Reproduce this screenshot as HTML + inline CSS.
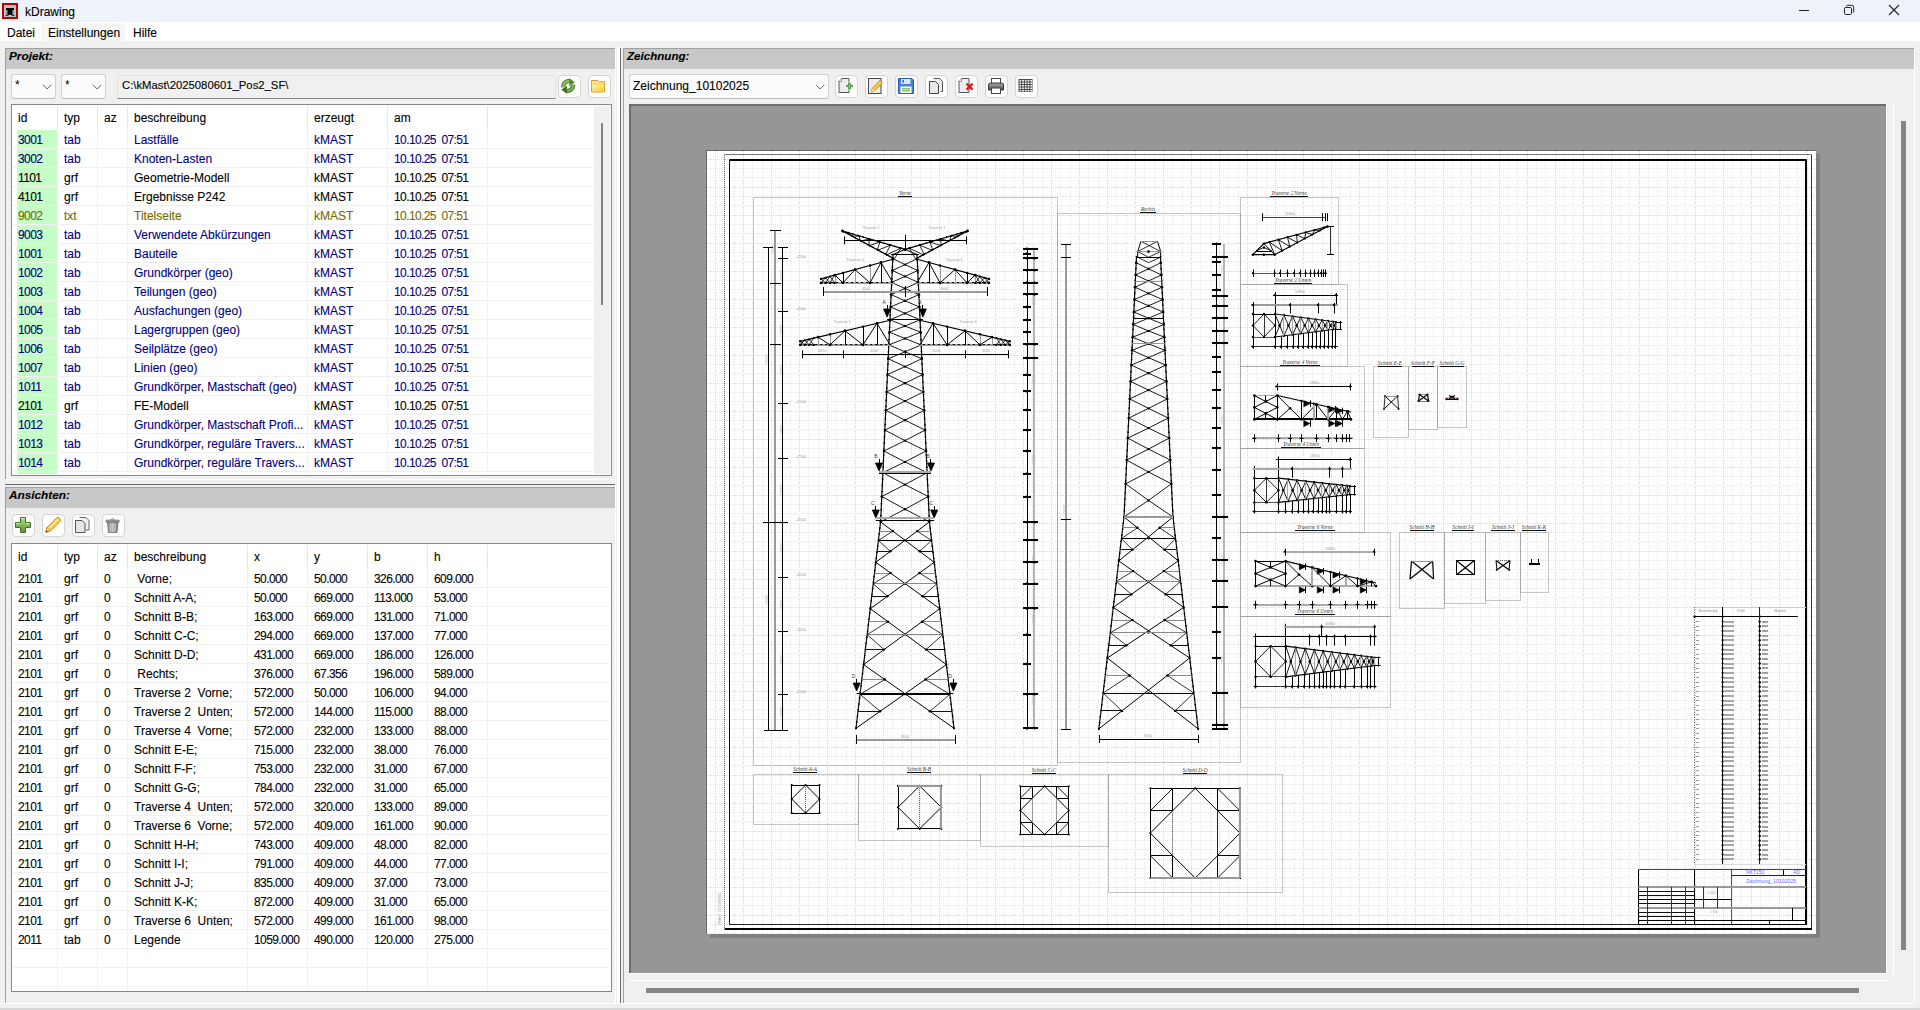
<!DOCTYPE html>
<html><head><meta charset="utf-8"><style>
html,body{margin:0;padding:0;width:1920px;height:1010px;overflow:hidden;background:#f0f0f0}
body{position:relative;font-family:"Liberation Sans", sans-serif;font-size:12px;color:#000}
.t{position:absolute;white-space:pre;font-size:12px;-webkit-text-stroke:0.1px currentColor}
.btn{position:absolute;width:21px;height:21px;border:1px solid #d5d5d5;border-radius:4px;background:#fdfdfd}
.combo{position:absolute;border:1px solid #cfd3d6;border-bottom-color:#b8bcbf;border-radius:3px;background:#fbfbfb}
</style></head><body>
<div style="position:absolute;left:0px;top:0px;width:1920px;height:22px;background:#eef3f9"></div><div style="position:absolute;left:2px;top:3px;width:12px;height:12px;border:2px solid #c00000;background:#b9c3c3"></div><svg style="position:absolute;left:4px;top:5px" width="12" height="12"><path d="M2 3h8v2l-1 0v5h1.5v0.8h-2.5l-1-1H5l-1 1H1.5V10H3V5H2z" fill="#000"/><path d="M3.2 5v5M8.8 5v5" stroke="#5a6a78" stroke-width="1.2"/></svg><div class="t" style="left:25px;top:3px;height:19px;line-height:19px;font-size:12px;color:#000">kDrawing</div><div style="position:absolute;left:1799px;top:10px;width:10px;height:1px;background:#222"></div><svg style="position:absolute;left:1843px;top:4px" width="12" height="12"><rect x="1.5" y="3.5" width="7" height="7" rx="1.2" fill="none" stroke="#222" stroke-width="1"/><path d="M3.5 2.5v-0.2q0-1 1-1h4.2q2 0 2 2v4.2q0 1-1 1" fill="none" stroke="#222" stroke-width="1"/></svg><svg style="position:absolute;left:1888px;top:4px" width="13" height="13"><path d="M1 1l10 10M11 1L1 11" stroke="#222" stroke-width="1.1"/></svg><div style="position:absolute;left:0px;top:22px;width:1920px;height:19px;background:#fff"></div><div style="position:absolute;left:41px;top:23px;width:84px;height:18px;background:#f5f5f5;border-radius:2px"></div><div class="t" style="left:7px;top:24px;height:19px;line-height:19px;font-size:12px">Datei</div><div class="t" style="left:48px;top:24px;height:19px;line-height:19px;font-size:12px">Einstellungen</div><div class="t" style="left:133px;top:24px;height:19px;line-height:19px;font-size:12px">Hilfe</div><div style="position:absolute;left:0px;top:41px;width:1920px;height:969px;background:#f0f0f0"></div><div style="position:absolute;left:0px;top:1003px;width:1915px;height:1px;background:#fff"></div><div style="position:absolute;left:0px;top:1008px;width:1920px;height:2px;background:#d8d8d8"></div><div style="position:absolute;left:5px;top:48px;width:610px;height:1px;background:#a0a0a0"></div><div style="position:absolute;left:5px;top:48px;width:1px;height:431px;background:#a0a0a0"></div><div style="position:absolute;left:6px;top:49px;width:609px;height:20px;background:#c8c8c8"></div><div class="t" style="left:9px;top:46px;height:20px;line-height:20px;font-size:11.8px;font-weight:bold;font-style:italic">Projekt:</div><div class="combo" style="left:11px;top:74px;width:43px;height:23px"></div><div class="t" style="left:15px;top:79px;font-size:12px;line-height:12px;-webkit-text-stroke:0">*</div><svg style="position:absolute;left:42px;top:84px" width="10" height="6"><path d="M1 0.8l4.2 4.2 4.2-4.2" fill="none" stroke="#606060" stroke-width="1"/></svg><div class="combo" style="left:61px;top:74px;width:43px;height:23px"></div><div class="t" style="left:65px;top:79px;font-size:12px;line-height:12px;-webkit-text-stroke:0">*</div><svg style="position:absolute;left:92px;top:84px" width="10" height="6"><path d="M1 0.8l4.2 4.2 4.2-4.2" fill="none" stroke="#606060" stroke-width="1"/></svg><div style="position:absolute;left:117px;top:75px;width:437px;height:22px;background:#f0f0f0;border:1px solid #e2e2e2;border-bottom:1px solid #868686;border-radius:3px 3px 0 0"></div><div class="t" style="left:122px;top:74px;height:22px;line-height:22px;font-size:11.3px">C:\kMast\2025080601_Pos2_SF\</div><svg width="0" height="0" style="position:absolute"><defs><linearGradient id="gG" x1="0" y1="0" x2="0" y2="1"><stop offset="0" stop-color="#b8d890"/><stop offset="1" stop-color="#5a9030"/></linearGradient><linearGradient id="gY" x1="0" y1="0" x2="1" y2="1"><stop offset="0" stop-color="#fff4b0"/><stop offset="1" stop-color="#f0c820"/></linearGradient><linearGradient id="gT" x1="0" y1="0" x2="1" y2="0"><stop offset="0" stop-color="#8a8a8a"/><stop offset="0.5" stop-color="#c0c0c0"/><stop offset="1" stop-color="#7a7a7a"/></linearGradient><linearGradient id="gP" x1="0" y1="0" x2="0" y2="1"><stop offset="0" stop-color="#a8a8a8"/><stop offset="1" stop-color="#505050"/></linearGradient></defs></svg><div class="btn" style="left:558px;top:75px;"></div><svg style="position:absolute;left:561px;top:78px" width="16" height="16" viewBox="0 0 16 16"><path d="M2.3 9.2A5.2 5.2 0 0 1 9.3 3.6" stroke="#3f7a22" stroke-width="4.2" fill="none"/><path d="M2.3 9.2A5.2 5.2 0 0 1 9.3 3.6" stroke="#8cbc64" stroke-width="2.4" fill="none"/><path d="M8.2 0.3L13.8 4.3L8.4 8.2Z" fill="#4a8a2a"/><path d="M11.9 6.8A5.2 5.2 0 0 1 4.9 12.4" stroke="#3f7a22" stroke-width="4.2" fill="none"/><path d="M11.9 6.8A5.2 5.2 0 0 1 4.9 12.4" stroke="#7aae50" stroke-width="2.4" fill="none"/><path d="M6 15.7L0.4 11.8L5.8 7.8Z" fill="#3a6e1c"/></svg><div class="btn" style="left:588px;top:75px;"></div><svg style="position:absolute;left:591px;top:78px" width="16" height="16" viewBox="0 0 16 16"><path d="M0.5 2.5h6.5l1 1.2h5.5v10.3h-13z" fill="#fbe890" stroke="#e29a30" stroke-width="1"/><rect x="1.8" y="5.3" width="10.4" height="1.5" fill="#f5d860"/><rect x="1.5" y="7.5" width="11" height="6" fill="url(#gY)"/></svg><div style="position:absolute;left:11px;top:104px;width:599px;height:370px;border:1px solid #828790;background:#fff"></div><div style="position:absolute;left:57px;top:106px;width:1px;height:24px;background:#e8e8e8"></div><div style="position:absolute;left:97px;top:106px;width:1px;height:24px;background:#e8e8e8"></div><div style="position:absolute;left:127px;top:106px;width:1px;height:24px;background:#e8e8e8"></div><div style="position:absolute;left:307px;top:106px;width:1px;height:24px;background:#e8e8e8"></div><div style="position:absolute;left:387px;top:106px;width:1px;height:24px;background:#e8e8e8"></div><div style="position:absolute;left:487px;top:106px;width:1px;height:24px;background:#e8e8e8"></div><div class="t" style="left:18px;top:109px;height:19px;line-height:19px;color:#000">id</div><div class="t" style="left:64px;top:109px;height:19px;line-height:19px;color:#000">typ</div><div class="t" style="left:104px;top:109px;height:19px;line-height:19px;color:#000">az</div><div class="t" style="left:134px;top:109px;height:19px;line-height:19px;color:#000">beschreibung</div><div class="t" style="left:314px;top:109px;height:19px;line-height:19px;color:#000">erzeugt</div><div class="t" style="left:394px;top:109px;height:19px;line-height:19px;color:#000">am</div><div style="position:absolute;left:17px;top:130px;width:40px;height:18px;background:#c6fcc6"></div><div class="t" style="left:18px;top:131px;height:19px;line-height:19px;color:#000080;letter-spacing:-0.6px">3001</div><div class="t" style="left:64px;top:131px;height:19px;line-height:19px;color:#000080">tab</div><div class="t" style="left:134px;top:131px;height:19px;line-height:19px;color:#000080">Lastfälle</div><div class="t" style="left:314px;top:131px;height:19px;line-height:19px;color:#000080">kMAST</div><div class="t" style="left:394px;top:131px;height:19px;line-height:19px;color:#000080;letter-spacing:-0.6px">10.10.25  07:51</div><div style="position:absolute;left:13px;top:148px;width:580px;height:1px;background:#f0f0f0"></div><div style="position:absolute;left:57px;top:130px;width:1px;height:19px;background:#f0f0f0"></div><div style="position:absolute;left:97px;top:130px;width:1px;height:19px;background:#f0f0f0"></div><div style="position:absolute;left:127px;top:130px;width:1px;height:19px;background:#f0f0f0"></div><div style="position:absolute;left:307px;top:130px;width:1px;height:19px;background:#f0f0f0"></div><div style="position:absolute;left:387px;top:130px;width:1px;height:19px;background:#f0f0f0"></div><div style="position:absolute;left:487px;top:130px;width:1px;height:19px;background:#f0f0f0"></div><div style="position:absolute;left:17px;top:149px;width:40px;height:18px;background:#c6fcc6"></div><div class="t" style="left:18px;top:150px;height:19px;line-height:19px;color:#000080;letter-spacing:-0.6px">3002</div><div class="t" style="left:64px;top:150px;height:19px;line-height:19px;color:#000080">tab</div><div class="t" style="left:134px;top:150px;height:19px;line-height:19px;color:#000080">Knoten-Lasten</div><div class="t" style="left:314px;top:150px;height:19px;line-height:19px;color:#000080">kMAST</div><div class="t" style="left:394px;top:150px;height:19px;line-height:19px;color:#000080;letter-spacing:-0.6px">10.10.25  07:51</div><div style="position:absolute;left:13px;top:167px;width:580px;height:1px;background:#f0f0f0"></div><div style="position:absolute;left:57px;top:149px;width:1px;height:19px;background:#f0f0f0"></div><div style="position:absolute;left:97px;top:149px;width:1px;height:19px;background:#f0f0f0"></div><div style="position:absolute;left:127px;top:149px;width:1px;height:19px;background:#f0f0f0"></div><div style="position:absolute;left:307px;top:149px;width:1px;height:19px;background:#f0f0f0"></div><div style="position:absolute;left:387px;top:149px;width:1px;height:19px;background:#f0f0f0"></div><div style="position:absolute;left:487px;top:149px;width:1px;height:19px;background:#f0f0f0"></div><div style="position:absolute;left:17px;top:168px;width:40px;height:18px;background:#c6fcc6"></div><div class="t" style="left:18px;top:169px;height:19px;line-height:19px;color:#000000;letter-spacing:-0.6px">1101</div><div class="t" style="left:64px;top:169px;height:19px;line-height:19px;color:#000000">grf</div><div class="t" style="left:134px;top:169px;height:19px;line-height:19px;color:#000000">Geometrie-Modell</div><div class="t" style="left:314px;top:169px;height:19px;line-height:19px;color:#000000">kMAST</div><div class="t" style="left:394px;top:169px;height:19px;line-height:19px;color:#000000;letter-spacing:-0.6px">10.10.25  07:51</div><div style="position:absolute;left:13px;top:186px;width:580px;height:1px;background:#f0f0f0"></div><div style="position:absolute;left:57px;top:168px;width:1px;height:19px;background:#f0f0f0"></div><div style="position:absolute;left:97px;top:168px;width:1px;height:19px;background:#f0f0f0"></div><div style="position:absolute;left:127px;top:168px;width:1px;height:19px;background:#f0f0f0"></div><div style="position:absolute;left:307px;top:168px;width:1px;height:19px;background:#f0f0f0"></div><div style="position:absolute;left:387px;top:168px;width:1px;height:19px;background:#f0f0f0"></div><div style="position:absolute;left:487px;top:168px;width:1px;height:19px;background:#f0f0f0"></div><div style="position:absolute;left:17px;top:187px;width:40px;height:18px;background:#c6fcc6"></div><div class="t" style="left:18px;top:188px;height:19px;line-height:19px;color:#000000;letter-spacing:-0.6px">4101</div><div class="t" style="left:64px;top:188px;height:19px;line-height:19px;color:#000000">grf</div><div class="t" style="left:134px;top:188px;height:19px;line-height:19px;color:#000000">Ergebnisse P242</div><div class="t" style="left:314px;top:188px;height:19px;line-height:19px;color:#000000">kMAST</div><div class="t" style="left:394px;top:188px;height:19px;line-height:19px;color:#000000;letter-spacing:-0.6px">10.10.25  07:51</div><div style="position:absolute;left:13px;top:205px;width:580px;height:1px;background:#f0f0f0"></div><div style="position:absolute;left:57px;top:187px;width:1px;height:19px;background:#f0f0f0"></div><div style="position:absolute;left:97px;top:187px;width:1px;height:19px;background:#f0f0f0"></div><div style="position:absolute;left:127px;top:187px;width:1px;height:19px;background:#f0f0f0"></div><div style="position:absolute;left:307px;top:187px;width:1px;height:19px;background:#f0f0f0"></div><div style="position:absolute;left:387px;top:187px;width:1px;height:19px;background:#f0f0f0"></div><div style="position:absolute;left:487px;top:187px;width:1px;height:19px;background:#f0f0f0"></div><div style="position:absolute;left:17px;top:206px;width:40px;height:18px;background:#c6fcc6"></div><div class="t" style="left:18px;top:207px;height:19px;line-height:19px;color:#766a00;letter-spacing:-0.6px">9002</div><div class="t" style="left:64px;top:207px;height:19px;line-height:19px;color:#766a00">txt</div><div class="t" style="left:134px;top:207px;height:19px;line-height:19px;color:#766a00">Titelseite</div><div class="t" style="left:314px;top:207px;height:19px;line-height:19px;color:#766a00">kMAST</div><div class="t" style="left:394px;top:207px;height:19px;line-height:19px;color:#766a00;letter-spacing:-0.6px">10.10.25  07:51</div><div style="position:absolute;left:13px;top:224px;width:580px;height:1px;background:#f0f0f0"></div><div style="position:absolute;left:57px;top:206px;width:1px;height:19px;background:#f0f0f0"></div><div style="position:absolute;left:97px;top:206px;width:1px;height:19px;background:#f0f0f0"></div><div style="position:absolute;left:127px;top:206px;width:1px;height:19px;background:#f0f0f0"></div><div style="position:absolute;left:307px;top:206px;width:1px;height:19px;background:#f0f0f0"></div><div style="position:absolute;left:387px;top:206px;width:1px;height:19px;background:#f0f0f0"></div><div style="position:absolute;left:487px;top:206px;width:1px;height:19px;background:#f0f0f0"></div><div style="position:absolute;left:17px;top:225px;width:40px;height:18px;background:#c6fcc6"></div><div class="t" style="left:18px;top:226px;height:19px;line-height:19px;color:#000080;letter-spacing:-0.6px">9003</div><div class="t" style="left:64px;top:226px;height:19px;line-height:19px;color:#000080">tab</div><div class="t" style="left:134px;top:226px;height:19px;line-height:19px;color:#000080">Verwendete Abkürzungen</div><div class="t" style="left:314px;top:226px;height:19px;line-height:19px;color:#000080">kMAST</div><div class="t" style="left:394px;top:226px;height:19px;line-height:19px;color:#000080;letter-spacing:-0.6px">10.10.25  07:51</div><div style="position:absolute;left:13px;top:243px;width:580px;height:1px;background:#f0f0f0"></div><div style="position:absolute;left:57px;top:225px;width:1px;height:19px;background:#f0f0f0"></div><div style="position:absolute;left:97px;top:225px;width:1px;height:19px;background:#f0f0f0"></div><div style="position:absolute;left:127px;top:225px;width:1px;height:19px;background:#f0f0f0"></div><div style="position:absolute;left:307px;top:225px;width:1px;height:19px;background:#f0f0f0"></div><div style="position:absolute;left:387px;top:225px;width:1px;height:19px;background:#f0f0f0"></div><div style="position:absolute;left:487px;top:225px;width:1px;height:19px;background:#f0f0f0"></div><div style="position:absolute;left:17px;top:244px;width:40px;height:18px;background:#c6fcc6"></div><div class="t" style="left:18px;top:245px;height:19px;line-height:19px;color:#000080;letter-spacing:-0.6px">1001</div><div class="t" style="left:64px;top:245px;height:19px;line-height:19px;color:#000080">tab</div><div class="t" style="left:134px;top:245px;height:19px;line-height:19px;color:#000080">Bauteile</div><div class="t" style="left:314px;top:245px;height:19px;line-height:19px;color:#000080">kMAST</div><div class="t" style="left:394px;top:245px;height:19px;line-height:19px;color:#000080;letter-spacing:-0.6px">10.10.25  07:51</div><div style="position:absolute;left:13px;top:262px;width:580px;height:1px;background:#f0f0f0"></div><div style="position:absolute;left:57px;top:244px;width:1px;height:19px;background:#f0f0f0"></div><div style="position:absolute;left:97px;top:244px;width:1px;height:19px;background:#f0f0f0"></div><div style="position:absolute;left:127px;top:244px;width:1px;height:19px;background:#f0f0f0"></div><div style="position:absolute;left:307px;top:244px;width:1px;height:19px;background:#f0f0f0"></div><div style="position:absolute;left:387px;top:244px;width:1px;height:19px;background:#f0f0f0"></div><div style="position:absolute;left:487px;top:244px;width:1px;height:19px;background:#f0f0f0"></div><div style="position:absolute;left:17px;top:263px;width:40px;height:18px;background:#c6fcc6"></div><div class="t" style="left:18px;top:264px;height:19px;line-height:19px;color:#000080;letter-spacing:-0.6px">1002</div><div class="t" style="left:64px;top:264px;height:19px;line-height:19px;color:#000080">tab</div><div class="t" style="left:134px;top:264px;height:19px;line-height:19px;color:#000080">Grundkörper (geo)</div><div class="t" style="left:314px;top:264px;height:19px;line-height:19px;color:#000080">kMAST</div><div class="t" style="left:394px;top:264px;height:19px;line-height:19px;color:#000080;letter-spacing:-0.6px">10.10.25  07:51</div><div style="position:absolute;left:13px;top:281px;width:580px;height:1px;background:#f0f0f0"></div><div style="position:absolute;left:57px;top:263px;width:1px;height:19px;background:#f0f0f0"></div><div style="position:absolute;left:97px;top:263px;width:1px;height:19px;background:#f0f0f0"></div><div style="position:absolute;left:127px;top:263px;width:1px;height:19px;background:#f0f0f0"></div><div style="position:absolute;left:307px;top:263px;width:1px;height:19px;background:#f0f0f0"></div><div style="position:absolute;left:387px;top:263px;width:1px;height:19px;background:#f0f0f0"></div><div style="position:absolute;left:487px;top:263px;width:1px;height:19px;background:#f0f0f0"></div><div style="position:absolute;left:17px;top:282px;width:40px;height:18px;background:#c6fcc6"></div><div class="t" style="left:18px;top:283px;height:19px;line-height:19px;color:#000080;letter-spacing:-0.6px">1003</div><div class="t" style="left:64px;top:283px;height:19px;line-height:19px;color:#000080">tab</div><div class="t" style="left:134px;top:283px;height:19px;line-height:19px;color:#000080">Teilungen (geo)</div><div class="t" style="left:314px;top:283px;height:19px;line-height:19px;color:#000080">kMAST</div><div class="t" style="left:394px;top:283px;height:19px;line-height:19px;color:#000080;letter-spacing:-0.6px">10.10.25  07:51</div><div style="position:absolute;left:13px;top:300px;width:580px;height:1px;background:#f0f0f0"></div><div style="position:absolute;left:57px;top:282px;width:1px;height:19px;background:#f0f0f0"></div><div style="position:absolute;left:97px;top:282px;width:1px;height:19px;background:#f0f0f0"></div><div style="position:absolute;left:127px;top:282px;width:1px;height:19px;background:#f0f0f0"></div><div style="position:absolute;left:307px;top:282px;width:1px;height:19px;background:#f0f0f0"></div><div style="position:absolute;left:387px;top:282px;width:1px;height:19px;background:#f0f0f0"></div><div style="position:absolute;left:487px;top:282px;width:1px;height:19px;background:#f0f0f0"></div><div style="position:absolute;left:17px;top:301px;width:40px;height:18px;background:#c6fcc6"></div><div class="t" style="left:18px;top:302px;height:19px;line-height:19px;color:#000080;letter-spacing:-0.6px">1004</div><div class="t" style="left:64px;top:302px;height:19px;line-height:19px;color:#000080">tab</div><div class="t" style="left:134px;top:302px;height:19px;line-height:19px;color:#000080">Ausfachungen (geo)</div><div class="t" style="left:314px;top:302px;height:19px;line-height:19px;color:#000080">kMAST</div><div class="t" style="left:394px;top:302px;height:19px;line-height:19px;color:#000080;letter-spacing:-0.6px">10.10.25  07:51</div><div style="position:absolute;left:13px;top:319px;width:580px;height:1px;background:#f0f0f0"></div><div style="position:absolute;left:57px;top:301px;width:1px;height:19px;background:#f0f0f0"></div><div style="position:absolute;left:97px;top:301px;width:1px;height:19px;background:#f0f0f0"></div><div style="position:absolute;left:127px;top:301px;width:1px;height:19px;background:#f0f0f0"></div><div style="position:absolute;left:307px;top:301px;width:1px;height:19px;background:#f0f0f0"></div><div style="position:absolute;left:387px;top:301px;width:1px;height:19px;background:#f0f0f0"></div><div style="position:absolute;left:487px;top:301px;width:1px;height:19px;background:#f0f0f0"></div><div style="position:absolute;left:17px;top:320px;width:40px;height:18px;background:#c6fcc6"></div><div class="t" style="left:18px;top:321px;height:19px;line-height:19px;color:#000080;letter-spacing:-0.6px">1005</div><div class="t" style="left:64px;top:321px;height:19px;line-height:19px;color:#000080">tab</div><div class="t" style="left:134px;top:321px;height:19px;line-height:19px;color:#000080">Lagergruppen (geo)</div><div class="t" style="left:314px;top:321px;height:19px;line-height:19px;color:#000080">kMAST</div><div class="t" style="left:394px;top:321px;height:19px;line-height:19px;color:#000080;letter-spacing:-0.6px">10.10.25  07:51</div><div style="position:absolute;left:13px;top:338px;width:580px;height:1px;background:#f0f0f0"></div><div style="position:absolute;left:57px;top:320px;width:1px;height:19px;background:#f0f0f0"></div><div style="position:absolute;left:97px;top:320px;width:1px;height:19px;background:#f0f0f0"></div><div style="position:absolute;left:127px;top:320px;width:1px;height:19px;background:#f0f0f0"></div><div style="position:absolute;left:307px;top:320px;width:1px;height:19px;background:#f0f0f0"></div><div style="position:absolute;left:387px;top:320px;width:1px;height:19px;background:#f0f0f0"></div><div style="position:absolute;left:487px;top:320px;width:1px;height:19px;background:#f0f0f0"></div><div style="position:absolute;left:17px;top:339px;width:40px;height:18px;background:#c6fcc6"></div><div class="t" style="left:18px;top:340px;height:19px;line-height:19px;color:#000080;letter-spacing:-0.6px">1006</div><div class="t" style="left:64px;top:340px;height:19px;line-height:19px;color:#000080">tab</div><div class="t" style="left:134px;top:340px;height:19px;line-height:19px;color:#000080">Seilplätze (geo)</div><div class="t" style="left:314px;top:340px;height:19px;line-height:19px;color:#000080">kMAST</div><div class="t" style="left:394px;top:340px;height:19px;line-height:19px;color:#000080;letter-spacing:-0.6px">10.10.25  07:51</div><div style="position:absolute;left:13px;top:357px;width:580px;height:1px;background:#f0f0f0"></div><div style="position:absolute;left:57px;top:339px;width:1px;height:19px;background:#f0f0f0"></div><div style="position:absolute;left:97px;top:339px;width:1px;height:19px;background:#f0f0f0"></div><div style="position:absolute;left:127px;top:339px;width:1px;height:19px;background:#f0f0f0"></div><div style="position:absolute;left:307px;top:339px;width:1px;height:19px;background:#f0f0f0"></div><div style="position:absolute;left:387px;top:339px;width:1px;height:19px;background:#f0f0f0"></div><div style="position:absolute;left:487px;top:339px;width:1px;height:19px;background:#f0f0f0"></div><div style="position:absolute;left:17px;top:358px;width:40px;height:18px;background:#c6fcc6"></div><div class="t" style="left:18px;top:359px;height:19px;line-height:19px;color:#000080;letter-spacing:-0.6px">1007</div><div class="t" style="left:64px;top:359px;height:19px;line-height:19px;color:#000080">tab</div><div class="t" style="left:134px;top:359px;height:19px;line-height:19px;color:#000080">Linien (geo)</div><div class="t" style="left:314px;top:359px;height:19px;line-height:19px;color:#000080">kMAST</div><div class="t" style="left:394px;top:359px;height:19px;line-height:19px;color:#000080;letter-spacing:-0.6px">10.10.25  07:51</div><div style="position:absolute;left:13px;top:376px;width:580px;height:1px;background:#f0f0f0"></div><div style="position:absolute;left:57px;top:358px;width:1px;height:19px;background:#f0f0f0"></div><div style="position:absolute;left:97px;top:358px;width:1px;height:19px;background:#f0f0f0"></div><div style="position:absolute;left:127px;top:358px;width:1px;height:19px;background:#f0f0f0"></div><div style="position:absolute;left:307px;top:358px;width:1px;height:19px;background:#f0f0f0"></div><div style="position:absolute;left:387px;top:358px;width:1px;height:19px;background:#f0f0f0"></div><div style="position:absolute;left:487px;top:358px;width:1px;height:19px;background:#f0f0f0"></div><div style="position:absolute;left:17px;top:377px;width:40px;height:18px;background:#c6fcc6"></div><div class="t" style="left:18px;top:378px;height:19px;line-height:19px;color:#000080;letter-spacing:-0.6px">1011</div><div class="t" style="left:64px;top:378px;height:19px;line-height:19px;color:#000080">tab</div><div class="t" style="left:134px;top:378px;height:19px;line-height:19px;color:#000080">Grundkörper, Mastschaft (geo)</div><div class="t" style="left:314px;top:378px;height:19px;line-height:19px;color:#000080">kMAST</div><div class="t" style="left:394px;top:378px;height:19px;line-height:19px;color:#000080;letter-spacing:-0.6px">10.10.25  07:51</div><div style="position:absolute;left:13px;top:395px;width:580px;height:1px;background:#f0f0f0"></div><div style="position:absolute;left:57px;top:377px;width:1px;height:19px;background:#f0f0f0"></div><div style="position:absolute;left:97px;top:377px;width:1px;height:19px;background:#f0f0f0"></div><div style="position:absolute;left:127px;top:377px;width:1px;height:19px;background:#f0f0f0"></div><div style="position:absolute;left:307px;top:377px;width:1px;height:19px;background:#f0f0f0"></div><div style="position:absolute;left:387px;top:377px;width:1px;height:19px;background:#f0f0f0"></div><div style="position:absolute;left:487px;top:377px;width:1px;height:19px;background:#f0f0f0"></div><div style="position:absolute;left:17px;top:396px;width:40px;height:18px;background:#c6fcc6"></div><div class="t" style="left:18px;top:397px;height:19px;line-height:19px;color:#000000;letter-spacing:-0.6px">2101</div><div class="t" style="left:64px;top:397px;height:19px;line-height:19px;color:#000000">grf</div><div class="t" style="left:134px;top:397px;height:19px;line-height:19px;color:#000000">FE-Modell</div><div class="t" style="left:314px;top:397px;height:19px;line-height:19px;color:#000000">kMAST</div><div class="t" style="left:394px;top:397px;height:19px;line-height:19px;color:#000000;letter-spacing:-0.6px">10.10.25  07:51</div><div style="position:absolute;left:13px;top:414px;width:580px;height:1px;background:#f0f0f0"></div><div style="position:absolute;left:57px;top:396px;width:1px;height:19px;background:#f0f0f0"></div><div style="position:absolute;left:97px;top:396px;width:1px;height:19px;background:#f0f0f0"></div><div style="position:absolute;left:127px;top:396px;width:1px;height:19px;background:#f0f0f0"></div><div style="position:absolute;left:307px;top:396px;width:1px;height:19px;background:#f0f0f0"></div><div style="position:absolute;left:387px;top:396px;width:1px;height:19px;background:#f0f0f0"></div><div style="position:absolute;left:487px;top:396px;width:1px;height:19px;background:#f0f0f0"></div><div style="position:absolute;left:17px;top:415px;width:40px;height:18px;background:#c6fcc6"></div><div class="t" style="left:18px;top:416px;height:19px;line-height:19px;color:#000080;letter-spacing:-0.6px">1012</div><div class="t" style="left:64px;top:416px;height:19px;line-height:19px;color:#000080">tab</div><div class="t" style="left:134px;top:416px;height:19px;line-height:19px;color:#000080">Grundkörper, Mastschaft Profi...</div><div class="t" style="left:314px;top:416px;height:19px;line-height:19px;color:#000080">kMAST</div><div class="t" style="left:394px;top:416px;height:19px;line-height:19px;color:#000080;letter-spacing:-0.6px">10.10.25  07:51</div><div style="position:absolute;left:13px;top:433px;width:580px;height:1px;background:#f0f0f0"></div><div style="position:absolute;left:57px;top:415px;width:1px;height:19px;background:#f0f0f0"></div><div style="position:absolute;left:97px;top:415px;width:1px;height:19px;background:#f0f0f0"></div><div style="position:absolute;left:127px;top:415px;width:1px;height:19px;background:#f0f0f0"></div><div style="position:absolute;left:307px;top:415px;width:1px;height:19px;background:#f0f0f0"></div><div style="position:absolute;left:387px;top:415px;width:1px;height:19px;background:#f0f0f0"></div><div style="position:absolute;left:487px;top:415px;width:1px;height:19px;background:#f0f0f0"></div><div style="position:absolute;left:17px;top:434px;width:40px;height:18px;background:#c6fcc6"></div><div class="t" style="left:18px;top:435px;height:19px;line-height:19px;color:#000080;letter-spacing:-0.6px">1013</div><div class="t" style="left:64px;top:435px;height:19px;line-height:19px;color:#000080">tab</div><div class="t" style="left:134px;top:435px;height:19px;line-height:19px;color:#000080">Grundkörper, reguläre Travers...</div><div class="t" style="left:314px;top:435px;height:19px;line-height:19px;color:#000080">kMAST</div><div class="t" style="left:394px;top:435px;height:19px;line-height:19px;color:#000080;letter-spacing:-0.6px">10.10.25  07:51</div><div style="position:absolute;left:13px;top:452px;width:580px;height:1px;background:#f0f0f0"></div><div style="position:absolute;left:57px;top:434px;width:1px;height:19px;background:#f0f0f0"></div><div style="position:absolute;left:97px;top:434px;width:1px;height:19px;background:#f0f0f0"></div><div style="position:absolute;left:127px;top:434px;width:1px;height:19px;background:#f0f0f0"></div><div style="position:absolute;left:307px;top:434px;width:1px;height:19px;background:#f0f0f0"></div><div style="position:absolute;left:387px;top:434px;width:1px;height:19px;background:#f0f0f0"></div><div style="position:absolute;left:487px;top:434px;width:1px;height:19px;background:#f0f0f0"></div><div style="position:absolute;left:17px;top:453px;width:40px;height:18px;background:#c6fcc6"></div><div class="t" style="left:18px;top:454px;height:19px;line-height:19px;color:#000080;letter-spacing:-0.6px">1014</div><div class="t" style="left:64px;top:454px;height:19px;line-height:19px;color:#000080">tab</div><div class="t" style="left:134px;top:454px;height:19px;line-height:19px;color:#000080">Grundkörper, reguläre Travers...</div><div class="t" style="left:314px;top:454px;height:19px;line-height:19px;color:#000080">kMAST</div><div class="t" style="left:394px;top:454px;height:19px;line-height:19px;color:#000080;letter-spacing:-0.6px">10.10.25  07:51</div><div style="position:absolute;left:13px;top:471px;width:580px;height:1px;background:#f0f0f0"></div><div style="position:absolute;left:57px;top:453px;width:1px;height:19px;background:#f0f0f0"></div><div style="position:absolute;left:97px;top:453px;width:1px;height:19px;background:#f0f0f0"></div><div style="position:absolute;left:127px;top:453px;width:1px;height:19px;background:#f0f0f0"></div><div style="position:absolute;left:307px;top:453px;width:1px;height:19px;background:#f0f0f0"></div><div style="position:absolute;left:387px;top:453px;width:1px;height:19px;background:#f0f0f0"></div><div style="position:absolute;left:487px;top:453px;width:1px;height:19px;background:#f0f0f0"></div><div style="position:absolute;left:17px;top:472px;width:40px;height:2px;background:#c6fcc6"></div><div style="position:absolute;left:57px;top:472px;width:1px;height:2px;background:#f0f0f0"></div><div style="position:absolute;left:97px;top:472px;width:1px;height:2px;background:#f0f0f0"></div><div style="position:absolute;left:127px;top:472px;width:1px;height:2px;background:#f0f0f0"></div><div style="position:absolute;left:307px;top:472px;width:1px;height:2px;background:#f0f0f0"></div><div style="position:absolute;left:387px;top:472px;width:1px;height:2px;background:#f0f0f0"></div><div style="position:absolute;left:487px;top:472px;width:1px;height:2px;background:#f0f0f0"></div><div style="position:absolute;left:594px;top:106px;width:16px;height:368px;background:#f0f0f0"></div><div style="position:absolute;left:601px;top:123px;width:2px;height:182px;background:#858585"></div><div style="position:absolute;left:5px;top:479px;width:611px;height:1px;background:#fff"></div><div style="position:absolute;left:5px;top:484px;width:611px;height:1px;background:#696969"></div><div style="position:absolute;left:5px;top:487px;width:610px;height:1px;background:#a0a0a0"></div><div style="position:absolute;left:5px;top:487px;width:1px;height:516px;background:#a0a0a0"></div><div style="position:absolute;left:6px;top:488px;width:609px;height:20px;background:#c8c8c8"></div><div class="t" style="left:9px;top:485px;height:20px;line-height:20px;font-size:11.8px;font-weight:bold;font-style:italic">Ansichten:</div><div class="btn" style="left:12px;top:514px;"></div><svg style="position:absolute;left:15px;top:517px" width="16" height="16" viewBox="0 0 16 16"><path d="M5.5 0.5h5v5h5v5h-5v5h-5v-5h-5v-5h5z" fill="url(#gG)" stroke="#3e7420" stroke-width="1"/><path d="M6.5 1.6h3M1.6 6.6h3.4M11 6.6h3.4" stroke="#e8f4d8" stroke-width="0.9"/></svg><div class="btn" style="left:42px;top:514px;"></div><svg style="position:absolute;left:45px;top:517px" width="16" height="16" viewBox="0 0 16 16"><path d="M0.8 15.2l1.4-4.8L11.6 1a1.6 1.6 0 0 1 2.3 0l1.1 1.1a1.6 1.6 0 0 1 0 2.3L5.6 13.8z" fill="#f6d84a" stroke="#c87a18" stroke-width="1"/><path d="M0.8 15.2l1.4-4.8l3.4 3.4z" fill="#f8d8b0" stroke="#c87a18" stroke-width="0.8"/><path d="M0.8 15.2l0.6-2l1.4 1.4z" fill="#333"/><path d="M3.5 11.5L12.5 2.5" stroke="#fff6b0" stroke-width="1"/></svg><div class="btn" style="left:72px;top:514px;"></div><svg style="position:absolute;left:75px;top:517px" width="16" height="16" viewBox="0 0 16 16"><path d="M4.5 0.5h6.5l3 3v9.5h-3" fill="#f0f0f0" stroke="#666" stroke-width="1"/><path d="M0.5 3.5h6.5l3 3v9h-9.5z" fill="#e6e6e6" stroke="#555" stroke-width="1"/></svg><div class="btn" style="left:102px;top:514px;"></div><svg style="position:absolute;left:105px;top:517px" width="16" height="16" viewBox="0 0 16 16"><path d="M2.5 5h10.5l-1 10.5H3.5z" fill="url(#gT)" stroke="#6a6a6a" stroke-width="0.8"/><rect x="0.8" y="3" width="13.6" height="2.3" rx="1" fill="#9a9a9a" stroke="#6a6a6a" stroke-width="0.6"/><path d="M6 2.8a1.8 1.6 0 0 1 3.4 0" fill="none" stroke="#777" stroke-width="1"/><path d="M5.3 6.5v8M7.7 6.5v8M10.1 6.5v8" stroke="#d8d8d8" stroke-width="0.7"/></svg><div style="position:absolute;left:11px;top:543px;width:599px;height:447px;border:1px solid #828790;background:#fff"></div><div style="position:absolute;left:57px;top:545px;width:1px;height:24px;background:#e8e8e8"></div><div style="position:absolute;left:97px;top:545px;width:1px;height:24px;background:#e8e8e8"></div><div style="position:absolute;left:127px;top:545px;width:1px;height:24px;background:#e8e8e8"></div><div style="position:absolute;left:247px;top:545px;width:1px;height:24px;background:#e8e8e8"></div><div style="position:absolute;left:307px;top:545px;width:1px;height:24px;background:#e8e8e8"></div><div style="position:absolute;left:367px;top:545px;width:1px;height:24px;background:#e8e8e8"></div><div style="position:absolute;left:427px;top:545px;width:1px;height:24px;background:#e8e8e8"></div><div style="position:absolute;left:487px;top:545px;width:1px;height:24px;background:#e8e8e8"></div><div class="t" style="left:18px;top:548px;height:19px;line-height:19px;color:#000">id</div><div class="t" style="left:64px;top:548px;height:19px;line-height:19px;color:#000">typ</div><div class="t" style="left:104px;top:548px;height:19px;line-height:19px;color:#000">az</div><div class="t" style="left:134px;top:548px;height:19px;line-height:19px;color:#000">beschreibung</div><div class="t" style="left:254px;top:548px;height:19px;line-height:19px;color:#000">x</div><div class="t" style="left:314px;top:548px;height:19px;line-height:19px;color:#000">y</div><div class="t" style="left:374px;top:548px;height:19px;line-height:19px;color:#000">b</div><div class="t" style="left:434px;top:548px;height:19px;line-height:19px;color:#000">h</div><div class="t" style="left:18px;top:570px;height:19px;line-height:19px;color:#000;letter-spacing:-0.6px">2101</div><div class="t" style="left:64px;top:570px;height:19px;line-height:19px;color:#000">grf</div><div class="t" style="left:104px;top:570px;height:19px;line-height:19px;color:#000;letter-spacing:-0.6px">0</div><div class="t" style="left:134px;top:570px;height:19px;line-height:19px;color:#000"> Vorne;</div><div class="t" style="left:254px;top:570px;height:19px;line-height:19px;color:#000;letter-spacing:-0.6px">50.000</div><div class="t" style="left:314px;top:570px;height:19px;line-height:19px;color:#000;letter-spacing:-0.6px">50.000</div><div class="t" style="left:374px;top:570px;height:19px;line-height:19px;color:#000;letter-spacing:-0.6px">326.000</div><div class="t" style="left:434px;top:570px;height:19px;line-height:19px;color:#000;letter-spacing:-0.6px">609.000</div><div style="position:absolute;left:13px;top:587px;width:597px;height:1px;background:#f0f0f0"></div><div style="position:absolute;left:57px;top:569px;width:1px;height:19px;background:#f0f0f0"></div><div style="position:absolute;left:97px;top:569px;width:1px;height:19px;background:#f0f0f0"></div><div style="position:absolute;left:127px;top:569px;width:1px;height:19px;background:#f0f0f0"></div><div style="position:absolute;left:247px;top:569px;width:1px;height:19px;background:#f0f0f0"></div><div style="position:absolute;left:307px;top:569px;width:1px;height:19px;background:#f0f0f0"></div><div style="position:absolute;left:367px;top:569px;width:1px;height:19px;background:#f0f0f0"></div><div style="position:absolute;left:427px;top:569px;width:1px;height:19px;background:#f0f0f0"></div><div style="position:absolute;left:487px;top:569px;width:1px;height:19px;background:#f0f0f0"></div><div class="t" style="left:18px;top:589px;height:19px;line-height:19px;color:#000;letter-spacing:-0.6px">2101</div><div class="t" style="left:64px;top:589px;height:19px;line-height:19px;color:#000">grf</div><div class="t" style="left:104px;top:589px;height:19px;line-height:19px;color:#000;letter-spacing:-0.6px">0</div><div class="t" style="left:134px;top:589px;height:19px;line-height:19px;color:#000">Schnitt A-A;</div><div class="t" style="left:254px;top:589px;height:19px;line-height:19px;color:#000;letter-spacing:-0.6px">50.000</div><div class="t" style="left:314px;top:589px;height:19px;line-height:19px;color:#000;letter-spacing:-0.6px">669.000</div><div class="t" style="left:374px;top:589px;height:19px;line-height:19px;color:#000;letter-spacing:-0.6px">113.000</div><div class="t" style="left:434px;top:589px;height:19px;line-height:19px;color:#000;letter-spacing:-0.6px">53.000</div><div style="position:absolute;left:13px;top:606px;width:597px;height:1px;background:#f0f0f0"></div><div style="position:absolute;left:57px;top:588px;width:1px;height:19px;background:#f0f0f0"></div><div style="position:absolute;left:97px;top:588px;width:1px;height:19px;background:#f0f0f0"></div><div style="position:absolute;left:127px;top:588px;width:1px;height:19px;background:#f0f0f0"></div><div style="position:absolute;left:247px;top:588px;width:1px;height:19px;background:#f0f0f0"></div><div style="position:absolute;left:307px;top:588px;width:1px;height:19px;background:#f0f0f0"></div><div style="position:absolute;left:367px;top:588px;width:1px;height:19px;background:#f0f0f0"></div><div style="position:absolute;left:427px;top:588px;width:1px;height:19px;background:#f0f0f0"></div><div style="position:absolute;left:487px;top:588px;width:1px;height:19px;background:#f0f0f0"></div><div class="t" style="left:18px;top:608px;height:19px;line-height:19px;color:#000;letter-spacing:-0.6px">2101</div><div class="t" style="left:64px;top:608px;height:19px;line-height:19px;color:#000">grf</div><div class="t" style="left:104px;top:608px;height:19px;line-height:19px;color:#000;letter-spacing:-0.6px">0</div><div class="t" style="left:134px;top:608px;height:19px;line-height:19px;color:#000">Schnitt B-B;</div><div class="t" style="left:254px;top:608px;height:19px;line-height:19px;color:#000;letter-spacing:-0.6px">163.000</div><div class="t" style="left:314px;top:608px;height:19px;line-height:19px;color:#000;letter-spacing:-0.6px">669.000</div><div class="t" style="left:374px;top:608px;height:19px;line-height:19px;color:#000;letter-spacing:-0.6px">131.000</div><div class="t" style="left:434px;top:608px;height:19px;line-height:19px;color:#000;letter-spacing:-0.6px">71.000</div><div style="position:absolute;left:13px;top:625px;width:597px;height:1px;background:#f0f0f0"></div><div style="position:absolute;left:57px;top:607px;width:1px;height:19px;background:#f0f0f0"></div><div style="position:absolute;left:97px;top:607px;width:1px;height:19px;background:#f0f0f0"></div><div style="position:absolute;left:127px;top:607px;width:1px;height:19px;background:#f0f0f0"></div><div style="position:absolute;left:247px;top:607px;width:1px;height:19px;background:#f0f0f0"></div><div style="position:absolute;left:307px;top:607px;width:1px;height:19px;background:#f0f0f0"></div><div style="position:absolute;left:367px;top:607px;width:1px;height:19px;background:#f0f0f0"></div><div style="position:absolute;left:427px;top:607px;width:1px;height:19px;background:#f0f0f0"></div><div style="position:absolute;left:487px;top:607px;width:1px;height:19px;background:#f0f0f0"></div><div class="t" style="left:18px;top:627px;height:19px;line-height:19px;color:#000;letter-spacing:-0.6px">2101</div><div class="t" style="left:64px;top:627px;height:19px;line-height:19px;color:#000">grf</div><div class="t" style="left:104px;top:627px;height:19px;line-height:19px;color:#000;letter-spacing:-0.6px">0</div><div class="t" style="left:134px;top:627px;height:19px;line-height:19px;color:#000">Schnitt C-C;</div><div class="t" style="left:254px;top:627px;height:19px;line-height:19px;color:#000;letter-spacing:-0.6px">294.000</div><div class="t" style="left:314px;top:627px;height:19px;line-height:19px;color:#000;letter-spacing:-0.6px">669.000</div><div class="t" style="left:374px;top:627px;height:19px;line-height:19px;color:#000;letter-spacing:-0.6px">137.000</div><div class="t" style="left:434px;top:627px;height:19px;line-height:19px;color:#000;letter-spacing:-0.6px">77.000</div><div style="position:absolute;left:13px;top:644px;width:597px;height:1px;background:#f0f0f0"></div><div style="position:absolute;left:57px;top:626px;width:1px;height:19px;background:#f0f0f0"></div><div style="position:absolute;left:97px;top:626px;width:1px;height:19px;background:#f0f0f0"></div><div style="position:absolute;left:127px;top:626px;width:1px;height:19px;background:#f0f0f0"></div><div style="position:absolute;left:247px;top:626px;width:1px;height:19px;background:#f0f0f0"></div><div style="position:absolute;left:307px;top:626px;width:1px;height:19px;background:#f0f0f0"></div><div style="position:absolute;left:367px;top:626px;width:1px;height:19px;background:#f0f0f0"></div><div style="position:absolute;left:427px;top:626px;width:1px;height:19px;background:#f0f0f0"></div><div style="position:absolute;left:487px;top:626px;width:1px;height:19px;background:#f0f0f0"></div><div class="t" style="left:18px;top:646px;height:19px;line-height:19px;color:#000;letter-spacing:-0.6px">2101</div><div class="t" style="left:64px;top:646px;height:19px;line-height:19px;color:#000">grf</div><div class="t" style="left:104px;top:646px;height:19px;line-height:19px;color:#000;letter-spacing:-0.6px">0</div><div class="t" style="left:134px;top:646px;height:19px;line-height:19px;color:#000">Schnitt D-D;</div><div class="t" style="left:254px;top:646px;height:19px;line-height:19px;color:#000;letter-spacing:-0.6px">431.000</div><div class="t" style="left:314px;top:646px;height:19px;line-height:19px;color:#000;letter-spacing:-0.6px">669.000</div><div class="t" style="left:374px;top:646px;height:19px;line-height:19px;color:#000;letter-spacing:-0.6px">186.000</div><div class="t" style="left:434px;top:646px;height:19px;line-height:19px;color:#000;letter-spacing:-0.6px">126.000</div><div style="position:absolute;left:13px;top:663px;width:597px;height:1px;background:#f0f0f0"></div><div style="position:absolute;left:57px;top:645px;width:1px;height:19px;background:#f0f0f0"></div><div style="position:absolute;left:97px;top:645px;width:1px;height:19px;background:#f0f0f0"></div><div style="position:absolute;left:127px;top:645px;width:1px;height:19px;background:#f0f0f0"></div><div style="position:absolute;left:247px;top:645px;width:1px;height:19px;background:#f0f0f0"></div><div style="position:absolute;left:307px;top:645px;width:1px;height:19px;background:#f0f0f0"></div><div style="position:absolute;left:367px;top:645px;width:1px;height:19px;background:#f0f0f0"></div><div style="position:absolute;left:427px;top:645px;width:1px;height:19px;background:#f0f0f0"></div><div style="position:absolute;left:487px;top:645px;width:1px;height:19px;background:#f0f0f0"></div><div class="t" style="left:18px;top:665px;height:19px;line-height:19px;color:#000;letter-spacing:-0.6px">2101</div><div class="t" style="left:64px;top:665px;height:19px;line-height:19px;color:#000">grf</div><div class="t" style="left:104px;top:665px;height:19px;line-height:19px;color:#000;letter-spacing:-0.6px">0</div><div class="t" style="left:134px;top:665px;height:19px;line-height:19px;color:#000"> Rechts;</div><div class="t" style="left:254px;top:665px;height:19px;line-height:19px;color:#000;letter-spacing:-0.6px">376.000</div><div class="t" style="left:314px;top:665px;height:19px;line-height:19px;color:#000;letter-spacing:-0.6px">67.356</div><div class="t" style="left:374px;top:665px;height:19px;line-height:19px;color:#000;letter-spacing:-0.6px">196.000</div><div class="t" style="left:434px;top:665px;height:19px;line-height:19px;color:#000;letter-spacing:-0.6px">589.000</div><div style="position:absolute;left:13px;top:682px;width:597px;height:1px;background:#f0f0f0"></div><div style="position:absolute;left:57px;top:664px;width:1px;height:19px;background:#f0f0f0"></div><div style="position:absolute;left:97px;top:664px;width:1px;height:19px;background:#f0f0f0"></div><div style="position:absolute;left:127px;top:664px;width:1px;height:19px;background:#f0f0f0"></div><div style="position:absolute;left:247px;top:664px;width:1px;height:19px;background:#f0f0f0"></div><div style="position:absolute;left:307px;top:664px;width:1px;height:19px;background:#f0f0f0"></div><div style="position:absolute;left:367px;top:664px;width:1px;height:19px;background:#f0f0f0"></div><div style="position:absolute;left:427px;top:664px;width:1px;height:19px;background:#f0f0f0"></div><div style="position:absolute;left:487px;top:664px;width:1px;height:19px;background:#f0f0f0"></div><div class="t" style="left:18px;top:684px;height:19px;line-height:19px;color:#000;letter-spacing:-0.6px">2101</div><div class="t" style="left:64px;top:684px;height:19px;line-height:19px;color:#000">grf</div><div class="t" style="left:104px;top:684px;height:19px;line-height:19px;color:#000;letter-spacing:-0.6px">0</div><div class="t" style="left:134px;top:684px;height:19px;line-height:19px;color:#000">Traverse 2  Vorne;</div><div class="t" style="left:254px;top:684px;height:19px;line-height:19px;color:#000;letter-spacing:-0.6px">572.000</div><div class="t" style="left:314px;top:684px;height:19px;line-height:19px;color:#000;letter-spacing:-0.6px">50.000</div><div class="t" style="left:374px;top:684px;height:19px;line-height:19px;color:#000;letter-spacing:-0.6px">106.000</div><div class="t" style="left:434px;top:684px;height:19px;line-height:19px;color:#000;letter-spacing:-0.6px">94.000</div><div style="position:absolute;left:13px;top:701px;width:597px;height:1px;background:#f0f0f0"></div><div style="position:absolute;left:57px;top:683px;width:1px;height:19px;background:#f0f0f0"></div><div style="position:absolute;left:97px;top:683px;width:1px;height:19px;background:#f0f0f0"></div><div style="position:absolute;left:127px;top:683px;width:1px;height:19px;background:#f0f0f0"></div><div style="position:absolute;left:247px;top:683px;width:1px;height:19px;background:#f0f0f0"></div><div style="position:absolute;left:307px;top:683px;width:1px;height:19px;background:#f0f0f0"></div><div style="position:absolute;left:367px;top:683px;width:1px;height:19px;background:#f0f0f0"></div><div style="position:absolute;left:427px;top:683px;width:1px;height:19px;background:#f0f0f0"></div><div style="position:absolute;left:487px;top:683px;width:1px;height:19px;background:#f0f0f0"></div><div class="t" style="left:18px;top:703px;height:19px;line-height:19px;color:#000;letter-spacing:-0.6px">2101</div><div class="t" style="left:64px;top:703px;height:19px;line-height:19px;color:#000">grf</div><div class="t" style="left:104px;top:703px;height:19px;line-height:19px;color:#000;letter-spacing:-0.6px">0</div><div class="t" style="left:134px;top:703px;height:19px;line-height:19px;color:#000">Traverse 2  Unten;</div><div class="t" style="left:254px;top:703px;height:19px;line-height:19px;color:#000;letter-spacing:-0.6px">572.000</div><div class="t" style="left:314px;top:703px;height:19px;line-height:19px;color:#000;letter-spacing:-0.6px">144.000</div><div class="t" style="left:374px;top:703px;height:19px;line-height:19px;color:#000;letter-spacing:-0.6px">115.000</div><div class="t" style="left:434px;top:703px;height:19px;line-height:19px;color:#000;letter-spacing:-0.6px">88.000</div><div style="position:absolute;left:13px;top:720px;width:597px;height:1px;background:#f0f0f0"></div><div style="position:absolute;left:57px;top:702px;width:1px;height:19px;background:#f0f0f0"></div><div style="position:absolute;left:97px;top:702px;width:1px;height:19px;background:#f0f0f0"></div><div style="position:absolute;left:127px;top:702px;width:1px;height:19px;background:#f0f0f0"></div><div style="position:absolute;left:247px;top:702px;width:1px;height:19px;background:#f0f0f0"></div><div style="position:absolute;left:307px;top:702px;width:1px;height:19px;background:#f0f0f0"></div><div style="position:absolute;left:367px;top:702px;width:1px;height:19px;background:#f0f0f0"></div><div style="position:absolute;left:427px;top:702px;width:1px;height:19px;background:#f0f0f0"></div><div style="position:absolute;left:487px;top:702px;width:1px;height:19px;background:#f0f0f0"></div><div class="t" style="left:18px;top:722px;height:19px;line-height:19px;color:#000;letter-spacing:-0.6px">2101</div><div class="t" style="left:64px;top:722px;height:19px;line-height:19px;color:#000">grf</div><div class="t" style="left:104px;top:722px;height:19px;line-height:19px;color:#000;letter-spacing:-0.6px">0</div><div class="t" style="left:134px;top:722px;height:19px;line-height:19px;color:#000">Traverse 4  Vorne;</div><div class="t" style="left:254px;top:722px;height:19px;line-height:19px;color:#000;letter-spacing:-0.6px">572.000</div><div class="t" style="left:314px;top:722px;height:19px;line-height:19px;color:#000;letter-spacing:-0.6px">232.000</div><div class="t" style="left:374px;top:722px;height:19px;line-height:19px;color:#000;letter-spacing:-0.6px">133.000</div><div class="t" style="left:434px;top:722px;height:19px;line-height:19px;color:#000;letter-spacing:-0.6px">88.000</div><div style="position:absolute;left:13px;top:739px;width:597px;height:1px;background:#f0f0f0"></div><div style="position:absolute;left:57px;top:721px;width:1px;height:19px;background:#f0f0f0"></div><div style="position:absolute;left:97px;top:721px;width:1px;height:19px;background:#f0f0f0"></div><div style="position:absolute;left:127px;top:721px;width:1px;height:19px;background:#f0f0f0"></div><div style="position:absolute;left:247px;top:721px;width:1px;height:19px;background:#f0f0f0"></div><div style="position:absolute;left:307px;top:721px;width:1px;height:19px;background:#f0f0f0"></div><div style="position:absolute;left:367px;top:721px;width:1px;height:19px;background:#f0f0f0"></div><div style="position:absolute;left:427px;top:721px;width:1px;height:19px;background:#f0f0f0"></div><div style="position:absolute;left:487px;top:721px;width:1px;height:19px;background:#f0f0f0"></div><div class="t" style="left:18px;top:741px;height:19px;line-height:19px;color:#000;letter-spacing:-0.6px">2101</div><div class="t" style="left:64px;top:741px;height:19px;line-height:19px;color:#000">grf</div><div class="t" style="left:104px;top:741px;height:19px;line-height:19px;color:#000;letter-spacing:-0.6px">0</div><div class="t" style="left:134px;top:741px;height:19px;line-height:19px;color:#000">Schnitt E-E;</div><div class="t" style="left:254px;top:741px;height:19px;line-height:19px;color:#000;letter-spacing:-0.6px">715.000</div><div class="t" style="left:314px;top:741px;height:19px;line-height:19px;color:#000;letter-spacing:-0.6px">232.000</div><div class="t" style="left:374px;top:741px;height:19px;line-height:19px;color:#000;letter-spacing:-0.6px">38.000</div><div class="t" style="left:434px;top:741px;height:19px;line-height:19px;color:#000;letter-spacing:-0.6px">76.000</div><div style="position:absolute;left:13px;top:758px;width:597px;height:1px;background:#f0f0f0"></div><div style="position:absolute;left:57px;top:740px;width:1px;height:19px;background:#f0f0f0"></div><div style="position:absolute;left:97px;top:740px;width:1px;height:19px;background:#f0f0f0"></div><div style="position:absolute;left:127px;top:740px;width:1px;height:19px;background:#f0f0f0"></div><div style="position:absolute;left:247px;top:740px;width:1px;height:19px;background:#f0f0f0"></div><div style="position:absolute;left:307px;top:740px;width:1px;height:19px;background:#f0f0f0"></div><div style="position:absolute;left:367px;top:740px;width:1px;height:19px;background:#f0f0f0"></div><div style="position:absolute;left:427px;top:740px;width:1px;height:19px;background:#f0f0f0"></div><div style="position:absolute;left:487px;top:740px;width:1px;height:19px;background:#f0f0f0"></div><div class="t" style="left:18px;top:760px;height:19px;line-height:19px;color:#000;letter-spacing:-0.6px">2101</div><div class="t" style="left:64px;top:760px;height:19px;line-height:19px;color:#000">grf</div><div class="t" style="left:104px;top:760px;height:19px;line-height:19px;color:#000;letter-spacing:-0.6px">0</div><div class="t" style="left:134px;top:760px;height:19px;line-height:19px;color:#000">Schnitt F-F;</div><div class="t" style="left:254px;top:760px;height:19px;line-height:19px;color:#000;letter-spacing:-0.6px">753.000</div><div class="t" style="left:314px;top:760px;height:19px;line-height:19px;color:#000;letter-spacing:-0.6px">232.000</div><div class="t" style="left:374px;top:760px;height:19px;line-height:19px;color:#000;letter-spacing:-0.6px">31.000</div><div class="t" style="left:434px;top:760px;height:19px;line-height:19px;color:#000;letter-spacing:-0.6px">67.000</div><div style="position:absolute;left:13px;top:777px;width:597px;height:1px;background:#f0f0f0"></div><div style="position:absolute;left:57px;top:759px;width:1px;height:19px;background:#f0f0f0"></div><div style="position:absolute;left:97px;top:759px;width:1px;height:19px;background:#f0f0f0"></div><div style="position:absolute;left:127px;top:759px;width:1px;height:19px;background:#f0f0f0"></div><div style="position:absolute;left:247px;top:759px;width:1px;height:19px;background:#f0f0f0"></div><div style="position:absolute;left:307px;top:759px;width:1px;height:19px;background:#f0f0f0"></div><div style="position:absolute;left:367px;top:759px;width:1px;height:19px;background:#f0f0f0"></div><div style="position:absolute;left:427px;top:759px;width:1px;height:19px;background:#f0f0f0"></div><div style="position:absolute;left:487px;top:759px;width:1px;height:19px;background:#f0f0f0"></div><div class="t" style="left:18px;top:779px;height:19px;line-height:19px;color:#000;letter-spacing:-0.6px">2101</div><div class="t" style="left:64px;top:779px;height:19px;line-height:19px;color:#000">grf</div><div class="t" style="left:104px;top:779px;height:19px;line-height:19px;color:#000;letter-spacing:-0.6px">0</div><div class="t" style="left:134px;top:779px;height:19px;line-height:19px;color:#000">Schnitt G-G;</div><div class="t" style="left:254px;top:779px;height:19px;line-height:19px;color:#000;letter-spacing:-0.6px">784.000</div><div class="t" style="left:314px;top:779px;height:19px;line-height:19px;color:#000;letter-spacing:-0.6px">232.000</div><div class="t" style="left:374px;top:779px;height:19px;line-height:19px;color:#000;letter-spacing:-0.6px">31.000</div><div class="t" style="left:434px;top:779px;height:19px;line-height:19px;color:#000;letter-spacing:-0.6px">65.000</div><div style="position:absolute;left:13px;top:796px;width:597px;height:1px;background:#f0f0f0"></div><div style="position:absolute;left:57px;top:778px;width:1px;height:19px;background:#f0f0f0"></div><div style="position:absolute;left:97px;top:778px;width:1px;height:19px;background:#f0f0f0"></div><div style="position:absolute;left:127px;top:778px;width:1px;height:19px;background:#f0f0f0"></div><div style="position:absolute;left:247px;top:778px;width:1px;height:19px;background:#f0f0f0"></div><div style="position:absolute;left:307px;top:778px;width:1px;height:19px;background:#f0f0f0"></div><div style="position:absolute;left:367px;top:778px;width:1px;height:19px;background:#f0f0f0"></div><div style="position:absolute;left:427px;top:778px;width:1px;height:19px;background:#f0f0f0"></div><div style="position:absolute;left:487px;top:778px;width:1px;height:19px;background:#f0f0f0"></div><div class="t" style="left:18px;top:798px;height:19px;line-height:19px;color:#000;letter-spacing:-0.6px">2101</div><div class="t" style="left:64px;top:798px;height:19px;line-height:19px;color:#000">grf</div><div class="t" style="left:104px;top:798px;height:19px;line-height:19px;color:#000;letter-spacing:-0.6px">0</div><div class="t" style="left:134px;top:798px;height:19px;line-height:19px;color:#000">Traverse 4  Unten;</div><div class="t" style="left:254px;top:798px;height:19px;line-height:19px;color:#000;letter-spacing:-0.6px">572.000</div><div class="t" style="left:314px;top:798px;height:19px;line-height:19px;color:#000;letter-spacing:-0.6px">320.000</div><div class="t" style="left:374px;top:798px;height:19px;line-height:19px;color:#000;letter-spacing:-0.6px">133.000</div><div class="t" style="left:434px;top:798px;height:19px;line-height:19px;color:#000;letter-spacing:-0.6px">89.000</div><div style="position:absolute;left:13px;top:815px;width:597px;height:1px;background:#f0f0f0"></div><div style="position:absolute;left:57px;top:797px;width:1px;height:19px;background:#f0f0f0"></div><div style="position:absolute;left:97px;top:797px;width:1px;height:19px;background:#f0f0f0"></div><div style="position:absolute;left:127px;top:797px;width:1px;height:19px;background:#f0f0f0"></div><div style="position:absolute;left:247px;top:797px;width:1px;height:19px;background:#f0f0f0"></div><div style="position:absolute;left:307px;top:797px;width:1px;height:19px;background:#f0f0f0"></div><div style="position:absolute;left:367px;top:797px;width:1px;height:19px;background:#f0f0f0"></div><div style="position:absolute;left:427px;top:797px;width:1px;height:19px;background:#f0f0f0"></div><div style="position:absolute;left:487px;top:797px;width:1px;height:19px;background:#f0f0f0"></div><div class="t" style="left:18px;top:817px;height:19px;line-height:19px;color:#000;letter-spacing:-0.6px">2101</div><div class="t" style="left:64px;top:817px;height:19px;line-height:19px;color:#000">grf</div><div class="t" style="left:104px;top:817px;height:19px;line-height:19px;color:#000;letter-spacing:-0.6px">0</div><div class="t" style="left:134px;top:817px;height:19px;line-height:19px;color:#000">Traverse 6  Vorne;</div><div class="t" style="left:254px;top:817px;height:19px;line-height:19px;color:#000;letter-spacing:-0.6px">572.000</div><div class="t" style="left:314px;top:817px;height:19px;line-height:19px;color:#000;letter-spacing:-0.6px">409.000</div><div class="t" style="left:374px;top:817px;height:19px;line-height:19px;color:#000;letter-spacing:-0.6px">161.000</div><div class="t" style="left:434px;top:817px;height:19px;line-height:19px;color:#000;letter-spacing:-0.6px">90.000</div><div style="position:absolute;left:13px;top:834px;width:597px;height:1px;background:#f0f0f0"></div><div style="position:absolute;left:57px;top:816px;width:1px;height:19px;background:#f0f0f0"></div><div style="position:absolute;left:97px;top:816px;width:1px;height:19px;background:#f0f0f0"></div><div style="position:absolute;left:127px;top:816px;width:1px;height:19px;background:#f0f0f0"></div><div style="position:absolute;left:247px;top:816px;width:1px;height:19px;background:#f0f0f0"></div><div style="position:absolute;left:307px;top:816px;width:1px;height:19px;background:#f0f0f0"></div><div style="position:absolute;left:367px;top:816px;width:1px;height:19px;background:#f0f0f0"></div><div style="position:absolute;left:427px;top:816px;width:1px;height:19px;background:#f0f0f0"></div><div style="position:absolute;left:487px;top:816px;width:1px;height:19px;background:#f0f0f0"></div><div class="t" style="left:18px;top:836px;height:19px;line-height:19px;color:#000;letter-spacing:-0.6px">2101</div><div class="t" style="left:64px;top:836px;height:19px;line-height:19px;color:#000">grf</div><div class="t" style="left:104px;top:836px;height:19px;line-height:19px;color:#000;letter-spacing:-0.6px">0</div><div class="t" style="left:134px;top:836px;height:19px;line-height:19px;color:#000">Schnitt H-H;</div><div class="t" style="left:254px;top:836px;height:19px;line-height:19px;color:#000;letter-spacing:-0.6px">743.000</div><div class="t" style="left:314px;top:836px;height:19px;line-height:19px;color:#000;letter-spacing:-0.6px">409.000</div><div class="t" style="left:374px;top:836px;height:19px;line-height:19px;color:#000;letter-spacing:-0.6px">48.000</div><div class="t" style="left:434px;top:836px;height:19px;line-height:19px;color:#000;letter-spacing:-0.6px">82.000</div><div style="position:absolute;left:13px;top:853px;width:597px;height:1px;background:#f0f0f0"></div><div style="position:absolute;left:57px;top:835px;width:1px;height:19px;background:#f0f0f0"></div><div style="position:absolute;left:97px;top:835px;width:1px;height:19px;background:#f0f0f0"></div><div style="position:absolute;left:127px;top:835px;width:1px;height:19px;background:#f0f0f0"></div><div style="position:absolute;left:247px;top:835px;width:1px;height:19px;background:#f0f0f0"></div><div style="position:absolute;left:307px;top:835px;width:1px;height:19px;background:#f0f0f0"></div><div style="position:absolute;left:367px;top:835px;width:1px;height:19px;background:#f0f0f0"></div><div style="position:absolute;left:427px;top:835px;width:1px;height:19px;background:#f0f0f0"></div><div style="position:absolute;left:487px;top:835px;width:1px;height:19px;background:#f0f0f0"></div><div class="t" style="left:18px;top:855px;height:19px;line-height:19px;color:#000;letter-spacing:-0.6px">2101</div><div class="t" style="left:64px;top:855px;height:19px;line-height:19px;color:#000">grf</div><div class="t" style="left:104px;top:855px;height:19px;line-height:19px;color:#000;letter-spacing:-0.6px">0</div><div class="t" style="left:134px;top:855px;height:19px;line-height:19px;color:#000">Schnitt I-I;</div><div class="t" style="left:254px;top:855px;height:19px;line-height:19px;color:#000;letter-spacing:-0.6px">791.000</div><div class="t" style="left:314px;top:855px;height:19px;line-height:19px;color:#000;letter-spacing:-0.6px">409.000</div><div class="t" style="left:374px;top:855px;height:19px;line-height:19px;color:#000;letter-spacing:-0.6px">44.000</div><div class="t" style="left:434px;top:855px;height:19px;line-height:19px;color:#000;letter-spacing:-0.6px">77.000</div><div style="position:absolute;left:13px;top:872px;width:597px;height:1px;background:#f0f0f0"></div><div style="position:absolute;left:57px;top:854px;width:1px;height:19px;background:#f0f0f0"></div><div style="position:absolute;left:97px;top:854px;width:1px;height:19px;background:#f0f0f0"></div><div style="position:absolute;left:127px;top:854px;width:1px;height:19px;background:#f0f0f0"></div><div style="position:absolute;left:247px;top:854px;width:1px;height:19px;background:#f0f0f0"></div><div style="position:absolute;left:307px;top:854px;width:1px;height:19px;background:#f0f0f0"></div><div style="position:absolute;left:367px;top:854px;width:1px;height:19px;background:#f0f0f0"></div><div style="position:absolute;left:427px;top:854px;width:1px;height:19px;background:#f0f0f0"></div><div style="position:absolute;left:487px;top:854px;width:1px;height:19px;background:#f0f0f0"></div><div class="t" style="left:18px;top:874px;height:19px;line-height:19px;color:#000;letter-spacing:-0.6px">2101</div><div class="t" style="left:64px;top:874px;height:19px;line-height:19px;color:#000">grf</div><div class="t" style="left:104px;top:874px;height:19px;line-height:19px;color:#000;letter-spacing:-0.6px">0</div><div class="t" style="left:134px;top:874px;height:19px;line-height:19px;color:#000">Schnitt J-J;</div><div class="t" style="left:254px;top:874px;height:19px;line-height:19px;color:#000;letter-spacing:-0.6px">835.000</div><div class="t" style="left:314px;top:874px;height:19px;line-height:19px;color:#000;letter-spacing:-0.6px">409.000</div><div class="t" style="left:374px;top:874px;height:19px;line-height:19px;color:#000;letter-spacing:-0.6px">37.000</div><div class="t" style="left:434px;top:874px;height:19px;line-height:19px;color:#000;letter-spacing:-0.6px">73.000</div><div style="position:absolute;left:13px;top:891px;width:597px;height:1px;background:#f0f0f0"></div><div style="position:absolute;left:57px;top:873px;width:1px;height:19px;background:#f0f0f0"></div><div style="position:absolute;left:97px;top:873px;width:1px;height:19px;background:#f0f0f0"></div><div style="position:absolute;left:127px;top:873px;width:1px;height:19px;background:#f0f0f0"></div><div style="position:absolute;left:247px;top:873px;width:1px;height:19px;background:#f0f0f0"></div><div style="position:absolute;left:307px;top:873px;width:1px;height:19px;background:#f0f0f0"></div><div style="position:absolute;left:367px;top:873px;width:1px;height:19px;background:#f0f0f0"></div><div style="position:absolute;left:427px;top:873px;width:1px;height:19px;background:#f0f0f0"></div><div style="position:absolute;left:487px;top:873px;width:1px;height:19px;background:#f0f0f0"></div><div class="t" style="left:18px;top:893px;height:19px;line-height:19px;color:#000;letter-spacing:-0.6px">2101</div><div class="t" style="left:64px;top:893px;height:19px;line-height:19px;color:#000">grf</div><div class="t" style="left:104px;top:893px;height:19px;line-height:19px;color:#000;letter-spacing:-0.6px">0</div><div class="t" style="left:134px;top:893px;height:19px;line-height:19px;color:#000">Schnitt K-K;</div><div class="t" style="left:254px;top:893px;height:19px;line-height:19px;color:#000;letter-spacing:-0.6px">872.000</div><div class="t" style="left:314px;top:893px;height:19px;line-height:19px;color:#000;letter-spacing:-0.6px">409.000</div><div class="t" style="left:374px;top:893px;height:19px;line-height:19px;color:#000;letter-spacing:-0.6px">31.000</div><div class="t" style="left:434px;top:893px;height:19px;line-height:19px;color:#000;letter-spacing:-0.6px">65.000</div><div style="position:absolute;left:13px;top:910px;width:597px;height:1px;background:#f0f0f0"></div><div style="position:absolute;left:57px;top:892px;width:1px;height:19px;background:#f0f0f0"></div><div style="position:absolute;left:97px;top:892px;width:1px;height:19px;background:#f0f0f0"></div><div style="position:absolute;left:127px;top:892px;width:1px;height:19px;background:#f0f0f0"></div><div style="position:absolute;left:247px;top:892px;width:1px;height:19px;background:#f0f0f0"></div><div style="position:absolute;left:307px;top:892px;width:1px;height:19px;background:#f0f0f0"></div><div style="position:absolute;left:367px;top:892px;width:1px;height:19px;background:#f0f0f0"></div><div style="position:absolute;left:427px;top:892px;width:1px;height:19px;background:#f0f0f0"></div><div style="position:absolute;left:487px;top:892px;width:1px;height:19px;background:#f0f0f0"></div><div class="t" style="left:18px;top:912px;height:19px;line-height:19px;color:#000;letter-spacing:-0.6px">2101</div><div class="t" style="left:64px;top:912px;height:19px;line-height:19px;color:#000">grf</div><div class="t" style="left:104px;top:912px;height:19px;line-height:19px;color:#000;letter-spacing:-0.6px">0</div><div class="t" style="left:134px;top:912px;height:19px;line-height:19px;color:#000">Traverse 6  Unten;</div><div class="t" style="left:254px;top:912px;height:19px;line-height:19px;color:#000;letter-spacing:-0.6px">572.000</div><div class="t" style="left:314px;top:912px;height:19px;line-height:19px;color:#000;letter-spacing:-0.6px">499.000</div><div class="t" style="left:374px;top:912px;height:19px;line-height:19px;color:#000;letter-spacing:-0.6px">161.000</div><div class="t" style="left:434px;top:912px;height:19px;line-height:19px;color:#000;letter-spacing:-0.6px">98.000</div><div style="position:absolute;left:13px;top:929px;width:597px;height:1px;background:#f0f0f0"></div><div style="position:absolute;left:57px;top:911px;width:1px;height:19px;background:#f0f0f0"></div><div style="position:absolute;left:97px;top:911px;width:1px;height:19px;background:#f0f0f0"></div><div style="position:absolute;left:127px;top:911px;width:1px;height:19px;background:#f0f0f0"></div><div style="position:absolute;left:247px;top:911px;width:1px;height:19px;background:#f0f0f0"></div><div style="position:absolute;left:307px;top:911px;width:1px;height:19px;background:#f0f0f0"></div><div style="position:absolute;left:367px;top:911px;width:1px;height:19px;background:#f0f0f0"></div><div style="position:absolute;left:427px;top:911px;width:1px;height:19px;background:#f0f0f0"></div><div style="position:absolute;left:487px;top:911px;width:1px;height:19px;background:#f0f0f0"></div><div class="t" style="left:18px;top:931px;height:19px;line-height:19px;color:#000;letter-spacing:-0.6px">2011</div><div class="t" style="left:64px;top:931px;height:19px;line-height:19px;color:#000">tab</div><div class="t" style="left:104px;top:931px;height:19px;line-height:19px;color:#000;letter-spacing:-0.6px">0</div><div class="t" style="left:134px;top:931px;height:19px;line-height:19px;color:#000">Legende</div><div class="t" style="left:254px;top:931px;height:19px;line-height:19px;color:#000;letter-spacing:-0.6px">1059.000</div><div class="t" style="left:314px;top:931px;height:19px;line-height:19px;color:#000;letter-spacing:-0.6px">490.000</div><div class="t" style="left:374px;top:931px;height:19px;line-height:19px;color:#000;letter-spacing:-0.6px">120.000</div><div class="t" style="left:434px;top:931px;height:19px;line-height:19px;color:#000;letter-spacing:-0.6px">275.000</div><div style="position:absolute;left:13px;top:948px;width:597px;height:1px;background:#f0f0f0"></div><div style="position:absolute;left:57px;top:930px;width:1px;height:19px;background:#f0f0f0"></div><div style="position:absolute;left:97px;top:930px;width:1px;height:19px;background:#f0f0f0"></div><div style="position:absolute;left:127px;top:930px;width:1px;height:19px;background:#f0f0f0"></div><div style="position:absolute;left:247px;top:930px;width:1px;height:19px;background:#f0f0f0"></div><div style="position:absolute;left:307px;top:930px;width:1px;height:19px;background:#f0f0f0"></div><div style="position:absolute;left:367px;top:930px;width:1px;height:19px;background:#f0f0f0"></div><div style="position:absolute;left:427px;top:930px;width:1px;height:19px;background:#f0f0f0"></div><div style="position:absolute;left:487px;top:930px;width:1px;height:19px;background:#f0f0f0"></div><div style="position:absolute;left:13px;top:967px;width:597px;height:1px;background:#f0f0f0"></div><div style="position:absolute;left:57px;top:949px;width:1px;height:19px;background:#f0f0f0"></div><div style="position:absolute;left:97px;top:949px;width:1px;height:19px;background:#f0f0f0"></div><div style="position:absolute;left:127px;top:949px;width:1px;height:19px;background:#f0f0f0"></div><div style="position:absolute;left:247px;top:949px;width:1px;height:19px;background:#f0f0f0"></div><div style="position:absolute;left:307px;top:949px;width:1px;height:19px;background:#f0f0f0"></div><div style="position:absolute;left:367px;top:949px;width:1px;height:19px;background:#f0f0f0"></div><div style="position:absolute;left:427px;top:949px;width:1px;height:19px;background:#f0f0f0"></div><div style="position:absolute;left:487px;top:949px;width:1px;height:19px;background:#f0f0f0"></div><div style="position:absolute;left:13px;top:986px;width:597px;height:1px;background:#f0f0f0"></div><div style="position:absolute;left:57px;top:968px;width:1px;height:19px;background:#f0f0f0"></div><div style="position:absolute;left:97px;top:968px;width:1px;height:19px;background:#f0f0f0"></div><div style="position:absolute;left:127px;top:968px;width:1px;height:19px;background:#f0f0f0"></div><div style="position:absolute;left:247px;top:968px;width:1px;height:19px;background:#f0f0f0"></div><div style="position:absolute;left:307px;top:968px;width:1px;height:19px;background:#f0f0f0"></div><div style="position:absolute;left:367px;top:968px;width:1px;height:19px;background:#f0f0f0"></div><div style="position:absolute;left:427px;top:968px;width:1px;height:19px;background:#f0f0f0"></div><div style="position:absolute;left:487px;top:968px;width:1px;height:19px;background:#f0f0f0"></div><div style="position:absolute;left:57px;top:987px;width:1px;height:3px;background:#f0f0f0"></div><div style="position:absolute;left:97px;top:987px;width:1px;height:3px;background:#f0f0f0"></div><div style="position:absolute;left:127px;top:987px;width:1px;height:3px;background:#f0f0f0"></div><div style="position:absolute;left:247px;top:987px;width:1px;height:3px;background:#f0f0f0"></div><div style="position:absolute;left:307px;top:987px;width:1px;height:3px;background:#f0f0f0"></div><div style="position:absolute;left:367px;top:987px;width:1px;height:3px;background:#f0f0f0"></div><div style="position:absolute;left:427px;top:987px;width:1px;height:3px;background:#f0f0f0"></div><div style="position:absolute;left:487px;top:987px;width:1px;height:3px;background:#f0f0f0"></div><div style="position:absolute;left:615px;top:47px;width:1px;height:957px;background:#fff"></div><div style="position:absolute;left:617px;top:47px;width:3px;height:957px;background:#fff"></div><div style="position:absolute;left:620px;top:48px;width:1px;height:955px;background:#696969"></div><div style="position:absolute;left:623px;top:48px;width:1291px;height:1px;background:#a0a0a0"></div><div style="position:absolute;left:623px;top:48px;width:1px;height:955px;background:#a0a0a0"></div><div style="position:absolute;left:624px;top:49px;width:1290px;height:20px;background:#c8c8c8"></div><div class="t" style="left:627px;top:46px;height:20px;line-height:20px;font-size:11.6px;font-weight:bold;font-style:italic">Zeichnung:</div><div style="position:absolute;left:1914px;top:47px;width:1px;height:957px;background:#fff"></div><div class="combo" style="left:629px;top:74px;width:198px;height:23px"></div><div class="t" style="left:633px;top:75px;height:22px;line-height:22px;font-size:12px">Zeichnung_10102025</div><svg style="position:absolute;left:815px;top:84px" width="10" height="6"><path d="M1 0.8l4.2 4.2 4.2-4.2" fill="none" stroke="#606060" stroke-width="1"/></svg><div class="btn" style="left:835px;top:75px;"></div><svg style="position:absolute;left:838px;top:78px" width="16" height="16" viewBox="0 0 16 16"><path d="M3.5 0.5h7.5v14h-10v-11z" fill="#ececec" stroke="#555" stroke-width="1"/><path d="M0.5 3.5h3v-3" fill="#fff" stroke="#777" stroke-width="0.8"/><circle cx="11.5" cy="8" r="3.8" fill="#fff"/><path d="M8.3 8h6.4M11.5 4.8v6.4" stroke="#2a8a2a" stroke-width="2.6"/><path d="M8.8 8h5.4M11.5 5.3v5.4" stroke="#7ad07a" stroke-width="1"/></svg><div class="btn" style="left:865px;top:75px;"></div><svg style="position:absolute;left:868px;top:78px" width="16" height="16" viewBox="0 0 16 16"><rect x="0.5" y="0.5" width="12.5" height="15" fill="#ececec" stroke="#444" stroke-width="1"/><path d="M3 14l1.1-3.6L12 2.5l2.4 2.4l-7.9 7.9z" fill="#f6d040" stroke="#c87a18" stroke-width="0.9"/><path d="M3 14l1.1-3.6l2.4 2.4z" fill="#f8d8b0"/></svg><div class="btn" style="left:895px;top:75px;"></div><svg style="position:absolute;left:898px;top:78px" width="16" height="16" viewBox="0 0 16 16"><path d="M0.5 0.5h13.5l1.5 1.5v13.5h-15z" fill="#4a82d8" stroke="#2a5ab8" stroke-width="1"/><rect x="3" y="1" width="9.5" height="5" fill="#dde8fa"/><rect x="4.5" y="1.8" width="1.4" height="3" fill="#2a5ab8"/><rect x="2.5" y="8.5" width="11" height="6.5" fill="#fff"/><path d="M4 10.8h8M4 12.8h8" stroke="#6ab84a" stroke-width="1.3"/></svg><div class="btn" style="left:925px;top:75px;"></div><svg style="position:absolute;left:928px;top:78px" width="16" height="16" viewBox="0 0 16 16"><path d="M5.5 0.5h6l3 3v10h-2" fill="#eee" stroke="#555" stroke-width="1"/><path d="M1.5 3.5h6l3 3v9h-9z" fill="#e8e8e8" stroke="#444" stroke-width="1"/></svg><div class="btn" style="left:955px;top:75px;"></div><svg style="position:absolute;left:958px;top:78px" width="16" height="16" viewBox="0 0 16 16"><path d="M3.5 0.5h7.5v14h-10v-11z" fill="#ececec" stroke="#555" stroke-width="1"/><path d="M0.5 3.5h3v-3" fill="#fff" stroke="#777" stroke-width="0.8"/><path d="M8.6 5.6l6 6M14.6 5.6l-6 6" stroke="#d42020" stroke-width="2.4"/></svg><div class="btn" style="left:985px;top:75px;"></div><svg style="position:absolute;left:988px;top:78px" width="16" height="16" viewBox="0 0 16 16"><rect x="3.5" y="0.5" width="9" height="5" fill="#fff" stroke="#444" stroke-width="1"/><path d="M0.5 7a2 2 0 0 1 2-2h11a2 2 0 0 1 2 2v5h-15z" fill="url(#gP)" stroke="#3a3a3a" stroke-width="1"/><rect x="3.5" y="10" width="9" height="5.5" fill="#fff" stroke="#444" stroke-width="1"/></svg><div class="btn" style="left:1015px;top:75px;"></div><svg style="position:absolute;left:1018px;top:78px" width="16" height="16" viewBox="0 0 16 16"><rect x="0.5" y="1" width="14" height="13" fill="#4a4a4a"/><rect x="1.50" y="2.00" width="1.7" height="1.5" fill="#fff"/><rect x="4.20" y="2.00" width="1.7" height="1.5" fill="#fff"/><rect x="6.90" y="2.00" width="1.7" height="1.5" fill="#fff"/><rect x="9.60" y="2.00" width="1.7" height="1.5" fill="#fff"/><rect x="12.30" y="2.00" width="1.7" height="1.5" fill="#fff"/><rect x="1.50" y="4.50" width="1.7" height="1.5" fill="#fff"/><rect x="4.20" y="4.50" width="1.7" height="1.5" fill="#fff"/><rect x="6.90" y="4.50" width="1.7" height="1.5" fill="#fff"/><rect x="9.60" y="4.50" width="1.7" height="1.5" fill="#fff"/><rect x="12.30" y="4.50" width="1.7" height="1.5" fill="#fff"/><rect x="1.50" y="7.00" width="1.7" height="1.5" fill="#fff"/><rect x="4.20" y="7.00" width="1.7" height="1.5" fill="#fff"/><rect x="6.90" y="7.00" width="1.7" height="1.5" fill="#fff"/><rect x="9.60" y="7.00" width="1.7" height="1.5" fill="#fff"/><rect x="12.30" y="7.00" width="1.7" height="1.5" fill="#fff"/><rect x="1.50" y="9.50" width="1.7" height="1.5" fill="#fff"/><rect x="4.20" y="9.50" width="1.7" height="1.5" fill="#fff"/><rect x="6.90" y="9.50" width="1.7" height="1.5" fill="#fff"/><rect x="9.60" y="9.50" width="1.7" height="1.5" fill="#fff"/><rect x="12.30" y="9.50" width="1.7" height="1.5" fill="#fff"/><rect x="1.50" y="12.00" width="1.7" height="1.5" fill="#fff"/><rect x="4.20" y="12.00" width="1.7" height="1.5" fill="#fff"/><rect x="6.90" y="12.00" width="1.7" height="1.5" fill="#fff"/><rect x="9.60" y="12.00" width="1.7" height="1.5" fill="#fff"/><rect x="12.30" y="12.00" width="1.7" height="1.5" fill="#fff"/></svg><div style="position:absolute;left:629px;top:104px;width:1258px;height:870px;background:#969696"></div><div style="position:absolute;left:629px;top:104px;width:1258px;height:2px;background:#6e6e6e"></div><div style="position:absolute;left:629px;top:104px;width:2px;height:870px;background:#6e6e6e"></div><div style="position:absolute;left:1886px;top:104px;width:1px;height:870px;background:#fff"></div><div style="position:absolute;left:629px;top:973px;width:1258px;height:1px;background:#fff"></div><div style="position:absolute;left:1893px;top:104px;width:1px;height:871px;background:#fff"></div><div style="position:absolute;left:629px;top:980px;width:1259px;height:1px;background:#fff"></div><div style="position:absolute;left:1901px;top:121px;width:5px;height:829px;background:#858585"></div><div style="position:absolute;left:646px;top:988px;width:1213px;height:5px;background:#858585"></div>
<svg style="position:absolute;left:0;top:0" width="1920" height="1010" viewBox="0 0 1920 1010" font-family="Liberation Sans, sans-serif"><rect x="710.0" y="154.0" width="1110.0" height="784.0" fill="#808080" stroke="none" stroke-width="1.0"/><rect x="706.0" y="150.0" width="1110.0" height="784.0" fill="#ffffff" stroke="none" stroke-width="1.0"/><line x1="706.0" y1="150.5" x2="1816.0" y2="150.5" stroke="#6a6a6a" stroke-width="1"/><line x1="706.5" y1="150.0" x2="706.5" y2="934.0" stroke="#6a6a6a" stroke-width="1"/><g><line x1="715.5" y1="151" x2="715.5" y2="934" stroke="#c3e2e2" stroke-width="1" stroke-dasharray="1,1"/><line x1="724.5" y1="151" x2="724.5" y2="934" stroke="#d9eded" stroke-width="1" stroke-dasharray="1,1"/><line x1="734.5" y1="151" x2="734.5" y2="934" stroke="#d9eded" stroke-width="1" stroke-dasharray="1,1"/><line x1="743.5" y1="151" x2="743.5" y2="934" stroke="#c3e2e2" stroke-width="1" stroke-dasharray="1,1"/><line x1="752.5" y1="151" x2="752.5" y2="934" stroke="#d9eded" stroke-width="1" stroke-dasharray="1,1"/><line x1="762.5" y1="151" x2="762.5" y2="934" stroke="#d9eded" stroke-width="1" stroke-dasharray="1,1"/><line x1="771.5" y1="151" x2="771.5" y2="934" stroke="#c3e2e2" stroke-width="1" stroke-dasharray="1,1"/><line x1="780.5" y1="151" x2="780.5" y2="934" stroke="#d9eded" stroke-width="1" stroke-dasharray="1,1"/><line x1="790.5" y1="151" x2="790.5" y2="934" stroke="#d9eded" stroke-width="1" stroke-dasharray="1,1"/><line x1="799.5" y1="151" x2="799.5" y2="934" stroke="#c3e2e2" stroke-width="1" stroke-dasharray="1,1"/><line x1="808.5" y1="151" x2="808.5" y2="934" stroke="#d9eded" stroke-width="1" stroke-dasharray="1,1"/><line x1="818.5" y1="151" x2="818.5" y2="934" stroke="#d9eded" stroke-width="1" stroke-dasharray="1,1"/><line x1="827.5" y1="151" x2="827.5" y2="934" stroke="#c3e2e2" stroke-width="1" stroke-dasharray="1,1"/><line x1="836.5" y1="151" x2="836.5" y2="934" stroke="#d9eded" stroke-width="1" stroke-dasharray="1,1"/><line x1="846.5" y1="151" x2="846.5" y2="934" stroke="#d9eded" stroke-width="1" stroke-dasharray="1,1"/><line x1="855.5" y1="151" x2="855.5" y2="934" stroke="#c3e2e2" stroke-width="1" stroke-dasharray="1,1"/><line x1="864.5" y1="151" x2="864.5" y2="934" stroke="#d9eded" stroke-width="1" stroke-dasharray="1,1"/><line x1="874.5" y1="151" x2="874.5" y2="934" stroke="#d9eded" stroke-width="1" stroke-dasharray="1,1"/><line x1="883.5" y1="151" x2="883.5" y2="934" stroke="#c3e2e2" stroke-width="1" stroke-dasharray="1,1"/><line x1="892.5" y1="151" x2="892.5" y2="934" stroke="#d9eded" stroke-width="1" stroke-dasharray="1,1"/><line x1="902.5" y1="151" x2="902.5" y2="934" stroke="#d9eded" stroke-width="1" stroke-dasharray="1,1"/><line x1="911.5" y1="151" x2="911.5" y2="934" stroke="#c3e2e2" stroke-width="1" stroke-dasharray="1,1"/><line x1="920.5" y1="151" x2="920.5" y2="934" stroke="#d9eded" stroke-width="1" stroke-dasharray="1,1"/><line x1="930.5" y1="151" x2="930.5" y2="934" stroke="#d9eded" stroke-width="1" stroke-dasharray="1,1"/><line x1="939.5" y1="151" x2="939.5" y2="934" stroke="#c3e2e2" stroke-width="1" stroke-dasharray="1,1"/><line x1="948.5" y1="151" x2="948.5" y2="934" stroke="#d9eded" stroke-width="1" stroke-dasharray="1,1"/><line x1="958.5" y1="151" x2="958.5" y2="934" stroke="#d9eded" stroke-width="1" stroke-dasharray="1,1"/><line x1="967.5" y1="151" x2="967.5" y2="934" stroke="#c3e2e2" stroke-width="1" stroke-dasharray="1,1"/><line x1="976.5" y1="151" x2="976.5" y2="934" stroke="#d9eded" stroke-width="1" stroke-dasharray="1,1"/><line x1="986.5" y1="151" x2="986.5" y2="934" stroke="#d9eded" stroke-width="1" stroke-dasharray="1,1"/><line x1="995.5" y1="151" x2="995.5" y2="934" stroke="#c3e2e2" stroke-width="1" stroke-dasharray="1,1"/><line x1="1004.5" y1="151" x2="1004.5" y2="934" stroke="#d9eded" stroke-width="1" stroke-dasharray="1,1"/><line x1="1014.5" y1="151" x2="1014.5" y2="934" stroke="#d9eded" stroke-width="1" stroke-dasharray="1,1"/><line x1="1023.5" y1="151" x2="1023.5" y2="934" stroke="#c3e2e2" stroke-width="1" stroke-dasharray="1,1"/><line x1="1032.5" y1="151" x2="1032.5" y2="934" stroke="#d9eded" stroke-width="1" stroke-dasharray="1,1"/><line x1="1042.5" y1="151" x2="1042.5" y2="934" stroke="#d9eded" stroke-width="1" stroke-dasharray="1,1"/><line x1="1051.5" y1="151" x2="1051.5" y2="934" stroke="#c3e2e2" stroke-width="1" stroke-dasharray="1,1"/><line x1="1060.5" y1="151" x2="1060.5" y2="934" stroke="#d9eded" stroke-width="1" stroke-dasharray="1,1"/><line x1="1070.5" y1="151" x2="1070.5" y2="934" stroke="#d9eded" stroke-width="1" stroke-dasharray="1,1"/><line x1="1079.5" y1="151" x2="1079.5" y2="934" stroke="#c3e2e2" stroke-width="1" stroke-dasharray="1,1"/><line x1="1088.5" y1="151" x2="1088.5" y2="934" stroke="#d9eded" stroke-width="1" stroke-dasharray="1,1"/><line x1="1098.5" y1="151" x2="1098.5" y2="934" stroke="#d9eded" stroke-width="1" stroke-dasharray="1,1"/><line x1="1107.5" y1="151" x2="1107.5" y2="934" stroke="#c3e2e2" stroke-width="1" stroke-dasharray="1,1"/><line x1="1116.5" y1="151" x2="1116.5" y2="934" stroke="#d9eded" stroke-width="1" stroke-dasharray="1,1"/><line x1="1126.5" y1="151" x2="1126.5" y2="934" stroke="#d9eded" stroke-width="1" stroke-dasharray="1,1"/><line x1="1135.5" y1="151" x2="1135.5" y2="934" stroke="#c3e2e2" stroke-width="1" stroke-dasharray="1,1"/><line x1="1144.5" y1="151" x2="1144.5" y2="934" stroke="#d9eded" stroke-width="1" stroke-dasharray="1,1"/><line x1="1154.5" y1="151" x2="1154.5" y2="934" stroke="#d9eded" stroke-width="1" stroke-dasharray="1,1"/><line x1="1163.5" y1="151" x2="1163.5" y2="934" stroke="#c3e2e2" stroke-width="1" stroke-dasharray="1,1"/><line x1="1172.5" y1="151" x2="1172.5" y2="934" stroke="#d9eded" stroke-width="1" stroke-dasharray="1,1"/><line x1="1182.5" y1="151" x2="1182.5" y2="934" stroke="#d9eded" stroke-width="1" stroke-dasharray="1,1"/><line x1="1191.5" y1="151" x2="1191.5" y2="934" stroke="#c3e2e2" stroke-width="1" stroke-dasharray="1,1"/><line x1="1200.5" y1="151" x2="1200.5" y2="934" stroke="#d9eded" stroke-width="1" stroke-dasharray="1,1"/><line x1="1210.5" y1="151" x2="1210.5" y2="934" stroke="#d9eded" stroke-width="1" stroke-dasharray="1,1"/><line x1="1219.5" y1="151" x2="1219.5" y2="934" stroke="#c3e2e2" stroke-width="1" stroke-dasharray="1,1"/><line x1="1228.5" y1="151" x2="1228.5" y2="934" stroke="#d9eded" stroke-width="1" stroke-dasharray="1,1"/><line x1="1238.5" y1="151" x2="1238.5" y2="934" stroke="#d9eded" stroke-width="1" stroke-dasharray="1,1"/><line x1="1247.5" y1="151" x2="1247.5" y2="934" stroke="#c3e2e2" stroke-width="1" stroke-dasharray="1,1"/><line x1="1256.5" y1="151" x2="1256.5" y2="934" stroke="#d9eded" stroke-width="1" stroke-dasharray="1,1"/><line x1="1266.5" y1="151" x2="1266.5" y2="934" stroke="#d9eded" stroke-width="1" stroke-dasharray="1,1"/><line x1="1275.5" y1="151" x2="1275.5" y2="934" stroke="#c3e2e2" stroke-width="1" stroke-dasharray="1,1"/><line x1="1284.5" y1="151" x2="1284.5" y2="934" stroke="#d9eded" stroke-width="1" stroke-dasharray="1,1"/><line x1="1294.5" y1="151" x2="1294.5" y2="934" stroke="#d9eded" stroke-width="1" stroke-dasharray="1,1"/><line x1="1303.5" y1="151" x2="1303.5" y2="934" stroke="#c3e2e2" stroke-width="1" stroke-dasharray="1,1"/><line x1="1312.5" y1="151" x2="1312.5" y2="934" stroke="#d9eded" stroke-width="1" stroke-dasharray="1,1"/><line x1="1322.5" y1="151" x2="1322.5" y2="934" stroke="#d9eded" stroke-width="1" stroke-dasharray="1,1"/><line x1="1331.5" y1="151" x2="1331.5" y2="934" stroke="#c3e2e2" stroke-width="1" stroke-dasharray="1,1"/><line x1="1340.5" y1="151" x2="1340.5" y2="934" stroke="#d9eded" stroke-width="1" stroke-dasharray="1,1"/><line x1="1350.5" y1="151" x2="1350.5" y2="934" stroke="#d9eded" stroke-width="1" stroke-dasharray="1,1"/><line x1="1359.5" y1="151" x2="1359.5" y2="934" stroke="#c3e2e2" stroke-width="1" stroke-dasharray="1,1"/><line x1="1368.5" y1="151" x2="1368.5" y2="934" stroke="#d9eded" stroke-width="1" stroke-dasharray="1,1"/><line x1="1378.5" y1="151" x2="1378.5" y2="934" stroke="#d9eded" stroke-width="1" stroke-dasharray="1,1"/><line x1="1387.5" y1="151" x2="1387.5" y2="934" stroke="#c3e2e2" stroke-width="1" stroke-dasharray="1,1"/><line x1="1396.5" y1="151" x2="1396.5" y2="934" stroke="#d9eded" stroke-width="1" stroke-dasharray="1,1"/><line x1="1405.5" y1="151" x2="1405.5" y2="934" stroke="#d9eded" stroke-width="1" stroke-dasharray="1,1"/><line x1="1415.5" y1="151" x2="1415.5" y2="934" stroke="#c3e2e2" stroke-width="1" stroke-dasharray="1,1"/><line x1="1424.5" y1="151" x2="1424.5" y2="934" stroke="#d9eded" stroke-width="1" stroke-dasharray="1,1"/><line x1="1433.5" y1="151" x2="1433.5" y2="934" stroke="#d9eded" stroke-width="1" stroke-dasharray="1,1"/><line x1="1443.5" y1="151" x2="1443.5" y2="934" stroke="#c3e2e2" stroke-width="1" stroke-dasharray="1,1"/><line x1="1452.5" y1="151" x2="1452.5" y2="934" stroke="#d9eded" stroke-width="1" stroke-dasharray="1,1"/><line x1="1461.5" y1="151" x2="1461.5" y2="934" stroke="#d9eded" stroke-width="1" stroke-dasharray="1,1"/><line x1="1471.5" y1="151" x2="1471.5" y2="934" stroke="#c3e2e2" stroke-width="1" stroke-dasharray="1,1"/><line x1="1480.5" y1="151" x2="1480.5" y2="934" stroke="#d9eded" stroke-width="1" stroke-dasharray="1,1"/><line x1="1489.5" y1="151" x2="1489.5" y2="934" stroke="#d9eded" stroke-width="1" stroke-dasharray="1,1"/><line x1="1499.5" y1="151" x2="1499.5" y2="934" stroke="#c3e2e2" stroke-width="1" stroke-dasharray="1,1"/><line x1="1508.5" y1="151" x2="1508.5" y2="934" stroke="#d9eded" stroke-width="1" stroke-dasharray="1,1"/><line x1="1517.5" y1="151" x2="1517.5" y2="934" stroke="#d9eded" stroke-width="1" stroke-dasharray="1,1"/><line x1="1527.5" y1="151" x2="1527.5" y2="934" stroke="#c3e2e2" stroke-width="1" stroke-dasharray="1,1"/><line x1="1536.5" y1="151" x2="1536.5" y2="934" stroke="#d9eded" stroke-width="1" stroke-dasharray="1,1"/><line x1="1545.5" y1="151" x2="1545.5" y2="934" stroke="#d9eded" stroke-width="1" stroke-dasharray="1,1"/><line x1="1555.5" y1="151" x2="1555.5" y2="934" stroke="#c3e2e2" stroke-width="1" stroke-dasharray="1,1"/><line x1="1564.5" y1="151" x2="1564.5" y2="934" stroke="#d9eded" stroke-width="1" stroke-dasharray="1,1"/><line x1="1573.5" y1="151" x2="1573.5" y2="934" stroke="#d9eded" stroke-width="1" stroke-dasharray="1,1"/><line x1="1583.5" y1="151" x2="1583.5" y2="934" stroke="#c3e2e2" stroke-width="1" stroke-dasharray="1,1"/><line x1="1592.5" y1="151" x2="1592.5" y2="934" stroke="#d9eded" stroke-width="1" stroke-dasharray="1,1"/><line x1="1601.5" y1="151" x2="1601.5" y2="934" stroke="#d9eded" stroke-width="1" stroke-dasharray="1,1"/><line x1="1611.5" y1="151" x2="1611.5" y2="934" stroke="#c3e2e2" stroke-width="1" stroke-dasharray="1,1"/><line x1="1620.5" y1="151" x2="1620.5" y2="934" stroke="#d9eded" stroke-width="1" stroke-dasharray="1,1"/><line x1="1629.5" y1="151" x2="1629.5" y2="934" stroke="#d9eded" stroke-width="1" stroke-dasharray="1,1"/><line x1="1639.5" y1="151" x2="1639.5" y2="934" stroke="#c3e2e2" stroke-width="1" stroke-dasharray="1,1"/><line x1="1648.5" y1="151" x2="1648.5" y2="934" stroke="#d9eded" stroke-width="1" stroke-dasharray="1,1"/><line x1="1657.5" y1="151" x2="1657.5" y2="934" stroke="#d9eded" stroke-width="1" stroke-dasharray="1,1"/><line x1="1667.5" y1="151" x2="1667.5" y2="934" stroke="#c3e2e2" stroke-width="1" stroke-dasharray="1,1"/><line x1="1676.5" y1="151" x2="1676.5" y2="934" stroke="#d9eded" stroke-width="1" stroke-dasharray="1,1"/><line x1="1685.5" y1="151" x2="1685.5" y2="934" stroke="#d9eded" stroke-width="1" stroke-dasharray="1,1"/><line x1="1695.5" y1="151" x2="1695.5" y2="934" stroke="#c3e2e2" stroke-width="1" stroke-dasharray="1,1"/><line x1="1704.5" y1="151" x2="1704.5" y2="934" stroke="#d9eded" stroke-width="1" stroke-dasharray="1,1"/><line x1="1713.5" y1="151" x2="1713.5" y2="934" stroke="#d9eded" stroke-width="1" stroke-dasharray="1,1"/><line x1="1723.5" y1="151" x2="1723.5" y2="934" stroke="#c3e2e2" stroke-width="1" stroke-dasharray="1,1"/><line x1="1732.5" y1="151" x2="1732.5" y2="934" stroke="#d9eded" stroke-width="1" stroke-dasharray="1,1"/><line x1="1741.5" y1="151" x2="1741.5" y2="934" stroke="#d9eded" stroke-width="1" stroke-dasharray="1,1"/><line x1="1751.5" y1="151" x2="1751.5" y2="934" stroke="#c3e2e2" stroke-width="1" stroke-dasharray="1,1"/><line x1="1760.5" y1="151" x2="1760.5" y2="934" stroke="#d9eded" stroke-width="1" stroke-dasharray="1,1"/><line x1="1769.5" y1="151" x2="1769.5" y2="934" stroke="#d9eded" stroke-width="1" stroke-dasharray="1,1"/><line x1="1779.5" y1="151" x2="1779.5" y2="934" stroke="#c3e2e2" stroke-width="1" stroke-dasharray="1,1"/><line x1="1788.5" y1="151" x2="1788.5" y2="934" stroke="#d9eded" stroke-width="1" stroke-dasharray="1,1"/><line x1="1797.5" y1="151" x2="1797.5" y2="934" stroke="#d9eded" stroke-width="1" stroke-dasharray="1,1"/><line x1="1807.5" y1="151" x2="1807.5" y2="934" stroke="#c3e2e2" stroke-width="1" stroke-dasharray="1,1"/><line x1="707" y1="159.5" x2="1816" y2="159.5" stroke="#c3e2e2" stroke-width="1" stroke-dasharray="1,1"/><line x1="707" y1="168.5" x2="1816" y2="168.5" stroke="#d9eded" stroke-width="1" stroke-dasharray="1,1"/><line x1="707" y1="177.5" x2="1816" y2="177.5" stroke="#d9eded" stroke-width="1" stroke-dasharray="1,1"/><line x1="707" y1="187.5" x2="1816" y2="187.5" stroke="#c3e2e2" stroke-width="1" stroke-dasharray="1,1"/><line x1="707" y1="196.5" x2="1816" y2="196.5" stroke="#d9eded" stroke-width="1" stroke-dasharray="1,1"/><line x1="707" y1="205.5" x2="1816" y2="205.5" stroke="#d9eded" stroke-width="1" stroke-dasharray="1,1"/><line x1="707" y1="215.5" x2="1816" y2="215.5" stroke="#c3e2e2" stroke-width="1" stroke-dasharray="1,1"/><line x1="707" y1="224.5" x2="1816" y2="224.5" stroke="#d9eded" stroke-width="1" stroke-dasharray="1,1"/><line x1="707" y1="233.5" x2="1816" y2="233.5" stroke="#d9eded" stroke-width="1" stroke-dasharray="1,1"/><line x1="707" y1="243.5" x2="1816" y2="243.5" stroke="#c3e2e2" stroke-width="1" stroke-dasharray="1,1"/><line x1="707" y1="252.5" x2="1816" y2="252.5" stroke="#d9eded" stroke-width="1" stroke-dasharray="1,1"/><line x1="707" y1="261.5" x2="1816" y2="261.5" stroke="#d9eded" stroke-width="1" stroke-dasharray="1,1"/><line x1="707" y1="271.5" x2="1816" y2="271.5" stroke="#c3e2e2" stroke-width="1" stroke-dasharray="1,1"/><line x1="707" y1="280.5" x2="1816" y2="280.5" stroke="#d9eded" stroke-width="1" stroke-dasharray="1,1"/><line x1="707" y1="289.5" x2="1816" y2="289.5" stroke="#d9eded" stroke-width="1" stroke-dasharray="1,1"/><line x1="707" y1="299.5" x2="1816" y2="299.5" stroke="#c3e2e2" stroke-width="1" stroke-dasharray="1,1"/><line x1="707" y1="308.5" x2="1816" y2="308.5" stroke="#d9eded" stroke-width="1" stroke-dasharray="1,1"/><line x1="707" y1="317.5" x2="1816" y2="317.5" stroke="#d9eded" stroke-width="1" stroke-dasharray="1,1"/><line x1="707" y1="327.5" x2="1816" y2="327.5" stroke="#c3e2e2" stroke-width="1" stroke-dasharray="1,1"/><line x1="707" y1="336.5" x2="1816" y2="336.5" stroke="#d9eded" stroke-width="1" stroke-dasharray="1,1"/><line x1="707" y1="345.5" x2="1816" y2="345.5" stroke="#d9eded" stroke-width="1" stroke-dasharray="1,1"/><line x1="707" y1="355.5" x2="1816" y2="355.5" stroke="#c3e2e2" stroke-width="1" stroke-dasharray="1,1"/><line x1="707" y1="364.5" x2="1816" y2="364.5" stroke="#d9eded" stroke-width="1" stroke-dasharray="1,1"/><line x1="707" y1="373.5" x2="1816" y2="373.5" stroke="#d9eded" stroke-width="1" stroke-dasharray="1,1"/><line x1="707" y1="383.5" x2="1816" y2="383.5" stroke="#c3e2e2" stroke-width="1" stroke-dasharray="1,1"/><line x1="707" y1="392.5" x2="1816" y2="392.5" stroke="#d9eded" stroke-width="1" stroke-dasharray="1,1"/><line x1="707" y1="401.5" x2="1816" y2="401.5" stroke="#d9eded" stroke-width="1" stroke-dasharray="1,1"/><line x1="707" y1="411.5" x2="1816" y2="411.5" stroke="#c3e2e2" stroke-width="1" stroke-dasharray="1,1"/><line x1="707" y1="420.5" x2="1816" y2="420.5" stroke="#d9eded" stroke-width="1" stroke-dasharray="1,1"/><line x1="707" y1="429.5" x2="1816" y2="429.5" stroke="#d9eded" stroke-width="1" stroke-dasharray="1,1"/><line x1="707" y1="439.5" x2="1816" y2="439.5" stroke="#c3e2e2" stroke-width="1" stroke-dasharray="1,1"/><line x1="707" y1="448.5" x2="1816" y2="448.5" stroke="#d9eded" stroke-width="1" stroke-dasharray="1,1"/><line x1="707" y1="457.5" x2="1816" y2="457.5" stroke="#d9eded" stroke-width="1" stroke-dasharray="1,1"/><line x1="707" y1="467.5" x2="1816" y2="467.5" stroke="#c3e2e2" stroke-width="1" stroke-dasharray="1,1"/><line x1="707" y1="476.5" x2="1816" y2="476.5" stroke="#d9eded" stroke-width="1" stroke-dasharray="1,1"/><line x1="707" y1="485.5" x2="1816" y2="485.5" stroke="#d9eded" stroke-width="1" stroke-dasharray="1,1"/><line x1="707" y1="495.5" x2="1816" y2="495.5" stroke="#c3e2e2" stroke-width="1" stroke-dasharray="1,1"/><line x1="707" y1="504.5" x2="1816" y2="504.5" stroke="#d9eded" stroke-width="1" stroke-dasharray="1,1"/><line x1="707" y1="513.5" x2="1816" y2="513.5" stroke="#d9eded" stroke-width="1" stroke-dasharray="1,1"/><line x1="707" y1="523.5" x2="1816" y2="523.5" stroke="#c3e2e2" stroke-width="1" stroke-dasharray="1,1"/><line x1="707" y1="532.5" x2="1816" y2="532.5" stroke="#d9eded" stroke-width="1" stroke-dasharray="1,1"/><line x1="707" y1="541.5" x2="1816" y2="541.5" stroke="#d9eded" stroke-width="1" stroke-dasharray="1,1"/><line x1="707" y1="551.5" x2="1816" y2="551.5" stroke="#c3e2e2" stroke-width="1" stroke-dasharray="1,1"/><line x1="707" y1="560.5" x2="1816" y2="560.5" stroke="#d9eded" stroke-width="1" stroke-dasharray="1,1"/><line x1="707" y1="569.5" x2="1816" y2="569.5" stroke="#d9eded" stroke-width="1" stroke-dasharray="1,1"/><line x1="707" y1="579.5" x2="1816" y2="579.5" stroke="#c3e2e2" stroke-width="1" stroke-dasharray="1,1"/><line x1="707" y1="588.5" x2="1816" y2="588.5" stroke="#d9eded" stroke-width="1" stroke-dasharray="1,1"/><line x1="707" y1="597.5" x2="1816" y2="597.5" stroke="#d9eded" stroke-width="1" stroke-dasharray="1,1"/><line x1="707" y1="607.5" x2="1816" y2="607.5" stroke="#c3e2e2" stroke-width="1" stroke-dasharray="1,1"/><line x1="707" y1="616.5" x2="1816" y2="616.5" stroke="#d9eded" stroke-width="1" stroke-dasharray="1,1"/><line x1="707" y1="625.5" x2="1816" y2="625.5" stroke="#d9eded" stroke-width="1" stroke-dasharray="1,1"/><line x1="707" y1="635.5" x2="1816" y2="635.5" stroke="#c3e2e2" stroke-width="1" stroke-dasharray="1,1"/><line x1="707" y1="644.5" x2="1816" y2="644.5" stroke="#d9eded" stroke-width="1" stroke-dasharray="1,1"/><line x1="707" y1="653.5" x2="1816" y2="653.5" stroke="#d9eded" stroke-width="1" stroke-dasharray="1,1"/><line x1="707" y1="663.5" x2="1816" y2="663.5" stroke="#c3e2e2" stroke-width="1" stroke-dasharray="1,1"/><line x1="707" y1="672.5" x2="1816" y2="672.5" stroke="#d9eded" stroke-width="1" stroke-dasharray="1,1"/><line x1="707" y1="681.5" x2="1816" y2="681.5" stroke="#d9eded" stroke-width="1" stroke-dasharray="1,1"/><line x1="707" y1="691.5" x2="1816" y2="691.5" stroke="#c3e2e2" stroke-width="1" stroke-dasharray="1,1"/><line x1="707" y1="700.5" x2="1816" y2="700.5" stroke="#d9eded" stroke-width="1" stroke-dasharray="1,1"/><line x1="707" y1="709.5" x2="1816" y2="709.5" stroke="#d9eded" stroke-width="1" stroke-dasharray="1,1"/><line x1="707" y1="719.5" x2="1816" y2="719.5" stroke="#c3e2e2" stroke-width="1" stroke-dasharray="1,1"/><line x1="707" y1="728.5" x2="1816" y2="728.5" stroke="#d9eded" stroke-width="1" stroke-dasharray="1,1"/><line x1="707" y1="737.5" x2="1816" y2="737.5" stroke="#d9eded" stroke-width="1" stroke-dasharray="1,1"/><line x1="707" y1="747.5" x2="1816" y2="747.5" stroke="#c3e2e2" stroke-width="1" stroke-dasharray="1,1"/><line x1="707" y1="756.5" x2="1816" y2="756.5" stroke="#d9eded" stroke-width="1" stroke-dasharray="1,1"/><line x1="707" y1="765.5" x2="1816" y2="765.5" stroke="#d9eded" stroke-width="1" stroke-dasharray="1,1"/><line x1="707" y1="775.5" x2="1816" y2="775.5" stroke="#c3e2e2" stroke-width="1" stroke-dasharray="1,1"/><line x1="707" y1="784.5" x2="1816" y2="784.5" stroke="#d9eded" stroke-width="1" stroke-dasharray="1,1"/><line x1="707" y1="793.5" x2="1816" y2="793.5" stroke="#d9eded" stroke-width="1" stroke-dasharray="1,1"/><line x1="707" y1="803.5" x2="1816" y2="803.5" stroke="#c3e2e2" stroke-width="1" stroke-dasharray="1,1"/><line x1="707" y1="812.5" x2="1816" y2="812.5" stroke="#d9eded" stroke-width="1" stroke-dasharray="1,1"/><line x1="707" y1="821.5" x2="1816" y2="821.5" stroke="#d9eded" stroke-width="1" stroke-dasharray="1,1"/><line x1="707" y1="831.5" x2="1816" y2="831.5" stroke="#c3e2e2" stroke-width="1" stroke-dasharray="1,1"/><line x1="707" y1="840.5" x2="1816" y2="840.5" stroke="#d9eded" stroke-width="1" stroke-dasharray="1,1"/><line x1="707" y1="849.5" x2="1816" y2="849.5" stroke="#d9eded" stroke-width="1" stroke-dasharray="1,1"/><line x1="707" y1="859.5" x2="1816" y2="859.5" stroke="#c3e2e2" stroke-width="1" stroke-dasharray="1,1"/><line x1="707" y1="868.5" x2="1816" y2="868.5" stroke="#d9eded" stroke-width="1" stroke-dasharray="1,1"/><line x1="707" y1="877.5" x2="1816" y2="877.5" stroke="#d9eded" stroke-width="1" stroke-dasharray="1,1"/><line x1="707" y1="887.5" x2="1816" y2="887.5" stroke="#c3e2e2" stroke-width="1" stroke-dasharray="1,1"/><line x1="707" y1="896.5" x2="1816" y2="896.5" stroke="#d9eded" stroke-width="1" stroke-dasharray="1,1"/><line x1="707" y1="905.5" x2="1816" y2="905.5" stroke="#d9eded" stroke-width="1" stroke-dasharray="1,1"/><line x1="707" y1="915.5" x2="1816" y2="915.5" stroke="#c3e2e2" stroke-width="1" stroke-dasharray="1,1"/><line x1="707" y1="924.5" x2="1816" y2="924.5" stroke="#d9eded" stroke-width="1" stroke-dasharray="1,1"/><line x1="707" y1="933.5" x2="1816" y2="933.5" stroke="#d9eded" stroke-width="1" stroke-dasharray="1,1"/></g><line x1="724.7" y1="154.5" x2="1811.5" y2="154.5" stroke="#777" stroke-width="1"/><line x1="724.5" y1="154.8" x2="724.5" y2="929.3" stroke="#555" stroke-width="1" stroke-dasharray="1,1"/><line x1="1811.5" y1="154.8" x2="1811.5" y2="929.3" stroke="#333" stroke-width="1"/><line x1="724.7" y1="929.0" x2="1812.0" y2="929.0" stroke="#000" stroke-width="2"/><line x1="729.4" y1="160.0" x2="1806.5" y2="160.0" stroke="#000" stroke-width="2"/><line x1="729.5" y1="159.5" x2="729.5" y2="924.8" stroke="#111" stroke-width="1"/><line x1="1806.0" y1="159.5" x2="1806.0" y2="924.8" stroke="#000" stroke-width="2"/><line x1="729.4" y1="924.5" x2="1806.5" y2="924.5" stroke="#222" stroke-width="1"/><text x="721" y="925" font-size="3.6" fill="#999" transform="rotate(-90 721 925)">kMAST 2025080601</text><rect x="753.5" y="197.5" width="304.0" height="568.0" fill="none" stroke="#8a8a8a" stroke-width="1" stroke-dasharray="1,1"/><rect x="753.5" y="774.5" width="105.0" height="50.0" fill="none" stroke="#8a8a8a" stroke-width="1" stroke-dasharray="1,1"/><rect x="858.5" y="774.5" width="122.0" height="66.0" fill="none" stroke="#8a8a8a" stroke-width="1" stroke-dasharray="1,1"/><rect x="980.5" y="774.5" width="128.0" height="72.0" fill="none" stroke="#8a8a8a" stroke-width="1" stroke-dasharray="1,1"/><rect x="1108.5" y="774.5" width="174.0" height="118.0" fill="none" stroke="#8a8a8a" stroke-width="1" stroke-dasharray="1,1"/><rect x="1057.5" y="213.5" width="183.0" height="549.0" fill="none" stroke="#8a8a8a" stroke-width="1" stroke-dasharray="1,1"/><rect x="1240.5" y="197.5" width="98.0" height="87.0" fill="none" stroke="#8a8a8a" stroke-width="1" stroke-dasharray="1,1"/><rect x="1240.5" y="284.5" width="107.0" height="82.0" fill="none" stroke="#8a8a8a" stroke-width="1" stroke-dasharray="1,1"/><rect x="1240.5" y="366.5" width="124.0" height="82.0" fill="none" stroke="#8a8a8a" stroke-width="1" stroke-dasharray="1,1"/><rect x="1373.5" y="366.5" width="35.0" height="71.0" fill="none" stroke="#8a8a8a" stroke-width="1" stroke-dasharray="1,1"/><rect x="1408.5" y="366.5" width="29.0" height="63.0" fill="none" stroke="#8a8a8a" stroke-width="1" stroke-dasharray="1,1"/><rect x="1437.5" y="366.5" width="29.0" height="61.0" fill="none" stroke="#8a8a8a" stroke-width="1" stroke-dasharray="1,1"/><rect x="1240.5" y="448.5" width="124.0" height="84.0" fill="none" stroke="#8a8a8a" stroke-width="1" stroke-dasharray="1,1"/><rect x="1240.5" y="532.5" width="150.0" height="84.0" fill="none" stroke="#8a8a8a" stroke-width="1" stroke-dasharray="1,1"/><rect x="1399.5" y="532.5" width="45.0" height="76.0" fill="none" stroke="#8a8a8a" stroke-width="1" stroke-dasharray="1,1"/><rect x="1444.5" y="532.5" width="41.0" height="71.0" fill="none" stroke="#8a8a8a" stroke-width="1" stroke-dasharray="1,1"/><rect x="1485.5" y="532.5" width="35.0" height="68.0" fill="none" stroke="#8a8a8a" stroke-width="1" stroke-dasharray="1,1"/><rect x="1520.5" y="532.5" width="28.0" height="60.0" fill="none" stroke="#8a8a8a" stroke-width="1" stroke-dasharray="1,1"/><rect x="1240.5" y="616.5" width="150.0" height="91.0" fill="none" stroke="#8a8a8a" stroke-width="1" stroke-dasharray="1,1"/><text x="905.0" y="195.0" font-size="5.2" fill="#333" text-anchor="middle" font-family="Liberation Serif, serif" font-style="italic">Vorne</text><line x1="898.0" y1="196.5" x2="912.0" y2="196.5" stroke="#111" stroke-width="1"/><text x="871.0" y="229.0" font-size="3.6" fill="#999" text-anchor="middle" >Traverse 1</text><text x="937.0" y="229.0" font-size="3.6" fill="#999" text-anchor="middle" >Traverse 2</text><text x="855.0" y="261.0" font-size="3.6" fill="#999" text-anchor="middle" >Traverse 3</text><text x="954.0" y="261.0" font-size="3.6" fill="#999" text-anchor="middle" >Traverse 4</text><text x="842.0" y="323.0" font-size="3.6" fill="#999" text-anchor="middle" >Traverse 5</text><text x="968.0" y="323.0" font-size="3.6" fill="#999" text-anchor="middle" >Traverse 6</text><text x="866.0" y="289.5" font-size="3.6" fill="#999" text-anchor="middle" >4000</text><text x="944.0" y="289.5" font-size="3.6" fill="#999" text-anchor="middle" >4000</text><text x="822.0" y="352.0" font-size="3.6" fill="#999" text-anchor="middle" >4550</text><text x="874.0" y="352.0" font-size="3.6" fill="#999" text-anchor="middle" >4100</text><text x="936.0" y="352.0" font-size="3.6" fill="#999" text-anchor="middle" >4100</text><text x="986.0" y="352.0" font-size="3.6" fill="#999" text-anchor="middle" >4550</text><text x="905.0" y="738.0" font-size="3.6" fill="#999" text-anchor="middle" >9500</text><text x="1148.0" y="737.0" font-size="3.6" fill="#999" text-anchor="middle" >9500</text><text x="1290.0" y="215.0" font-size="3.6" fill="#999" text-anchor="middle" >11800</text><text x="1300.0" y="293.0" font-size="3.6" fill="#999" text-anchor="middle" >10800</text><text x="1314.0" y="384.0" font-size="3.6" fill="#999" text-anchor="middle" >13800</text><text x="1315.0" y="457.0" font-size="3.6" fill="#999" text-anchor="middle" >13800</text><text x="1330.0" y="550.0" font-size="3.6" fill="#999" text-anchor="middle" >16800</text><text x="1330.0" y="625.0" font-size="3.6" fill="#999" text-anchor="middle" >16800</text><text x="783" y="275" font-size="3.6" fill="#aaa" text-anchor="middle" transform="rotate(-90 783 275)">12000</text><text x="783" y="330" font-size="3.6" fill="#aaa" text-anchor="middle" transform="rotate(-90 783 330)">12000</text><text x="783" y="370" font-size="3.6" fill="#aaa" text-anchor="middle" transform="rotate(-90 783 370)">12000</text><text x="783" y="430" font-size="3.6" fill="#aaa" text-anchor="middle" transform="rotate(-90 783 430)">12000</text><text x="783" y="490" font-size="3.6" fill="#aaa" text-anchor="middle" transform="rotate(-90 783 490)">12000</text><text x="783" y="548" font-size="3.6" fill="#aaa" text-anchor="middle" transform="rotate(-90 783 548)">12000</text><text x="783" y="605" font-size="3.6" fill="#aaa" text-anchor="middle" transform="rotate(-90 783 605)">12000</text><text x="783" y="660" font-size="3.6" fill="#aaa" text-anchor="middle" transform="rotate(-90 783 660)">12000</text><text x="783" y="712" font-size="3.6" fill="#aaa" text-anchor="middle" transform="rotate(-90 783 712)">12000</text><text x="768" y="360" font-size="3.6" fill="#aaa" text-anchor="middle" transform="rotate(-90 768 360)">12000</text><text x="768" y="600" font-size="3.6" fill="#aaa" text-anchor="middle" transform="rotate(-90 768 600)">12000</text><text x="775" y="250" font-size="3.6" fill="#aaa" text-anchor="middle" transform="rotate(-90 775 250)">12000</text><text x="1035" y="300" font-size="3.6" fill="#aaa" text-anchor="middle" transform="rotate(-90 1035 300)">12000</text><text x="1035" y="380" font-size="3.6" fill="#aaa" text-anchor="middle" transform="rotate(-90 1035 380)">12000</text><text x="1035" y="460" font-size="3.6" fill="#aaa" text-anchor="middle" transform="rotate(-90 1035 460)">12000</text><text x="1035" y="560" font-size="3.6" fill="#aaa" text-anchor="middle" transform="rotate(-90 1035 560)">12000</text><text x="1035" y="620" font-size="3.6" fill="#aaa" text-anchor="middle" transform="rotate(-90 1035 620)">12000</text><text x="1035" y="700" font-size="3.6" fill="#aaa" text-anchor="middle" transform="rotate(-90 1035 700)">12000</text><text x="1066" y="510" font-size="3.6" fill="#aaa" text-anchor="middle" transform="rotate(-90 1066 510)">12000</text><text x="1224" y="270" font-size="3.6" fill="#aaa" text-anchor="middle" transform="rotate(-90 1224 270)">12000</text><text x="1224" y="420" font-size="3.6" fill="#aaa" text-anchor="middle" transform="rotate(-90 1224 420)">12000</text><text x="1224" y="560" font-size="3.6" fill="#aaa" text-anchor="middle" transform="rotate(-90 1224 560)">12000</text><text x="1224" y="660" font-size="3.6" fill="#aaa" text-anchor="middle" transform="rotate(-90 1224 660)">12000</text><text x="796.0" y="258.0" font-size="3.2" fill="#888" text-anchor="start" >+25.00</text><text x="796.0" y="310.0" font-size="3.2" fill="#888" text-anchor="start" >+25.00</text><text x="796.0" y="403.0" font-size="3.2" fill="#888" text-anchor="start" >+25.00</text><text x="796.0" y="458.0" font-size="3.2" fill="#888" text-anchor="start" >+25.00</text><text x="796.0" y="521.0" font-size="3.2" fill="#888" text-anchor="start" >+25.00</text><text x="796.0" y="576.0" font-size="3.2" fill="#888" text-anchor="start" >+25.00</text><text x="796.0" y="631.0" font-size="3.2" fill="#888" text-anchor="start" >+25.00</text><text x="796.0" y="693.0" font-size="3.2" fill="#888" text-anchor="start" >+25.00</text><text x="1148.0" y="211.0" font-size="5.2" fill="#333" text-anchor="middle" font-family="Liberation Serif, serif" font-style="italic">Rechts</text><line x1="1140.0" y1="212.5" x2="1156.0" y2="212.5" stroke="#111" stroke-width="1"/><polyline points="893.0,254.5 880.6,521.9 856.0,728.3" fill="none" stroke="#000" stroke-width="1.15"/><polyline points="917.0,254.5 929.4,521.9 954.0,728.3" fill="none" stroke="#000" stroke-width="1.15"/><circle cx="893.0" cy="254.5" r="0.85" fill="#000"/><circle cx="917.0" cy="254.5" r="0.85" fill="#000"/><circle cx="892.7" cy="260.6" r="0.85" fill="#000"/><circle cx="917.3" cy="260.6" r="0.85" fill="#000"/><circle cx="892.4" cy="266.7" r="0.85" fill="#000"/><circle cx="917.6" cy="266.7" r="0.85" fill="#000"/><circle cx="892.2" cy="272.7" r="0.85" fill="#000"/><circle cx="917.8" cy="272.7" r="0.85" fill="#000"/><circle cx="891.9" cy="278.8" r="0.85" fill="#000"/><circle cx="918.1" cy="278.8" r="0.85" fill="#000"/><circle cx="891.6" cy="284.9" r="0.85" fill="#000"/><circle cx="918.4" cy="284.9" r="0.85" fill="#000"/><circle cx="891.3" cy="291.0" r="0.85" fill="#000"/><circle cx="918.7" cy="291.0" r="0.85" fill="#000"/><circle cx="891.0" cy="297.0" r="0.85" fill="#000"/><circle cx="919.0" cy="297.0" r="0.85" fill="#000"/><circle cx="890.7" cy="303.1" r="0.85" fill="#000"/><circle cx="919.3" cy="303.1" r="0.85" fill="#000"/><circle cx="890.5" cy="309.2" r="0.85" fill="#000"/><circle cx="919.5" cy="309.2" r="0.85" fill="#000"/><circle cx="890.2" cy="315.3" r="0.85" fill="#000"/><circle cx="919.8" cy="315.3" r="0.85" fill="#000"/><circle cx="889.9" cy="321.4" r="0.85" fill="#000"/><circle cx="920.1" cy="321.4" r="0.85" fill="#000"/><circle cx="889.6" cy="327.4" r="0.85" fill="#000"/><circle cx="920.4" cy="327.4" r="0.85" fill="#000"/><circle cx="889.3" cy="333.5" r="0.85" fill="#000"/><circle cx="920.7" cy="333.5" r="0.85" fill="#000"/><circle cx="889.1" cy="339.6" r="0.85" fill="#000"/><circle cx="920.9" cy="339.6" r="0.85" fill="#000"/><circle cx="888.8" cy="345.7" r="0.85" fill="#000"/><circle cx="921.2" cy="345.7" r="0.85" fill="#000"/><circle cx="888.5" cy="351.7" r="0.85" fill="#000"/><circle cx="921.5" cy="351.7" r="0.85" fill="#000"/><circle cx="888.2" cy="357.8" r="0.85" fill="#000"/><circle cx="921.8" cy="357.8" r="0.85" fill="#000"/><circle cx="887.9" cy="363.9" r="0.85" fill="#000"/><circle cx="922.1" cy="363.9" r="0.85" fill="#000"/><circle cx="887.6" cy="370.0" r="0.85" fill="#000"/><circle cx="922.4" cy="370.0" r="0.85" fill="#000"/><circle cx="887.4" cy="376.0" r="0.85" fill="#000"/><circle cx="922.6" cy="376.0" r="0.85" fill="#000"/><circle cx="887.1" cy="382.1" r="0.85" fill="#000"/><circle cx="922.9" cy="382.1" r="0.85" fill="#000"/><circle cx="886.8" cy="388.2" r="0.85" fill="#000"/><circle cx="923.2" cy="388.2" r="0.85" fill="#000"/><circle cx="886.5" cy="394.3" r="0.85" fill="#000"/><circle cx="923.5" cy="394.3" r="0.85" fill="#000"/><circle cx="886.2" cy="400.4" r="0.85" fill="#000"/><circle cx="923.8" cy="400.4" r="0.85" fill="#000"/><circle cx="886.0" cy="406.4" r="0.85" fill="#000"/><circle cx="924.0" cy="406.4" r="0.85" fill="#000"/><circle cx="885.7" cy="412.5" r="0.85" fill="#000"/><circle cx="924.3" cy="412.5" r="0.85" fill="#000"/><circle cx="885.4" cy="418.6" r="0.85" fill="#000"/><circle cx="924.6" cy="418.6" r="0.85" fill="#000"/><circle cx="885.1" cy="424.7" r="0.85" fill="#000"/><circle cx="924.9" cy="424.7" r="0.85" fill="#000"/><circle cx="884.8" cy="430.7" r="0.85" fill="#000"/><circle cx="925.2" cy="430.7" r="0.85" fill="#000"/><circle cx="884.5" cy="436.8" r="0.85" fill="#000"/><circle cx="925.5" cy="436.8" r="0.85" fill="#000"/><circle cx="884.3" cy="442.9" r="0.85" fill="#000"/><circle cx="925.7" cy="442.9" r="0.85" fill="#000"/><circle cx="884.0" cy="449.0" r="0.85" fill="#000"/><circle cx="926.0" cy="449.0" r="0.85" fill="#000"/><circle cx="883.7" cy="455.0" r="0.85" fill="#000"/><circle cx="926.3" cy="455.0" r="0.85" fill="#000"/><circle cx="883.4" cy="461.1" r="0.85" fill="#000"/><circle cx="926.6" cy="461.1" r="0.85" fill="#000"/><circle cx="883.1" cy="467.2" r="0.85" fill="#000"/><circle cx="926.9" cy="467.2" r="0.85" fill="#000"/><circle cx="882.9" cy="473.3" r="0.85" fill="#000"/><circle cx="927.1" cy="473.3" r="0.85" fill="#000"/><circle cx="882.6" cy="479.4" r="0.85" fill="#000"/><circle cx="927.4" cy="479.4" r="0.85" fill="#000"/><circle cx="882.3" cy="485.4" r="0.85" fill="#000"/><circle cx="927.7" cy="485.4" r="0.85" fill="#000"/><circle cx="882.0" cy="491.5" r="0.85" fill="#000"/><circle cx="928.0" cy="491.5" r="0.85" fill="#000"/><circle cx="881.7" cy="497.6" r="0.85" fill="#000"/><circle cx="928.3" cy="497.6" r="0.85" fill="#000"/><circle cx="881.4" cy="503.7" r="0.85" fill="#000"/><circle cx="928.6" cy="503.7" r="0.85" fill="#000"/><circle cx="881.2" cy="509.7" r="0.85" fill="#000"/><circle cx="928.8" cy="509.7" r="0.85" fill="#000"/><circle cx="880.9" cy="515.8" r="0.85" fill="#000"/><circle cx="929.1" cy="515.8" r="0.85" fill="#000"/><circle cx="880.6" cy="521.9" r="0.85" fill="#000"/><circle cx="929.4" cy="521.9" r="0.85" fill="#000"/><circle cx="880.6" cy="521.9" r="0.85" fill="#000"/><circle cx="929.4" cy="521.9" r="0.85" fill="#000"/><circle cx="879.9" cy="528.0" r="0.85" fill="#000"/><circle cx="930.1" cy="528.0" r="0.85" fill="#000"/><circle cx="879.2" cy="534.0" r="0.85" fill="#000"/><circle cx="930.8" cy="534.0" r="0.85" fill="#000"/><circle cx="878.4" cy="540.1" r="0.85" fill="#000"/><circle cx="931.6" cy="540.1" r="0.85" fill="#000"/><circle cx="877.7" cy="546.2" r="0.85" fill="#000"/><circle cx="932.3" cy="546.2" r="0.85" fill="#000"/><circle cx="877.0" cy="552.3" r="0.85" fill="#000"/><circle cx="933.0" cy="552.3" r="0.85" fill="#000"/><circle cx="876.3" cy="558.3" r="0.85" fill="#000"/><circle cx="933.7" cy="558.3" r="0.85" fill="#000"/><circle cx="875.5" cy="564.4" r="0.85" fill="#000"/><circle cx="934.5" cy="564.4" r="0.85" fill="#000"/><circle cx="874.8" cy="570.5" r="0.85" fill="#000"/><circle cx="935.2" cy="570.5" r="0.85" fill="#000"/><circle cx="874.1" cy="576.5" r="0.85" fill="#000"/><circle cx="935.9" cy="576.5" r="0.85" fill="#000"/><circle cx="873.4" cy="582.6" r="0.85" fill="#000"/><circle cx="936.6" cy="582.6" r="0.85" fill="#000"/><circle cx="872.6" cy="588.7" r="0.85" fill="#000"/><circle cx="937.4" cy="588.7" r="0.85" fill="#000"/><circle cx="871.9" cy="594.7" r="0.85" fill="#000"/><circle cx="938.1" cy="594.7" r="0.85" fill="#000"/><circle cx="871.2" cy="600.8" r="0.85" fill="#000"/><circle cx="938.8" cy="600.8" r="0.85" fill="#000"/><circle cx="870.5" cy="606.9" r="0.85" fill="#000"/><circle cx="939.5" cy="606.9" r="0.85" fill="#000"/><circle cx="869.7" cy="613.0" r="0.85" fill="#000"/><circle cx="940.3" cy="613.0" r="0.85" fill="#000"/><circle cx="869.0" cy="619.0" r="0.85" fill="#000"/><circle cx="941.0" cy="619.0" r="0.85" fill="#000"/><circle cx="868.3" cy="625.1" r="0.85" fill="#000"/><circle cx="941.7" cy="625.1" r="0.85" fill="#000"/><circle cx="867.6" cy="631.2" r="0.85" fill="#000"/><circle cx="942.4" cy="631.2" r="0.85" fill="#000"/><circle cx="866.9" cy="637.2" r="0.85" fill="#000"/><circle cx="943.1" cy="637.2" r="0.85" fill="#000"/><circle cx="866.1" cy="643.3" r="0.85" fill="#000"/><circle cx="943.9" cy="643.3" r="0.85" fill="#000"/><circle cx="865.4" cy="649.4" r="0.85" fill="#000"/><circle cx="944.6" cy="649.4" r="0.85" fill="#000"/><circle cx="864.7" cy="655.5" r="0.85" fill="#000"/><circle cx="945.3" cy="655.5" r="0.85" fill="#000"/><circle cx="864.0" cy="661.5" r="0.85" fill="#000"/><circle cx="946.0" cy="661.5" r="0.85" fill="#000"/><circle cx="863.2" cy="667.6" r="0.85" fill="#000"/><circle cx="946.8" cy="667.6" r="0.85" fill="#000"/><circle cx="862.5" cy="673.7" r="0.85" fill="#000"/><circle cx="947.5" cy="673.7" r="0.85" fill="#000"/><circle cx="861.8" cy="679.7" r="0.85" fill="#000"/><circle cx="948.2" cy="679.7" r="0.85" fill="#000"/><circle cx="861.1" cy="685.8" r="0.85" fill="#000"/><circle cx="948.9" cy="685.8" r="0.85" fill="#000"/><circle cx="860.3" cy="691.9" r="0.85" fill="#000"/><circle cx="949.7" cy="691.9" r="0.85" fill="#000"/><circle cx="859.6" cy="697.9" r="0.85" fill="#000"/><circle cx="950.4" cy="697.9" r="0.85" fill="#000"/><circle cx="858.9" cy="704.0" r="0.85" fill="#000"/><circle cx="951.1" cy="704.0" r="0.85" fill="#000"/><circle cx="858.2" cy="710.1" r="0.85" fill="#000"/><circle cx="951.8" cy="710.1" r="0.85" fill="#000"/><circle cx="857.4" cy="716.2" r="0.85" fill="#000"/><circle cx="952.6" cy="716.2" r="0.85" fill="#000"/><circle cx="856.7" cy="722.2" r="0.85" fill="#000"/><circle cx="953.3" cy="722.2" r="0.85" fill="#000"/><circle cx="856.0" cy="728.3" r="0.85" fill="#000"/><circle cx="954.0" cy="728.3" r="0.85" fill="#000"/><line x1="892.8" y1="258.6" x2="905.0" y2="264.6" stroke="#000" stroke-width="0.9"/><line x1="917.2" y1="258.6" x2="905.0" y2="264.6" stroke="#000" stroke-width="0.9"/><line x1="905.0" y1="264.6" x2="892.3" y2="270.5" stroke="#000" stroke-width="0.9"/><line x1="905.0" y1="264.6" x2="917.7" y2="270.5" stroke="#000" stroke-width="0.9"/><circle cx="905.0" cy="264.6" r="1.2" fill="#000"/><circle cx="892.8" cy="258.6" r="1.3" fill="#000"/><circle cx="917.2" cy="258.6" r="1.3" fill="#000"/><line x1="892.3" y1="270.5" x2="905.0" y2="276.4" stroke="#000" stroke-width="0.9"/><line x1="917.7" y1="270.5" x2="905.0" y2="276.4" stroke="#000" stroke-width="0.9"/><line x1="905.0" y1="276.4" x2="891.7" y2="282.4" stroke="#000" stroke-width="0.9"/><line x1="905.0" y1="276.4" x2="918.3" y2="282.4" stroke="#000" stroke-width="0.9"/><circle cx="905.0" cy="276.4" r="1.2" fill="#000"/><circle cx="892.3" cy="270.5" r="1.3" fill="#000"/><circle cx="917.7" cy="270.5" r="1.3" fill="#000"/><line x1="891.7" y1="282.4" x2="905.0" y2="288.5" stroke="#000" stroke-width="0.9"/><line x1="918.3" y1="282.4" x2="905.0" y2="288.5" stroke="#000" stroke-width="0.9"/><line x1="905.0" y1="288.5" x2="891.1" y2="294.6" stroke="#000" stroke-width="0.9"/><line x1="905.0" y1="288.5" x2="918.9" y2="294.6" stroke="#000" stroke-width="0.9"/><circle cx="905.0" cy="288.5" r="1.2" fill="#000"/><circle cx="891.7" cy="282.4" r="1.3" fill="#000"/><circle cx="918.3" cy="282.4" r="1.3" fill="#000"/><line x1="891.1" y1="294.6" x2="905.0" y2="300.8" stroke="#000" stroke-width="0.9"/><line x1="918.9" y1="294.6" x2="905.0" y2="300.8" stroke="#000" stroke-width="0.9"/><line x1="905.0" y1="300.8" x2="890.6" y2="306.9" stroke="#000" stroke-width="0.9"/><line x1="905.0" y1="300.8" x2="919.4" y2="306.9" stroke="#000" stroke-width="0.9"/><circle cx="905.0" cy="300.8" r="1.2" fill="#000"/><circle cx="891.1" cy="294.6" r="1.3" fill="#000"/><circle cx="918.9" cy="294.6" r="1.3" fill="#000"/><line x1="890.6" y1="306.9" x2="905.0" y2="313.4" stroke="#000" stroke-width="0.9"/><line x1="919.4" y1="306.9" x2="905.0" y2="313.4" stroke="#000" stroke-width="0.9"/><line x1="905.0" y1="313.4" x2="890.0" y2="319.8" stroke="#000" stroke-width="0.9"/><line x1="905.0" y1="313.4" x2="920.0" y2="319.8" stroke="#000" stroke-width="0.9"/><circle cx="905.0" cy="313.4" r="1.2" fill="#000"/><circle cx="890.6" cy="306.9" r="1.3" fill="#000"/><circle cx="919.4" cy="306.9" r="1.3" fill="#000"/><line x1="890.0" y1="319.8" x2="905.0" y2="326.0" stroke="#000" stroke-width="0.9"/><line x1="920.0" y1="319.8" x2="905.0" y2="326.0" stroke="#000" stroke-width="0.9"/><line x1="905.0" y1="326.0" x2="889.4" y2="332.2" stroke="#000" stroke-width="0.9"/><line x1="905.0" y1="326.0" x2="920.6" y2="332.2" stroke="#000" stroke-width="0.9"/><circle cx="905.0" cy="326.0" r="1.2" fill="#000"/><circle cx="890.0" cy="319.8" r="1.3" fill="#000"/><circle cx="920.0" cy="319.8" r="1.3" fill="#000"/><line x1="889.4" y1="332.2" x2="905.0" y2="338.5" stroke="#000" stroke-width="0.9"/><line x1="920.6" y1="332.2" x2="905.0" y2="338.5" stroke="#000" stroke-width="0.9"/><line x1="905.0" y1="338.5" x2="888.8" y2="344.9" stroke="#000" stroke-width="0.9"/><line x1="905.0" y1="338.5" x2="921.2" y2="344.9" stroke="#000" stroke-width="0.9"/><circle cx="905.0" cy="338.5" r="1.2" fill="#000"/><circle cx="889.4" cy="332.2" r="1.3" fill="#000"/><circle cx="920.6" cy="332.2" r="1.3" fill="#000"/><line x1="888.8" y1="344.9" x2="905.0" y2="351.8" stroke="#000" stroke-width="0.9"/><line x1="921.2" y1="344.9" x2="905.0" y2="351.8" stroke="#000" stroke-width="0.9"/><line x1="905.0" y1="351.8" x2="888.2" y2="358.7" stroke="#000" stroke-width="0.9"/><line x1="905.0" y1="351.8" x2="921.8" y2="358.7" stroke="#000" stroke-width="0.9"/><circle cx="905.0" cy="351.8" r="1.2" fill="#000"/><circle cx="888.8" cy="344.9" r="1.3" fill="#000"/><circle cx="921.2" cy="344.9" r="1.3" fill="#000"/><line x1="888.2" y1="358.7" x2="905.0" y2="366.6" stroke="#000" stroke-width="0.9"/><line x1="921.8" y1="358.7" x2="905.0" y2="366.6" stroke="#000" stroke-width="0.9"/><line x1="905.0" y1="366.6" x2="887.4" y2="374.6" stroke="#000" stroke-width="0.9"/><line x1="905.0" y1="366.6" x2="922.6" y2="374.6" stroke="#000" stroke-width="0.9"/><circle cx="905.0" cy="366.6" r="1.2" fill="#000"/><circle cx="888.2" cy="358.7" r="1.3" fill="#000"/><circle cx="921.8" cy="358.7" r="1.3" fill="#000"/><line x1="887.4" y1="374.6" x2="905.0" y2="383.2" stroke="#000" stroke-width="0.9"/><line x1="922.6" y1="374.6" x2="905.0" y2="383.2" stroke="#000" stroke-width="0.9"/><line x1="905.0" y1="383.2" x2="886.6" y2="391.9" stroke="#000" stroke-width="0.9"/><line x1="905.0" y1="383.2" x2="923.4" y2="391.9" stroke="#000" stroke-width="0.9"/><circle cx="905.0" cy="383.2" r="1.2" fill="#000"/><circle cx="887.4" cy="374.6" r="1.3" fill="#000"/><circle cx="922.6" cy="374.6" r="1.3" fill="#000"/><line x1="886.6" y1="391.9" x2="905.0" y2="401.1" stroke="#000" stroke-width="0.9"/><line x1="923.4" y1="391.9" x2="905.0" y2="401.1" stroke="#000" stroke-width="0.9"/><line x1="905.0" y1="401.1" x2="885.8" y2="410.3" stroke="#000" stroke-width="0.9"/><line x1="905.0" y1="401.1" x2="924.2" y2="410.3" stroke="#000" stroke-width="0.9"/><circle cx="905.0" cy="401.1" r="1.2" fill="#000"/><circle cx="886.6" cy="391.9" r="1.3" fill="#000"/><circle cx="923.4" cy="391.9" r="1.3" fill="#000"/><line x1="885.8" y1="410.3" x2="905.0" y2="420.2" stroke="#000" stroke-width="0.9"/><line x1="924.2" y1="410.3" x2="905.0" y2="420.2" stroke="#000" stroke-width="0.9"/><line x1="905.0" y1="420.2" x2="884.9" y2="430.1" stroke="#000" stroke-width="0.9"/><line x1="905.0" y1="420.2" x2="925.1" y2="430.1" stroke="#000" stroke-width="0.9"/><circle cx="905.0" cy="420.2" r="1.2" fill="#000"/><circle cx="885.8" cy="410.3" r="1.3" fill="#000"/><circle cx="924.2" cy="410.3" r="1.3" fill="#000"/><line x1="884.9" y1="430.1" x2="905.0" y2="440.6" stroke="#000" stroke-width="0.9"/><line x1="925.1" y1="430.1" x2="905.0" y2="440.6" stroke="#000" stroke-width="0.9"/><line x1="905.0" y1="440.6" x2="883.9" y2="451.0" stroke="#000" stroke-width="0.9"/><line x1="905.0" y1="440.6" x2="926.1" y2="451.0" stroke="#000" stroke-width="0.9"/><circle cx="905.0" cy="440.6" r="1.2" fill="#000"/><circle cx="884.9" cy="430.1" r="1.3" fill="#000"/><circle cx="925.1" cy="430.1" r="1.3" fill="#000"/><line x1="883.9" y1="451.0" x2="905.0" y2="461.9" stroke="#000" stroke-width="0.9"/><line x1="926.1" y1="451.0" x2="905.0" y2="461.9" stroke="#000" stroke-width="0.9"/><line x1="905.0" y1="461.9" x2="882.9" y2="472.7" stroke="#000" stroke-width="0.9"/><line x1="905.0" y1="461.9" x2="927.1" y2="472.7" stroke="#000" stroke-width="0.9"/><circle cx="905.0" cy="461.9" r="1.2" fill="#000"/><circle cx="883.9" cy="451.0" r="1.3" fill="#000"/><circle cx="926.1" cy="451.0" r="1.3" fill="#000"/><line x1="882.9" y1="472.7" x2="905.0" y2="484.6" stroke="#000" stroke-width="0.9"/><line x1="927.1" y1="472.7" x2="905.0" y2="484.6" stroke="#000" stroke-width="0.9"/><line x1="905.0" y1="484.6" x2="881.8" y2="496.5" stroke="#000" stroke-width="0.9"/><line x1="905.0" y1="484.6" x2="928.2" y2="496.5" stroke="#000" stroke-width="0.9"/><circle cx="905.0" cy="484.6" r="1.2" fill="#000"/><circle cx="882.9" cy="472.7" r="1.3" fill="#000"/><circle cx="927.1" cy="472.7" r="1.3" fill="#000"/><line x1="881.8" y1="496.5" x2="905.0" y2="509.2" stroke="#000" stroke-width="0.9"/><line x1="928.2" y1="496.5" x2="905.0" y2="509.2" stroke="#000" stroke-width="0.9"/><line x1="905.0" y1="509.2" x2="880.6" y2="521.9" stroke="#000" stroke-width="0.9"/><line x1="905.0" y1="509.2" x2="929.4" y2="521.9" stroke="#000" stroke-width="0.9"/><circle cx="905.0" cy="509.2" r="1.2" fill="#000"/><circle cx="881.8" cy="496.5" r="1.3" fill="#000"/><circle cx="928.2" cy="496.5" r="1.3" fill="#000"/><line x1="880.6" y1="521.9" x2="934.2" y2="562.3" stroke="#000" stroke-width="1.0"/><line x1="929.4" y1="521.9" x2="875.8" y2="562.3" stroke="#000" stroke-width="1.0"/><circle cx="905.0" cy="540.4" r="1.1" fill="#000"/><line x1="878.4" y1="540.5" x2="931.6" y2="540.5" stroke="#000" stroke-width="1"/><line x1="879.5" y1="531.5" x2="892.9" y2="531.5" stroke="#8a8a8a" stroke-width="1"/><line x1="930.5" y1="531.5" x2="917.1" y2="531.5" stroke="#8a8a8a" stroke-width="1"/><circle cx="892.9" cy="531.1" r="1.2" fill="#000"/><circle cx="917.1" cy="531.1" r="1.2" fill="#000"/><line x1="892.9" y1="531.1" x2="878.4" y2="540.4" stroke="#000" stroke-width="0.8"/><line x1="917.1" y1="531.1" x2="931.6" y2="540.4" stroke="#000" stroke-width="0.8"/><line x1="877.1" y1="551.5" x2="890.3" y2="551.5" stroke="#111" stroke-width="1"/><line x1="932.9" y1="551.5" x2="919.7" y2="551.5" stroke="#111" stroke-width="1"/><circle cx="890.3" cy="551.3" r="1.2" fill="#000"/><circle cx="919.7" cy="551.3" r="1.2" fill="#000"/><line x1="890.3" y1="551.3" x2="878.4" y2="540.4" stroke="#000" stroke-width="0.8"/><line x1="919.7" y1="551.3" x2="931.6" y2="540.4" stroke="#000" stroke-width="0.8"/><circle cx="880.6" cy="521.9" r="1.1" fill="#000"/><circle cx="929.4" cy="521.9" r="1.1" fill="#000"/><line x1="875.8" y1="562.3" x2="939.7" y2="608.7" stroke="#000" stroke-width="1.0"/><line x1="934.2" y1="562.3" x2="870.3" y2="608.7" stroke="#000" stroke-width="1.0"/><circle cx="905.0" cy="583.8" r="1.1" fill="#000"/><line x1="873.2" y1="583.5" x2="936.8" y2="583.5" stroke="#8a8a8a" stroke-width="1"/><line x1="874.5" y1="573.5" x2="890.6" y2="573.5" stroke="#8a8a8a" stroke-width="1"/><line x1="935.5" y1="573.5" x2="919.4" y2="573.5" stroke="#8a8a8a" stroke-width="1"/><circle cx="890.6" cy="573.0" r="1.2" fill="#000"/><circle cx="919.4" cy="573.0" r="1.2" fill="#000"/><line x1="890.6" y1="573.0" x2="873.2" y2="583.8" stroke="#000" stroke-width="0.8"/><line x1="919.4" y1="573.0" x2="936.8" y2="583.8" stroke="#000" stroke-width="0.8"/><line x1="871.7" y1="596.5" x2="887.4" y2="596.5" stroke="#111" stroke-width="1"/><line x1="938.3" y1="596.5" x2="922.6" y2="596.5" stroke="#111" stroke-width="1"/><circle cx="887.4" cy="596.2" r="1.2" fill="#000"/><circle cx="922.6" cy="596.2" r="1.2" fill="#000"/><line x1="887.4" y1="596.2" x2="873.2" y2="583.8" stroke="#000" stroke-width="0.8"/><line x1="922.6" y1="596.2" x2="936.8" y2="583.8" stroke="#000" stroke-width="0.8"/><circle cx="875.8" cy="562.3" r="1.1" fill="#000"/><circle cx="934.2" cy="562.3" r="1.1" fill="#000"/><line x1="870.3" y1="608.7" x2="946.4" y2="664.6" stroke="#000" stroke-width="1.0"/><line x1="939.7" y1="608.7" x2="863.6" y2="664.6" stroke="#000" stroke-width="1.0"/><circle cx="905.0" cy="634.6" r="1.1" fill="#000"/><line x1="867.2" y1="634.5" x2="942.8" y2="634.5" stroke="#8a8a8a" stroke-width="1"/><line x1="868.7" y1="621.5" x2="887.9" y2="621.5" stroke="#8a8a8a" stroke-width="1"/><line x1="941.3" y1="621.5" x2="922.1" y2="621.5" stroke="#8a8a8a" stroke-width="1"/><circle cx="887.9" cy="621.7" r="1.2" fill="#000"/><circle cx="922.1" cy="621.7" r="1.2" fill="#000"/><line x1="887.9" y1="621.7" x2="867.2" y2="634.6" stroke="#000" stroke-width="0.8"/><line x1="922.1" y1="621.7" x2="942.8" y2="634.6" stroke="#000" stroke-width="0.8"/><line x1="865.4" y1="649.5" x2="884.0" y2="649.5" stroke="#111" stroke-width="1"/><line x1="944.6" y1="649.5" x2="926.0" y2="649.5" stroke="#111" stroke-width="1"/><circle cx="884.0" cy="649.6" r="1.2" fill="#000"/><circle cx="926.0" cy="649.6" r="1.2" fill="#000"/><line x1="884.0" y1="649.6" x2="867.2" y2="634.6" stroke="#000" stroke-width="0.8"/><line x1="926.0" y1="649.6" x2="942.8" y2="634.6" stroke="#000" stroke-width="0.8"/><circle cx="870.3" cy="608.7" r="1.1" fill="#000"/><circle cx="939.7" cy="608.7" r="1.1" fill="#000"/><line x1="863.6" y1="664.6" x2="954.0" y2="728.3" stroke="#000" stroke-width="1.0"/><line x1="946.4" y1="664.6" x2="856.0" y2="728.3" stroke="#000" stroke-width="1.0"/><circle cx="905.0" cy="694.3" r="1.1" fill="#000"/><line x1="860.1" y1="694.5" x2="949.9" y2="694.5" stroke="#000" stroke-width="1"/><line x1="861.8" y1="679.5" x2="884.7" y2="679.5" stroke="#8a8a8a" stroke-width="1"/><line x1="948.2" y1="679.5" x2="925.3" y2="679.5" stroke="#8a8a8a" stroke-width="1"/><circle cx="884.7" cy="679.5" r="1.2" fill="#000"/><circle cx="925.3" cy="679.5" r="1.2" fill="#000"/><line x1="884.7" y1="679.5" x2="860.1" y2="694.3" stroke="#000" stroke-width="0.8"/><line x1="925.3" y1="679.5" x2="949.9" y2="694.3" stroke="#000" stroke-width="0.8"/><line x1="858.0" y1="711.5" x2="880.1" y2="711.5" stroke="#111" stroke-width="1"/><line x1="952.0" y1="711.5" x2="929.9" y2="711.5" stroke="#111" stroke-width="1"/><circle cx="880.1" cy="711.3" r="1.2" fill="#000"/><circle cx="929.9" cy="711.3" r="1.2" fill="#000"/><line x1="880.1" y1="711.3" x2="860.1" y2="694.3" stroke="#000" stroke-width="0.8"/><line x1="929.9" y1="711.3" x2="949.9" y2="694.3" stroke="#000" stroke-width="0.8"/><circle cx="863.6" cy="664.6" r="1.1" fill="#000"/><circle cx="946.4" cy="664.6" r="1.1" fill="#000"/><circle cx="856.0" cy="728.3" r="1.1" fill="#000"/><circle cx="954.0" cy="728.3" r="1.1" fill="#000"/><line x1="891.0" y1="254.5" x2="919.0" y2="254.5" stroke="#000" stroke-width="1"/><line x1="842.5" y1="231.0" x2="894.0" y2="258.7" stroke="#000" stroke-width="1.3"/><line x1="842.5" y1="231.0" x2="905.0" y2="249.4" stroke="#000" stroke-width="1.2"/><line x1="843.8" y1="231.7" x2="848.8" y2="232.8" stroke="#000" stroke-width="0.85"/><line x1="848.8" y1="232.8" x2="851.5" y2="235.8" stroke="#000" stroke-width="0.85"/><circle cx="848.8" cy="232.8" r="1.0" fill="#000"/><circle cx="843.8" cy="231.7" r="1.0" fill="#000"/><line x1="852.4" y1="236.3" x2="859.2" y2="235.9" stroke="#000" stroke-width="0.85"/><line x1="859.2" y1="235.9" x2="860.1" y2="240.5" stroke="#000" stroke-width="0.85"/><circle cx="859.2" cy="235.9" r="1.0" fill="#000"/><circle cx="852.4" cy="236.3" r="1.0" fill="#000"/><line x1="861.0" y1="240.9" x2="869.6" y2="239.0" stroke="#000" stroke-width="0.85"/><line x1="869.6" y1="239.0" x2="868.7" y2="245.1" stroke="#000" stroke-width="0.85"/><circle cx="869.6" cy="239.0" r="1.0" fill="#000"/><circle cx="861.0" cy="240.9" r="1.0" fill="#000"/><line x1="869.5" y1="245.5" x2="880.0" y2="242.0" stroke="#000" stroke-width="0.85"/><line x1="880.0" y1="242.0" x2="877.3" y2="249.7" stroke="#000" stroke-width="0.85"/><circle cx="880.0" cy="242.0" r="1.0" fill="#000"/><circle cx="869.5" cy="245.5" r="1.0" fill="#000"/><line x1="878.1" y1="250.2" x2="890.4" y2="245.1" stroke="#000" stroke-width="0.85"/><line x1="890.4" y1="245.1" x2="885.8" y2="254.3" stroke="#000" stroke-width="0.85"/><circle cx="890.4" cy="245.1" r="1.0" fill="#000"/><circle cx="878.1" cy="250.2" r="1.0" fill="#000"/><line x1="886.7" y1="254.8" x2="900.8" y2="248.2" stroke="#000" stroke-width="0.85"/><line x1="900.8" y1="248.2" x2="894.4" y2="258.9" stroke="#000" stroke-width="0.85"/><circle cx="900.8" cy="248.2" r="1.0" fill="#000"/><circle cx="886.7" cy="254.8" r="1.0" fill="#000"/><circle cx="842.5" cy="231.0" r="0.8" fill="#000"/><circle cx="842.5" cy="231.0" r="0.8" fill="#000"/><circle cx="846.8" cy="233.3" r="0.8" fill="#000"/><circle cx="847.7" cy="232.5" r="0.8" fill="#000"/><circle cx="851.1" cy="235.6" r="0.8" fill="#000"/><circle cx="852.9" cy="234.1" r="0.8" fill="#000"/><circle cx="855.4" cy="237.9" r="0.8" fill="#000"/><circle cx="858.1" cy="235.6" r="0.8" fill="#000"/><circle cx="859.7" cy="240.2" r="0.8" fill="#000"/><circle cx="863.3" cy="237.1" r="0.8" fill="#000"/><circle cx="864.0" cy="242.5" r="0.8" fill="#000"/><circle cx="868.5" cy="238.7" r="0.8" fill="#000"/><circle cx="868.2" cy="244.8" r="0.8" fill="#000"/><circle cx="873.8" cy="240.2" r="0.8" fill="#000"/><circle cx="872.5" cy="247.2" r="0.8" fill="#000"/><circle cx="879.0" cy="241.7" r="0.8" fill="#000"/><circle cx="876.8" cy="249.5" r="0.8" fill="#000"/><circle cx="884.2" cy="243.3" r="0.8" fill="#000"/><circle cx="881.1" cy="251.8" r="0.8" fill="#000"/><circle cx="889.4" cy="244.8" r="0.8" fill="#000"/><circle cx="885.4" cy="254.1" r="0.8" fill="#000"/><circle cx="894.6" cy="246.3" r="0.8" fill="#000"/><circle cx="889.7" cy="256.4" r="0.8" fill="#000"/><circle cx="899.8" cy="247.9" r="0.8" fill="#000"/><circle cx="842.5" cy="231.0" r="1.4" fill="#000"/><line x1="967.5" y1="231.0" x2="916.0" y2="258.7" stroke="#000" stroke-width="1.3"/><line x1="967.5" y1="231.0" x2="905.0" y2="249.4" stroke="#000" stroke-width="1.2"/><line x1="966.2" y1="231.7" x2="961.2" y2="232.8" stroke="#000" stroke-width="0.85"/><line x1="961.2" y1="232.8" x2="958.5" y2="235.8" stroke="#000" stroke-width="0.85"/><circle cx="961.2" cy="232.8" r="1.0" fill="#000"/><circle cx="966.2" cy="231.7" r="1.0" fill="#000"/><line x1="957.6" y1="236.3" x2="950.8" y2="235.9" stroke="#000" stroke-width="0.85"/><line x1="950.8" y1="235.9" x2="949.9" y2="240.5" stroke="#000" stroke-width="0.85"/><circle cx="950.8" cy="235.9" r="1.0" fill="#000"/><circle cx="957.6" cy="236.3" r="1.0" fill="#000"/><line x1="949.0" y1="240.9" x2="940.4" y2="239.0" stroke="#000" stroke-width="0.85"/><line x1="940.4" y1="239.0" x2="941.3" y2="245.1" stroke="#000" stroke-width="0.85"/><circle cx="940.4" cy="239.0" r="1.0" fill="#000"/><circle cx="949.0" cy="240.9" r="1.0" fill="#000"/><line x1="940.5" y1="245.5" x2="930.0" y2="242.0" stroke="#000" stroke-width="0.85"/><line x1="930.0" y1="242.0" x2="932.7" y2="249.7" stroke="#000" stroke-width="0.85"/><circle cx="930.0" cy="242.0" r="1.0" fill="#000"/><circle cx="940.5" cy="245.5" r="1.0" fill="#000"/><line x1="931.9" y1="250.2" x2="919.6" y2="245.1" stroke="#000" stroke-width="0.85"/><line x1="919.6" y1="245.1" x2="924.2" y2="254.3" stroke="#000" stroke-width="0.85"/><circle cx="919.6" cy="245.1" r="1.0" fill="#000"/><circle cx="931.9" cy="250.2" r="1.0" fill="#000"/><line x1="923.3" y1="254.8" x2="909.2" y2="248.2" stroke="#000" stroke-width="0.85"/><line x1="909.2" y1="248.2" x2="915.6" y2="258.9" stroke="#000" stroke-width="0.85"/><circle cx="909.2" cy="248.2" r="1.0" fill="#000"/><circle cx="923.3" cy="254.8" r="1.0" fill="#000"/><circle cx="967.5" cy="231.0" r="0.8" fill="#000"/><circle cx="967.5" cy="231.0" r="0.8" fill="#000"/><circle cx="963.2" cy="233.3" r="0.8" fill="#000"/><circle cx="962.3" cy="232.5" r="0.8" fill="#000"/><circle cx="958.9" cy="235.6" r="0.8" fill="#000"/><circle cx="957.1" cy="234.1" r="0.8" fill="#000"/><circle cx="954.6" cy="237.9" r="0.8" fill="#000"/><circle cx="951.9" cy="235.6" r="0.8" fill="#000"/><circle cx="950.3" cy="240.2" r="0.8" fill="#000"/><circle cx="946.7" cy="237.1" r="0.8" fill="#000"/><circle cx="946.0" cy="242.5" r="0.8" fill="#000"/><circle cx="941.5" cy="238.7" r="0.8" fill="#000"/><circle cx="941.8" cy="244.8" r="0.8" fill="#000"/><circle cx="936.2" cy="240.2" r="0.8" fill="#000"/><circle cx="937.5" cy="247.2" r="0.8" fill="#000"/><circle cx="931.0" cy="241.7" r="0.8" fill="#000"/><circle cx="933.2" cy="249.5" r="0.8" fill="#000"/><circle cx="925.8" cy="243.3" r="0.8" fill="#000"/><circle cx="928.9" cy="251.8" r="0.8" fill="#000"/><circle cx="920.6" cy="244.8" r="0.8" fill="#000"/><circle cx="924.6" cy="254.1" r="0.8" fill="#000"/><circle cx="915.4" cy="246.3" r="0.8" fill="#000"/><circle cx="920.3" cy="256.4" r="0.8" fill="#000"/><circle cx="910.2" cy="247.9" r="0.8" fill="#000"/><circle cx="967.5" cy="231.0" r="1.4" fill="#000"/><line x1="905.0" y1="249.4" x2="893.0" y2="254.5" stroke="#000" stroke-width="1"/><line x1="905.0" y1="249.4" x2="917.0" y2="254.5" stroke="#000" stroke-width="1"/><circle cx="905.0" cy="249.4" r="1.5" fill="#000"/><line x1="844.0" y1="240.5" x2="966.0" y2="240.5" stroke="#000" stroke-width="1"/><line x1="844.5" y1="236.4" x2="844.5" y2="244.4" stroke="#000" stroke-width="1"/><line x1="966.5" y1="236.4" x2="966.5" y2="244.4" stroke="#000" stroke-width="1"/><line x1="905.5" y1="235.0" x2="905.5" y2="249.0" stroke="#000" stroke-width="1"/><line x1="989.0" y1="278.9" x2="916.2" y2="259.0" stroke="#000" stroke-width="1.2"/><line x1="989.0" y1="283.0" x2="916.2" y2="283.0" stroke="#9a9a9a" stroke-width="2"/><line x1="989.0" y1="282.5" x2="916.2" y2="282.5" stroke="#000" stroke-width="1" stroke-dasharray="2,3"/><line x1="975.5" y1="275.1" x2="975.5" y2="282.9" stroke="#9a9a9a" stroke-width="1"/><circle cx="975.0" cy="275.1" r="1.2" fill="#000"/><line x1="967.5" y1="272.9" x2="967.5" y2="282.9" stroke="#000" stroke-width="1"/><circle cx="967.0" cy="272.9" r="1.2" fill="#000"/><line x1="955.5" y1="269.6" x2="955.5" y2="282.9" stroke="#9a9a9a" stroke-width="1"/><circle cx="955.0" cy="269.6" r="1.2" fill="#000"/><line x1="940.5" y1="265.5" x2="940.5" y2="282.9" stroke="#9a9a9a" stroke-width="1"/><circle cx="940.0" cy="265.5" r="1.2" fill="#000"/><line x1="929.5" y1="262.5" x2="929.5" y2="282.9" stroke="#000" stroke-width="1"/><circle cx="929.0" cy="262.5" r="1.2" fill="#000"/><line x1="975.0" y1="275.1" x2="967.0" y2="282.9" stroke="#000" stroke-width="1.0"/><circle cx="975.0" cy="275.1" r="1.3" fill="#000"/><line x1="967.0" y1="282.9" x2="955.0" y2="269.6" stroke="#000" stroke-width="1.0"/><circle cx="967.0" cy="282.9" r="1.3" fill="#000"/><line x1="955.0" y1="269.6" x2="940.0" y2="282.9" stroke="#000" stroke-width="1.0"/><circle cx="955.0" cy="269.6" r="1.3" fill="#000"/><line x1="940.0" y1="282.9" x2="929.0" y2="262.5" stroke="#000" stroke-width="1.0"/><circle cx="940.0" cy="282.9" r="1.3" fill="#000"/><line x1="929.0" y1="262.5" x2="917.0" y2="282.9" stroke="#000" stroke-width="1.0"/><circle cx="929.0" cy="262.5" r="1.3" fill="#000"/><line x1="989.0" y1="278.9" x2="984.5" y2="282.9" stroke="#000" stroke-width="0.8"/><line x1="989.0" y1="282.9" x2="984.5" y2="277.7" stroke="#000" stroke-width="0.8"/><circle cx="984.5" cy="282.9" r="1.2" fill="#000"/><circle cx="984.5" cy="277.7" r="1.0" fill="#000"/><line x1="984.5" y1="277.7" x2="980.0" y2="282.9" stroke="#000" stroke-width="0.8"/><line x1="984.5" y1="282.9" x2="980.0" y2="276.4" stroke="#000" stroke-width="0.8"/><circle cx="980.0" cy="282.9" r="1.2" fill="#000"/><circle cx="980.0" cy="276.4" r="1.0" fill="#000"/><line x1="980.0" y1="276.4" x2="975.5" y2="282.9" stroke="#000" stroke-width="0.8"/><line x1="980.0" y1="282.9" x2="975.5" y2="275.2" stroke="#000" stroke-width="0.8"/><circle cx="975.5" cy="282.9" r="1.2" fill="#000"/><circle cx="975.5" cy="275.2" r="1.0" fill="#000"/><circle cx="989.0" cy="282.9" r="1.3" fill="#000"/><circle cx="989.0" cy="278.9" r="1.2" fill="#000"/><line x1="1009.8" y1="341.3" x2="918.8" y2="320.0" stroke="#000" stroke-width="1.2"/><line x1="1009.8" y1="345.0" x2="918.8" y2="345.0" stroke="#9a9a9a" stroke-width="2"/><line x1="1009.8" y1="344.5" x2="918.8" y2="344.5" stroke="#000" stroke-width="1" stroke-dasharray="2,3"/><line x1="992.5" y1="337.1" x2="992.5" y2="344.9" stroke="#9a9a9a" stroke-width="1"/><circle cx="992.0" cy="337.1" r="1.2" fill="#000"/><line x1="980.5" y1="334.3" x2="980.5" y2="344.9" stroke="#9a9a9a" stroke-width="1"/><circle cx="980.0" cy="334.3" r="1.2" fill="#000"/><line x1="965.5" y1="330.8" x2="965.5" y2="344.9" stroke="#000" stroke-width="1"/><circle cx="965.0" cy="330.8" r="1.2" fill="#000"/><line x1="947.5" y1="326.6" x2="947.5" y2="344.9" stroke="#000" stroke-width="1"/><circle cx="947.0" cy="326.6" r="1.2" fill="#000"/><line x1="933.5" y1="323.3" x2="933.5" y2="344.9" stroke="#000" stroke-width="1"/><circle cx="933.0" cy="323.3" r="1.2" fill="#000"/><line x1="992.0" y1="337.1" x2="980.0" y2="344.9" stroke="#000" stroke-width="1.0"/><circle cx="992.0" cy="337.1" r="1.3" fill="#000"/><line x1="980.0" y1="344.9" x2="965.0" y2="330.8" stroke="#000" stroke-width="1.0"/><circle cx="980.0" cy="344.9" r="1.3" fill="#000"/><line x1="965.0" y1="330.8" x2="947.0" y2="344.9" stroke="#000" stroke-width="1.0"/><circle cx="965.0" cy="330.8" r="1.3" fill="#000"/><line x1="947.0" y1="344.9" x2="933.0" y2="323.3" stroke="#000" stroke-width="1.0"/><circle cx="947.0" cy="344.9" r="1.3" fill="#000"/><line x1="933.0" y1="323.3" x2="920.0" y2="344.9" stroke="#000" stroke-width="1.0"/><circle cx="933.0" cy="323.3" r="1.3" fill="#000"/><line x1="1009.8" y1="341.3" x2="1005.3" y2="344.9" stroke="#000" stroke-width="0.8"/><line x1="1009.8" y1="344.9" x2="1005.3" y2="340.2" stroke="#000" stroke-width="0.8"/><circle cx="1005.3" cy="344.9" r="1.2" fill="#000"/><circle cx="1005.3" cy="340.2" r="1.0" fill="#000"/><line x1="1005.3" y1="340.2" x2="1000.8" y2="344.9" stroke="#000" stroke-width="0.8"/><line x1="1005.3" y1="344.9" x2="1000.8" y2="339.2" stroke="#000" stroke-width="0.8"/><circle cx="1000.8" cy="344.9" r="1.2" fill="#000"/><circle cx="1000.8" cy="339.2" r="1.0" fill="#000"/><line x1="1000.8" y1="339.2" x2="996.3" y2="344.9" stroke="#000" stroke-width="0.8"/><line x1="1000.8" y1="344.9" x2="996.3" y2="338.1" stroke="#000" stroke-width="0.8"/><circle cx="996.3" cy="344.9" r="1.2" fill="#000"/><circle cx="996.3" cy="338.1" r="1.0" fill="#000"/><circle cx="1009.8" cy="344.9" r="1.3" fill="#000"/><circle cx="1009.8" cy="341.3" r="1.2" fill="#000"/><line x1="821.0" y1="278.9" x2="893.8" y2="259.0" stroke="#000" stroke-width="1.2"/><line x1="821.0" y1="283.0" x2="893.8" y2="283.0" stroke="#9a9a9a" stroke-width="2"/><line x1="821.0" y1="282.5" x2="893.8" y2="282.5" stroke="#000" stroke-width="1" stroke-dasharray="2,3"/><line x1="835.5" y1="275.1" x2="835.5" y2="282.9" stroke="#9a9a9a" stroke-width="1"/><circle cx="835.0" cy="275.1" r="1.2" fill="#000"/><line x1="843.5" y1="272.9" x2="843.5" y2="282.9" stroke="#000" stroke-width="1"/><circle cx="843.0" cy="272.9" r="1.2" fill="#000"/><line x1="855.5" y1="269.6" x2="855.5" y2="282.9" stroke="#9a9a9a" stroke-width="1"/><circle cx="855.0" cy="269.6" r="1.2" fill="#000"/><line x1="870.5" y1="265.5" x2="870.5" y2="282.9" stroke="#9a9a9a" stroke-width="1"/><circle cx="870.0" cy="265.5" r="1.2" fill="#000"/><line x1="881.5" y1="262.5" x2="881.5" y2="282.9" stroke="#000" stroke-width="1"/><circle cx="881.0" cy="262.5" r="1.2" fill="#000"/><line x1="835.0" y1="275.1" x2="843.0" y2="282.9" stroke="#000" stroke-width="1.0"/><circle cx="835.0" cy="275.1" r="1.3" fill="#000"/><line x1="843.0" y1="282.9" x2="855.0" y2="269.6" stroke="#000" stroke-width="1.0"/><circle cx="843.0" cy="282.9" r="1.3" fill="#000"/><line x1="855.0" y1="269.6" x2="870.0" y2="282.9" stroke="#000" stroke-width="1.0"/><circle cx="855.0" cy="269.6" r="1.3" fill="#000"/><line x1="870.0" y1="282.9" x2="881.0" y2="262.5" stroke="#000" stroke-width="1.0"/><circle cx="870.0" cy="282.9" r="1.3" fill="#000"/><line x1="881.0" y1="262.5" x2="893.0" y2="282.9" stroke="#000" stroke-width="1.0"/><circle cx="881.0" cy="262.5" r="1.3" fill="#000"/><line x1="821.0" y1="278.9" x2="825.5" y2="282.9" stroke="#000" stroke-width="0.8"/><line x1="821.0" y1="282.9" x2="825.5" y2="277.7" stroke="#000" stroke-width="0.8"/><circle cx="825.5" cy="282.9" r="1.2" fill="#000"/><circle cx="825.5" cy="277.7" r="1.0" fill="#000"/><line x1="825.5" y1="277.7" x2="830.0" y2="282.9" stroke="#000" stroke-width="0.8"/><line x1="825.5" y1="282.9" x2="830.0" y2="276.4" stroke="#000" stroke-width="0.8"/><circle cx="830.0" cy="282.9" r="1.2" fill="#000"/><circle cx="830.0" cy="276.4" r="1.0" fill="#000"/><line x1="830.0" y1="276.4" x2="834.5" y2="282.9" stroke="#000" stroke-width="0.8"/><line x1="830.0" y1="282.9" x2="834.5" y2="275.2" stroke="#000" stroke-width="0.8"/><circle cx="834.5" cy="282.9" r="1.2" fill="#000"/><circle cx="834.5" cy="275.2" r="1.0" fill="#000"/><circle cx="821.0" cy="282.9" r="1.3" fill="#000"/><circle cx="821.0" cy="278.9" r="1.2" fill="#000"/><line x1="800.2" y1="341.3" x2="891.2" y2="320.0" stroke="#000" stroke-width="1.2"/><line x1="800.2" y1="345.0" x2="891.2" y2="345.0" stroke="#9a9a9a" stroke-width="2"/><line x1="800.2" y1="344.5" x2="891.2" y2="344.5" stroke="#000" stroke-width="1" stroke-dasharray="2,3"/><line x1="818.5" y1="337.1" x2="818.5" y2="344.9" stroke="#9a9a9a" stroke-width="1"/><circle cx="818.0" cy="337.1" r="1.2" fill="#000"/><line x1="830.5" y1="334.3" x2="830.5" y2="344.9" stroke="#9a9a9a" stroke-width="1"/><circle cx="830.0" cy="334.3" r="1.2" fill="#000"/><line x1="845.5" y1="330.8" x2="845.5" y2="344.9" stroke="#000" stroke-width="1"/><circle cx="845.0" cy="330.8" r="1.2" fill="#000"/><line x1="863.5" y1="326.6" x2="863.5" y2="344.9" stroke="#000" stroke-width="1"/><circle cx="863.0" cy="326.6" r="1.2" fill="#000"/><line x1="877.5" y1="323.3" x2="877.5" y2="344.9" stroke="#000" stroke-width="1"/><circle cx="877.0" cy="323.3" r="1.2" fill="#000"/><line x1="818.0" y1="337.1" x2="830.0" y2="344.9" stroke="#000" stroke-width="1.0"/><circle cx="818.0" cy="337.1" r="1.3" fill="#000"/><line x1="830.0" y1="344.9" x2="845.0" y2="330.8" stroke="#000" stroke-width="1.0"/><circle cx="830.0" cy="344.9" r="1.3" fill="#000"/><line x1="845.0" y1="330.8" x2="863.0" y2="344.9" stroke="#000" stroke-width="1.0"/><circle cx="845.0" cy="330.8" r="1.3" fill="#000"/><line x1="863.0" y1="344.9" x2="877.0" y2="323.3" stroke="#000" stroke-width="1.0"/><circle cx="863.0" cy="344.9" r="1.3" fill="#000"/><line x1="877.0" y1="323.3" x2="890.0" y2="344.9" stroke="#000" stroke-width="1.0"/><circle cx="877.0" cy="323.3" r="1.3" fill="#000"/><line x1="800.2" y1="341.3" x2="804.7" y2="344.9" stroke="#000" stroke-width="0.8"/><line x1="800.2" y1="344.9" x2="804.7" y2="340.2" stroke="#000" stroke-width="0.8"/><circle cx="804.7" cy="344.9" r="1.2" fill="#000"/><circle cx="804.7" cy="340.2" r="1.0" fill="#000"/><line x1="804.7" y1="340.2" x2="809.2" y2="344.9" stroke="#000" stroke-width="0.8"/><line x1="804.7" y1="344.9" x2="809.2" y2="339.2" stroke="#000" stroke-width="0.8"/><circle cx="809.2" cy="344.9" r="1.2" fill="#000"/><circle cx="809.2" cy="339.2" r="1.0" fill="#000"/><line x1="809.2" y1="339.2" x2="813.7" y2="344.9" stroke="#000" stroke-width="0.8"/><line x1="809.2" y1="344.9" x2="813.7" y2="338.1" stroke="#000" stroke-width="0.8"/><circle cx="813.7" cy="344.9" r="1.2" fill="#000"/><circle cx="813.7" cy="338.1" r="1.0" fill="#000"/><circle cx="800.2" cy="344.9" r="1.3" fill="#000"/><circle cx="800.2" cy="341.3" r="1.2" fill="#000"/><line x1="823.0" y1="292.0" x2="893.0" y2="292.0" stroke="#9a9a9a" stroke-width="2"/><line x1="917.0" y1="292.0" x2="987.0" y2="292.0" stroke="#9a9a9a" stroke-width="2"/><line x1="823.5" y1="287.0" x2="823.5" y2="296.0" stroke="#000" stroke-width="1"/><line x1="987.5" y1="287.0" x2="987.5" y2="296.0" stroke="#000" stroke-width="1"/><line x1="893.0" y1="292.0" x2="917.0" y2="292.0" stroke="#9a9a9a" stroke-width="2"/><line x1="905.5" y1="286.0" x2="905.5" y2="297.0" stroke="#000" stroke-width="1"/><line x1="802.0" y1="354.5" x2="1008.0" y2="354.5" stroke="#000" stroke-width="1"/><line x1="802.5" y1="350.3" x2="802.5" y2="358.3" stroke="#000" stroke-width="1"/><line x1="1008.5" y1="350.3" x2="1008.5" y2="358.3" stroke="#000" stroke-width="1"/><line x1="843.5" y1="350.3" x2="843.5" y2="358.3" stroke="#000" stroke-width="1"/><line x1="905.5" y1="350.3" x2="905.5" y2="358.3" stroke="#000" stroke-width="1"/><line x1="965.5" y1="350.3" x2="965.5" y2="358.3" stroke="#000" stroke-width="1"/><polygon points="883.6,309.0 890.6,309.0 887.1,317.0" fill="#000" stroke="#000" stroke-width="0.8"/><line x1="887.5" y1="305.0" x2="887.5" y2="309.0" stroke="#000" stroke-width="1"/><text x="884.1" y="304.0" font-size="5" fill="#444" text-anchor="middle" >A</text><polygon points="919.4,309.0 926.4,309.0 922.9,317.0" fill="#000" stroke="#000" stroke-width="0.8"/><line x1="922.5" y1="305.0" x2="922.5" y2="309.0" stroke="#000" stroke-width="1"/><text x="919.9" y="304.0" font-size="5" fill="#444" text-anchor="middle" >A</text><line x1="887.1" y1="319.5" x2="922.9" y2="319.5" stroke="#000" stroke-width="1"/><polygon points="875.5,463.0 882.5,463.0 879.0,471.0" fill="#000" stroke="#000" stroke-width="0.8"/><line x1="879.5" y1="459.0" x2="879.5" y2="463.0" stroke="#000" stroke-width="1"/><text x="876.0" y="458.0" font-size="5" fill="#444" text-anchor="middle" >B</text><polygon points="927.5,463.0 934.5,463.0 931.0,471.0" fill="#000" stroke="#000" stroke-width="0.8"/><line x1="930.5" y1="459.0" x2="930.5" y2="463.0" stroke="#000" stroke-width="1"/><text x="928.0" y="458.0" font-size="5" fill="#444" text-anchor="middle" >B</text><line x1="879.0" y1="472.0" x2="931.0" y2="472.0" stroke="#aaa" stroke-width="2"/><line x1="879.0" y1="473.5" x2="931.0" y2="473.5" stroke="#000" stroke-width="1"/><polygon points="872.3,510.0 879.3,510.0 875.8,518.0" fill="#000" stroke="#000" stroke-width="0.8"/><line x1="875.5" y1="506.0" x2="875.5" y2="510.0" stroke="#000" stroke-width="1"/><text x="872.8" y="505.0" font-size="5" fill="#444" text-anchor="middle" >C</text><polygon points="930.7,510.0 937.7,510.0 934.2,518.0" fill="#000" stroke="#000" stroke-width="0.8"/><line x1="934.5" y1="506.0" x2="934.5" y2="510.0" stroke="#000" stroke-width="1"/><text x="931.2" y="505.0" font-size="5" fill="#444" text-anchor="middle" >C</text><line x1="875.8" y1="518.0" x2="934.2" y2="518.0" stroke="#aaa" stroke-width="2"/><line x1="875.8" y1="520.5" x2="934.2" y2="520.5" stroke="#000" stroke-width="1"/><polygon points="853.1,683.0 860.1,683.0 856.6,691.0" fill="#000" stroke="#000" stroke-width="0.8"/><line x1="856.5" y1="679.0" x2="856.5" y2="683.0" stroke="#000" stroke-width="1"/><text x="853.6" y="678.0" font-size="5" fill="#444" text-anchor="middle" >D</text><polygon points="949.9,683.0 956.9,683.0 953.4,691.0" fill="#000" stroke="#000" stroke-width="0.8"/><line x1="953.5" y1="679.0" x2="953.5" y2="683.0" stroke="#000" stroke-width="1"/><text x="950.4" y="678.0" font-size="5" fill="#444" text-anchor="middle" >D</text><line x1="856.6" y1="693.5" x2="953.4" y2="693.5" stroke="#000" stroke-width="1"/><line x1="856.0" y1="740.0" x2="955.0" y2="740.0" stroke="#999" stroke-width="2"/><line x1="856.5" y1="735.0" x2="856.5" y2="744.0" stroke="#000" stroke-width="1"/><line x1="955.5" y1="735.0" x2="955.5" y2="744.0" stroke="#000" stroke-width="1"/><line x1="768.5" y1="247.7" x2="768.5" y2="730.6" stroke="#000" stroke-width="1"/><line x1="775.0" y1="230.0" x2="775.0" y2="730.6" stroke="#9a9a9a" stroke-width="2"/><line x1="782.5" y1="247.7" x2="782.5" y2="730.6" stroke="#000" stroke-width="1"/><line x1="763.0" y1="247.5" x2="773.0" y2="247.5" stroke="#000" stroke-width="1"/><line x1="770.0" y1="230.5" x2="781.0" y2="230.5" stroke="#000" stroke-width="1"/><line x1="770.0" y1="283.5" x2="781.0" y2="283.5" stroke="#000" stroke-width="1"/><line x1="770.0" y1="344.5" x2="781.0" y2="344.5" stroke="#000" stroke-width="1"/><line x1="770.0" y1="522.5" x2="781.0" y2="522.5" stroke="#000" stroke-width="1"/><line x1="770.0" y1="730.5" x2="781.0" y2="730.5" stroke="#000" stroke-width="1"/><line x1="778.0" y1="247.5" x2="788.0" y2="247.5" stroke="#000" stroke-width="1"/><line x1="778.0" y1="258.5" x2="788.0" y2="258.5" stroke="#000" stroke-width="1"/><line x1="778.0" y1="311.5" x2="788.0" y2="311.5" stroke="#000" stroke-width="1"/><line x1="778.0" y1="403.5" x2="788.0" y2="403.5" stroke="#000" stroke-width="1"/><line x1="778.0" y1="458.5" x2="788.0" y2="458.5" stroke="#000" stroke-width="1"/><line x1="778.0" y1="522.5" x2="788.0" y2="522.5" stroke="#000" stroke-width="1"/><line x1="778.0" y1="577.5" x2="788.0" y2="577.5" stroke="#000" stroke-width="1"/><line x1="778.0" y1="631.5" x2="788.0" y2="631.5" stroke="#000" stroke-width="1"/><line x1="778.0" y1="694.5" x2="788.0" y2="694.5" stroke="#000" stroke-width="1"/><line x1="778.0" y1="730.5" x2="788.0" y2="730.5" stroke="#000" stroke-width="1"/><line x1="764.0" y1="730.5" x2="787.0" y2="730.5" stroke="#000" stroke-width="1"/><line x1="763.0" y1="522.5" x2="773.0" y2="522.5" stroke="#000" stroke-width="1"/><line x1="1027.5" y1="248.0" x2="1027.5" y2="729.0" stroke="#000" stroke-width="1"/><line x1="1034.0" y1="248.0" x2="1034.0" y2="729.0" stroke="#b5b5b5" stroke-width="2"/><line x1="1023.0" y1="249.0" x2="1031.0" y2="249.0" stroke="#000" stroke-width="2"/><circle cx="1027.0" cy="248.9" r="1.4" fill="#000"/><line x1="1023.0" y1="254.0" x2="1031.0" y2="254.0" stroke="#000" stroke-width="2"/><circle cx="1027.0" cy="253.6" r="1.4" fill="#000"/><line x1="1023.0" y1="258.0" x2="1031.0" y2="258.0" stroke="#000" stroke-width="2"/><circle cx="1027.0" cy="258.4" r="1.4" fill="#000"/><line x1="1023.0" y1="270.0" x2="1031.0" y2="270.0" stroke="#000" stroke-width="2"/><circle cx="1027.0" cy="270.3" r="1.4" fill="#000"/><line x1="1023.0" y1="283.0" x2="1031.0" y2="283.0" stroke="#000" stroke-width="2"/><circle cx="1027.0" cy="282.6" r="1.4" fill="#000"/><line x1="1023.0" y1="294.0" x2="1031.0" y2="294.0" stroke="#000" stroke-width="2"/><circle cx="1027.0" cy="294.5" r="1.4" fill="#000"/><line x1="1023.0" y1="307.0" x2="1031.0" y2="307.0" stroke="#000" stroke-width="2"/><circle cx="1027.0" cy="307.0" r="1.4" fill="#000"/><line x1="1023.0" y1="320.0" x2="1031.0" y2="320.0" stroke="#000" stroke-width="2"/><circle cx="1027.0" cy="320.0" r="1.4" fill="#000"/><line x1="1023.0" y1="332.0" x2="1031.0" y2="332.0" stroke="#000" stroke-width="2"/><circle cx="1027.0" cy="332.0" r="1.4" fill="#000"/><line x1="1023.0" y1="344.0" x2="1031.0" y2="344.0" stroke="#000" stroke-width="2"/><circle cx="1027.0" cy="344.4" r="1.4" fill="#000"/><line x1="1023.0" y1="358.0" x2="1031.0" y2="358.0" stroke="#000" stroke-width="2"/><circle cx="1027.0" cy="358.0" r="1.4" fill="#000"/><line x1="1023.0" y1="375.0" x2="1031.0" y2="375.0" stroke="#000" stroke-width="2"/><circle cx="1027.0" cy="374.8" r="1.4" fill="#000"/><line x1="1023.0" y1="391.0" x2="1031.0" y2="391.0" stroke="#000" stroke-width="2"/><circle cx="1027.0" cy="391.4" r="1.4" fill="#000"/><line x1="1023.0" y1="410.0" x2="1031.0" y2="410.0" stroke="#000" stroke-width="2"/><circle cx="1027.0" cy="410.0" r="1.4" fill="#000"/><line x1="1023.0" y1="430.0" x2="1031.0" y2="430.0" stroke="#000" stroke-width="2"/><circle cx="1027.0" cy="430.2" r="1.4" fill="#000"/><line x1="1023.0" y1="451.0" x2="1031.0" y2="451.0" stroke="#000" stroke-width="2"/><circle cx="1027.0" cy="451.0" r="1.4" fill="#000"/><line x1="1023.0" y1="474.0" x2="1031.0" y2="474.0" stroke="#000" stroke-width="2"/><circle cx="1027.0" cy="473.6" r="1.4" fill="#000"/><line x1="1023.0" y1="497.0" x2="1031.0" y2="497.0" stroke="#000" stroke-width="2"/><circle cx="1027.0" cy="497.0" r="1.4" fill="#000"/><line x1="1023.0" y1="522.0" x2="1031.0" y2="522.0" stroke="#000" stroke-width="2"/><circle cx="1027.0" cy="522.3" r="1.4" fill="#000"/><line x1="1023.0" y1="540.0" x2="1031.0" y2="540.0" stroke="#000" stroke-width="2"/><circle cx="1027.0" cy="540.1" r="1.4" fill="#000"/><line x1="1023.0" y1="562.0" x2="1031.0" y2="562.0" stroke="#000" stroke-width="2"/><circle cx="1027.0" cy="562.2" r="1.4" fill="#000"/><line x1="1023.0" y1="584.0" x2="1031.0" y2="584.0" stroke="#000" stroke-width="2"/><circle cx="1027.0" cy="583.6" r="1.4" fill="#000"/><line x1="1023.0" y1="608.0" x2="1031.0" y2="608.0" stroke="#000" stroke-width="2"/><circle cx="1027.0" cy="608.5" r="1.4" fill="#000"/><line x1="1023.0" y1="635.0" x2="1031.0" y2="635.0" stroke="#000" stroke-width="2"/><circle cx="1027.0" cy="634.7" r="1.4" fill="#000"/><line x1="1023.0" y1="664.0" x2="1031.0" y2="664.0" stroke="#000" stroke-width="2"/><circle cx="1027.0" cy="664.0" r="1.4" fill="#000"/><line x1="1023.0" y1="694.0" x2="1031.0" y2="694.0" stroke="#000" stroke-width="2"/><circle cx="1027.0" cy="694.3" r="1.4" fill="#000"/><line x1="1023.0" y1="728.0" x2="1031.0" y2="728.0" stroke="#000" stroke-width="2"/><circle cx="1027.0" cy="728.3" r="1.4" fill="#000"/><line x1="1023.0" y1="249.0" x2="1038.0" y2="249.0" stroke="#000" stroke-width="2"/><circle cx="1034.5" cy="248.9" r="1.2" fill="#000"/><line x1="1023.0" y1="258.0" x2="1038.0" y2="258.0" stroke="#000" stroke-width="2"/><circle cx="1034.5" cy="258.4" r="1.2" fill="#000"/><line x1="1023.0" y1="270.0" x2="1038.0" y2="270.0" stroke="#000" stroke-width="2"/><circle cx="1034.5" cy="270.3" r="1.2" fill="#000"/><line x1="1023.0" y1="283.0" x2="1038.0" y2="283.0" stroke="#000" stroke-width="2"/><circle cx="1034.5" cy="282.6" r="1.2" fill="#000"/><line x1="1023.0" y1="294.0" x2="1038.0" y2="294.0" stroke="#000" stroke-width="2"/><circle cx="1034.5" cy="294.5" r="1.2" fill="#000"/><line x1="1023.0" y1="344.0" x2="1038.0" y2="344.0" stroke="#000" stroke-width="2"/><circle cx="1034.5" cy="344.4" r="1.2" fill="#000"/><line x1="1023.0" y1="358.0" x2="1038.0" y2="358.0" stroke="#000" stroke-width="2"/><circle cx="1034.5" cy="358.0" r="1.2" fill="#000"/><line x1="1023.0" y1="522.0" x2="1038.0" y2="522.0" stroke="#000" stroke-width="2"/><circle cx="1034.5" cy="522.3" r="1.2" fill="#000"/><line x1="1023.0" y1="540.0" x2="1038.0" y2="540.0" stroke="#000" stroke-width="2"/><circle cx="1034.5" cy="540.1" r="1.2" fill="#000"/><line x1="1023.0" y1="562.0" x2="1038.0" y2="562.0" stroke="#000" stroke-width="2"/><circle cx="1034.5" cy="562.2" r="1.2" fill="#000"/><line x1="1023.0" y1="584.0" x2="1038.0" y2="584.0" stroke="#000" stroke-width="2"/><circle cx="1034.5" cy="583.6" r="1.2" fill="#000"/><line x1="1023.0" y1="608.0" x2="1038.0" y2="608.0" stroke="#000" stroke-width="2"/><circle cx="1034.5" cy="608.5" r="1.2" fill="#000"/><line x1="1023.0" y1="694.0" x2="1038.0" y2="694.0" stroke="#000" stroke-width="2"/><circle cx="1034.5" cy="694.3" r="1.2" fill="#000"/><line x1="1023.0" y1="728.0" x2="1038.0" y2="728.0" stroke="#000" stroke-width="2"/><circle cx="1034.5" cy="728.3" r="1.2" fill="#000"/><polyline points="1136.5,256.6 1124.0,517.0 1098.9,728.8" fill="none" stroke="#000" stroke-width="1.15"/><polyline points="1160.5,256.6 1173.0,517.0 1198.1,728.8" fill="none" stroke="#000" stroke-width="1.15"/><circle cx="1136.5" cy="256.6" r="0.85" fill="#000"/><circle cx="1160.5" cy="256.6" r="0.85" fill="#000"/><circle cx="1136.2" cy="262.7" r="0.85" fill="#000"/><circle cx="1160.8" cy="262.7" r="0.85" fill="#000"/><circle cx="1135.9" cy="268.7" r="0.85" fill="#000"/><circle cx="1161.1" cy="268.7" r="0.85" fill="#000"/><circle cx="1135.6" cy="274.8" r="0.85" fill="#000"/><circle cx="1161.4" cy="274.8" r="0.85" fill="#000"/><circle cx="1135.3" cy="280.8" r="0.85" fill="#000"/><circle cx="1161.7" cy="280.8" r="0.85" fill="#000"/><circle cx="1135.0" cy="286.9" r="0.85" fill="#000"/><circle cx="1162.0" cy="286.9" r="0.85" fill="#000"/><circle cx="1134.8" cy="292.9" r="0.85" fill="#000"/><circle cx="1162.2" cy="292.9" r="0.85" fill="#000"/><circle cx="1134.5" cy="299.0" r="0.85" fill="#000"/><circle cx="1162.5" cy="299.0" r="0.85" fill="#000"/><circle cx="1134.2" cy="305.0" r="0.85" fill="#000"/><circle cx="1162.8" cy="305.0" r="0.85" fill="#000"/><circle cx="1133.9" cy="311.1" r="0.85" fill="#000"/><circle cx="1163.1" cy="311.1" r="0.85" fill="#000"/><circle cx="1133.6" cy="317.2" r="0.85" fill="#000"/><circle cx="1163.4" cy="317.2" r="0.85" fill="#000"/><circle cx="1133.3" cy="323.2" r="0.85" fill="#000"/><circle cx="1163.7" cy="323.2" r="0.85" fill="#000"/><circle cx="1133.0" cy="329.3" r="0.85" fill="#000"/><circle cx="1164.0" cy="329.3" r="0.85" fill="#000"/><circle cx="1132.7" cy="335.3" r="0.85" fill="#000"/><circle cx="1164.3" cy="335.3" r="0.85" fill="#000"/><circle cx="1132.4" cy="341.4" r="0.85" fill="#000"/><circle cx="1164.6" cy="341.4" r="0.85" fill="#000"/><circle cx="1132.1" cy="347.4" r="0.85" fill="#000"/><circle cx="1164.9" cy="347.4" r="0.85" fill="#000"/><circle cx="1131.8" cy="353.5" r="0.85" fill="#000"/><circle cx="1165.2" cy="353.5" r="0.85" fill="#000"/><circle cx="1131.6" cy="359.5" r="0.85" fill="#000"/><circle cx="1165.4" cy="359.5" r="0.85" fill="#000"/><circle cx="1131.3" cy="365.6" r="0.85" fill="#000"/><circle cx="1165.7" cy="365.6" r="0.85" fill="#000"/><circle cx="1131.0" cy="371.7" r="0.85" fill="#000"/><circle cx="1166.0" cy="371.7" r="0.85" fill="#000"/><circle cx="1130.7" cy="377.7" r="0.85" fill="#000"/><circle cx="1166.3" cy="377.7" r="0.85" fill="#000"/><circle cx="1130.4" cy="383.8" r="0.85" fill="#000"/><circle cx="1166.6" cy="383.8" r="0.85" fill="#000"/><circle cx="1130.1" cy="389.8" r="0.85" fill="#000"/><circle cx="1166.9" cy="389.8" r="0.85" fill="#000"/><circle cx="1129.8" cy="395.9" r="0.85" fill="#000"/><circle cx="1167.2" cy="395.9" r="0.85" fill="#000"/><circle cx="1129.5" cy="401.9" r="0.85" fill="#000"/><circle cx="1167.5" cy="401.9" r="0.85" fill="#000"/><circle cx="1129.2" cy="408.0" r="0.85" fill="#000"/><circle cx="1167.8" cy="408.0" r="0.85" fill="#000"/><circle cx="1128.9" cy="414.1" r="0.85" fill="#000"/><circle cx="1168.1" cy="414.1" r="0.85" fill="#000"/><circle cx="1128.7" cy="420.1" r="0.85" fill="#000"/><circle cx="1168.3" cy="420.1" r="0.85" fill="#000"/><circle cx="1128.4" cy="426.2" r="0.85" fill="#000"/><circle cx="1168.6" cy="426.2" r="0.85" fill="#000"/><circle cx="1128.1" cy="432.2" r="0.85" fill="#000"/><circle cx="1168.9" cy="432.2" r="0.85" fill="#000"/><circle cx="1127.8" cy="438.3" r="0.85" fill="#000"/><circle cx="1169.2" cy="438.3" r="0.85" fill="#000"/><circle cx="1127.5" cy="444.3" r="0.85" fill="#000"/><circle cx="1169.5" cy="444.3" r="0.85" fill="#000"/><circle cx="1127.2" cy="450.4" r="0.85" fill="#000"/><circle cx="1169.8" cy="450.4" r="0.85" fill="#000"/><circle cx="1126.9" cy="456.4" r="0.85" fill="#000"/><circle cx="1170.1" cy="456.4" r="0.85" fill="#000"/><circle cx="1126.6" cy="462.5" r="0.85" fill="#000"/><circle cx="1170.4" cy="462.5" r="0.85" fill="#000"/><circle cx="1126.3" cy="468.6" r="0.85" fill="#000"/><circle cx="1170.7" cy="468.6" r="0.85" fill="#000"/><circle cx="1126.0" cy="474.6" r="0.85" fill="#000"/><circle cx="1171.0" cy="474.6" r="0.85" fill="#000"/><circle cx="1125.7" cy="480.7" r="0.85" fill="#000"/><circle cx="1171.3" cy="480.7" r="0.85" fill="#000"/><circle cx="1125.5" cy="486.7" r="0.85" fill="#000"/><circle cx="1171.5" cy="486.7" r="0.85" fill="#000"/><circle cx="1125.2" cy="492.8" r="0.85" fill="#000"/><circle cx="1171.8" cy="492.8" r="0.85" fill="#000"/><circle cx="1124.9" cy="498.8" r="0.85" fill="#000"/><circle cx="1172.1" cy="498.8" r="0.85" fill="#000"/><circle cx="1124.6" cy="504.9" r="0.85" fill="#000"/><circle cx="1172.4" cy="504.9" r="0.85" fill="#000"/><circle cx="1124.3" cy="510.9" r="0.85" fill="#000"/><circle cx="1172.7" cy="510.9" r="0.85" fill="#000"/><circle cx="1124.0" cy="517.0" r="0.85" fill="#000"/><circle cx="1173.0" cy="517.0" r="0.85" fill="#000"/><circle cx="1124.0" cy="517.0" r="0.85" fill="#000"/><circle cx="1173.0" cy="517.0" r="0.85" fill="#000"/><circle cx="1123.3" cy="523.1" r="0.85" fill="#000"/><circle cx="1173.7" cy="523.1" r="0.85" fill="#000"/><circle cx="1122.6" cy="529.1" r="0.85" fill="#000"/><circle cx="1174.4" cy="529.1" r="0.85" fill="#000"/><circle cx="1121.8" cy="535.2" r="0.85" fill="#000"/><circle cx="1175.2" cy="535.2" r="0.85" fill="#000"/><circle cx="1121.1" cy="541.2" r="0.85" fill="#000"/><circle cx="1175.9" cy="541.2" r="0.85" fill="#000"/><circle cx="1120.4" cy="547.3" r="0.85" fill="#000"/><circle cx="1176.6" cy="547.3" r="0.85" fill="#000"/><circle cx="1119.7" cy="553.3" r="0.85" fill="#000"/><circle cx="1177.3" cy="553.3" r="0.85" fill="#000"/><circle cx="1119.0" cy="559.4" r="0.85" fill="#000"/><circle cx="1178.0" cy="559.4" r="0.85" fill="#000"/><circle cx="1118.3" cy="565.4" r="0.85" fill="#000"/><circle cx="1178.7" cy="565.4" r="0.85" fill="#000"/><circle cx="1117.5" cy="571.5" r="0.85" fill="#000"/><circle cx="1179.5" cy="571.5" r="0.85" fill="#000"/><circle cx="1116.8" cy="577.5" r="0.85" fill="#000"/><circle cx="1180.2" cy="577.5" r="0.85" fill="#000"/><circle cx="1116.1" cy="583.6" r="0.85" fill="#000"/><circle cx="1180.9" cy="583.6" r="0.85" fill="#000"/><circle cx="1115.4" cy="589.6" r="0.85" fill="#000"/><circle cx="1181.6" cy="589.6" r="0.85" fill="#000"/><circle cx="1114.7" cy="595.7" r="0.85" fill="#000"/><circle cx="1182.3" cy="595.7" r="0.85" fill="#000"/><circle cx="1114.0" cy="601.7" r="0.85" fill="#000"/><circle cx="1183.0" cy="601.7" r="0.85" fill="#000"/><circle cx="1113.2" cy="607.8" r="0.85" fill="#000"/><circle cx="1183.8" cy="607.8" r="0.85" fill="#000"/><circle cx="1112.5" cy="613.8" r="0.85" fill="#000"/><circle cx="1184.5" cy="613.8" r="0.85" fill="#000"/><circle cx="1111.8" cy="619.9" r="0.85" fill="#000"/><circle cx="1185.2" cy="619.9" r="0.85" fill="#000"/><circle cx="1111.1" cy="625.9" r="0.85" fill="#000"/><circle cx="1185.9" cy="625.9" r="0.85" fill="#000"/><circle cx="1110.4" cy="632.0" r="0.85" fill="#000"/><circle cx="1186.6" cy="632.0" r="0.85" fill="#000"/><circle cx="1109.7" cy="638.0" r="0.85" fill="#000"/><circle cx="1187.3" cy="638.0" r="0.85" fill="#000"/><circle cx="1108.9" cy="644.1" r="0.85" fill="#000"/><circle cx="1188.1" cy="644.1" r="0.85" fill="#000"/><circle cx="1108.2" cy="650.1" r="0.85" fill="#000"/><circle cx="1188.8" cy="650.1" r="0.85" fill="#000"/><circle cx="1107.5" cy="656.2" r="0.85" fill="#000"/><circle cx="1189.5" cy="656.2" r="0.85" fill="#000"/><circle cx="1106.8" cy="662.2" r="0.85" fill="#000"/><circle cx="1190.2" cy="662.2" r="0.85" fill="#000"/><circle cx="1106.1" cy="668.3" r="0.85" fill="#000"/><circle cx="1190.9" cy="668.3" r="0.85" fill="#000"/><circle cx="1105.4" cy="674.3" r="0.85" fill="#000"/><circle cx="1191.6" cy="674.3" r="0.85" fill="#000"/><circle cx="1104.6" cy="680.4" r="0.85" fill="#000"/><circle cx="1192.4" cy="680.4" r="0.85" fill="#000"/><circle cx="1103.9" cy="686.4" r="0.85" fill="#000"/><circle cx="1193.1" cy="686.4" r="0.85" fill="#000"/><circle cx="1103.2" cy="692.5" r="0.85" fill="#000"/><circle cx="1193.8" cy="692.5" r="0.85" fill="#000"/><circle cx="1102.5" cy="698.5" r="0.85" fill="#000"/><circle cx="1194.5" cy="698.5" r="0.85" fill="#000"/><circle cx="1101.8" cy="704.6" r="0.85" fill="#000"/><circle cx="1195.2" cy="704.6" r="0.85" fill="#000"/><circle cx="1101.1" cy="710.6" r="0.85" fill="#000"/><circle cx="1195.9" cy="710.6" r="0.85" fill="#000"/><circle cx="1100.3" cy="716.7" r="0.85" fill="#000"/><circle cx="1196.7" cy="716.7" r="0.85" fill="#000"/><circle cx="1099.6" cy="722.7" r="0.85" fill="#000"/><circle cx="1197.4" cy="722.7" r="0.85" fill="#000"/><circle cx="1098.9" cy="728.8" r="0.85" fill="#000"/><circle cx="1198.1" cy="728.8" r="0.85" fill="#000"/><line x1="1136.2" y1="262.7" x2="1148.5" y2="268.8" stroke="#000" stroke-width="0.9"/><line x1="1160.8" y1="262.7" x2="1148.5" y2="268.8" stroke="#000" stroke-width="0.9"/><line x1="1148.5" y1="268.8" x2="1135.6" y2="274.9" stroke="#000" stroke-width="0.9"/><line x1="1148.5" y1="268.8" x2="1161.4" y2="274.9" stroke="#000" stroke-width="0.9"/><circle cx="1148.5" cy="268.8" r="1.2" fill="#000"/><circle cx="1136.2" cy="262.7" r="1.3" fill="#000"/><circle cx="1160.8" cy="262.7" r="1.3" fill="#000"/><line x1="1135.6" y1="274.9" x2="1148.5" y2="281.0" stroke="#000" stroke-width="0.9"/><line x1="1161.4" y1="274.9" x2="1148.5" y2="281.0" stroke="#000" stroke-width="0.9"/><line x1="1148.5" y1="281.0" x2="1135.0" y2="287.2" stroke="#000" stroke-width="0.9"/><line x1="1148.5" y1="281.0" x2="1162.0" y2="287.2" stroke="#000" stroke-width="0.9"/><circle cx="1148.5" cy="281.0" r="1.2" fill="#000"/><circle cx="1135.6" cy="274.9" r="1.3" fill="#000"/><circle cx="1161.4" cy="274.9" r="1.3" fill="#000"/><line x1="1135.0" y1="287.2" x2="1148.5" y2="293.4" stroke="#000" stroke-width="0.9"/><line x1="1162.0" y1="287.2" x2="1148.5" y2="293.4" stroke="#000" stroke-width="0.9"/><line x1="1148.5" y1="293.4" x2="1134.4" y2="299.6" stroke="#000" stroke-width="0.9"/><line x1="1148.5" y1="293.4" x2="1162.6" y2="299.6" stroke="#000" stroke-width="0.9"/><circle cx="1148.5" cy="293.4" r="1.2" fill="#000"/><circle cx="1135.0" cy="287.2" r="1.3" fill="#000"/><circle cx="1162.0" cy="287.2" r="1.3" fill="#000"/><line x1="1134.4" y1="299.6" x2="1148.5" y2="305.8" stroke="#000" stroke-width="0.9"/><line x1="1162.6" y1="299.6" x2="1148.5" y2="305.8" stroke="#000" stroke-width="0.9"/><line x1="1148.5" y1="305.8" x2="1133.8" y2="312.0" stroke="#000" stroke-width="0.9"/><line x1="1148.5" y1="305.8" x2="1163.2" y2="312.0" stroke="#000" stroke-width="0.9"/><circle cx="1148.5" cy="305.8" r="1.2" fill="#000"/><circle cx="1134.4" cy="299.6" r="1.3" fill="#000"/><circle cx="1162.6" cy="299.6" r="1.3" fill="#000"/><line x1="1133.8" y1="312.0" x2="1148.5" y2="318.2" stroke="#000" stroke-width="0.9"/><line x1="1163.2" y1="312.0" x2="1148.5" y2="318.2" stroke="#000" stroke-width="0.9"/><line x1="1148.5" y1="318.2" x2="1133.2" y2="324.5" stroke="#000" stroke-width="0.9"/><line x1="1148.5" y1="318.2" x2="1163.8" y2="324.5" stroke="#000" stroke-width="0.9"/><circle cx="1148.5" cy="318.2" r="1.2" fill="#000"/><circle cx="1133.8" cy="312.0" r="1.3" fill="#000"/><circle cx="1163.2" cy="312.0" r="1.3" fill="#000"/><line x1="1133.2" y1="324.5" x2="1148.5" y2="330.9" stroke="#000" stroke-width="0.9"/><line x1="1163.8" y1="324.5" x2="1148.5" y2="330.9" stroke="#000" stroke-width="0.9"/><line x1="1148.5" y1="330.9" x2="1132.6" y2="337.2" stroke="#000" stroke-width="0.9"/><line x1="1148.5" y1="330.9" x2="1164.4" y2="337.2" stroke="#000" stroke-width="0.9"/><circle cx="1148.5" cy="330.9" r="1.2" fill="#000"/><circle cx="1133.2" cy="324.5" r="1.3" fill="#000"/><circle cx="1163.8" cy="324.5" r="1.3" fill="#000"/><line x1="1132.6" y1="337.2" x2="1148.5" y2="343.8" stroke="#000" stroke-width="0.9"/><line x1="1164.4" y1="337.2" x2="1148.5" y2="343.8" stroke="#000" stroke-width="0.9"/><line x1="1148.5" y1="343.8" x2="1132.0" y2="350.3" stroke="#000" stroke-width="0.9"/><line x1="1148.5" y1="343.8" x2="1165.0" y2="350.3" stroke="#000" stroke-width="0.9"/><circle cx="1148.5" cy="343.8" r="1.2" fill="#000"/><circle cx="1132.6" cy="337.2" r="1.3" fill="#000"/><circle cx="1164.4" cy="337.2" r="1.3" fill="#000"/><line x1="1132.0" y1="350.3" x2="1148.5" y2="357.7" stroke="#000" stroke-width="0.9"/><line x1="1165.0" y1="350.3" x2="1148.5" y2="357.7" stroke="#000" stroke-width="0.9"/><line x1="1148.5" y1="357.7" x2="1131.3" y2="365.1" stroke="#000" stroke-width="0.9"/><line x1="1148.5" y1="357.7" x2="1165.7" y2="365.1" stroke="#000" stroke-width="0.9"/><circle cx="1148.5" cy="357.7" r="1.2" fill="#000"/><circle cx="1132.0" cy="350.3" r="1.3" fill="#000"/><circle cx="1165.0" cy="350.3" r="1.3" fill="#000"/><line x1="1131.3" y1="365.1" x2="1148.5" y2="373.2" stroke="#000" stroke-width="0.9"/><line x1="1165.7" y1="365.1" x2="1148.5" y2="373.2" stroke="#000" stroke-width="0.9"/><line x1="1148.5" y1="373.2" x2="1130.5" y2="381.4" stroke="#000" stroke-width="0.9"/><line x1="1148.5" y1="373.2" x2="1166.5" y2="381.4" stroke="#000" stroke-width="0.9"/><circle cx="1148.5" cy="373.2" r="1.2" fill="#000"/><circle cx="1131.3" cy="365.1" r="1.3" fill="#000"/><circle cx="1165.7" cy="365.1" r="1.3" fill="#000"/><line x1="1130.5" y1="381.4" x2="1148.5" y2="390.1" stroke="#000" stroke-width="0.9"/><line x1="1166.5" y1="381.4" x2="1148.5" y2="390.1" stroke="#000" stroke-width="0.9"/><line x1="1148.5" y1="390.1" x2="1129.7" y2="398.9" stroke="#000" stroke-width="0.9"/><line x1="1148.5" y1="390.1" x2="1167.3" y2="398.9" stroke="#000" stroke-width="0.9"/><circle cx="1148.5" cy="390.1" r="1.2" fill="#000"/><circle cx="1130.5" cy="381.4" r="1.3" fill="#000"/><circle cx="1166.5" cy="381.4" r="1.3" fill="#000"/><line x1="1129.7" y1="398.9" x2="1148.5" y2="408.4" stroke="#000" stroke-width="0.9"/><line x1="1167.3" y1="398.9" x2="1148.5" y2="408.4" stroke="#000" stroke-width="0.9"/><line x1="1148.5" y1="408.4" x2="1128.8" y2="418.0" stroke="#000" stroke-width="0.9"/><line x1="1148.5" y1="408.4" x2="1168.2" y2="418.0" stroke="#000" stroke-width="0.9"/><circle cx="1148.5" cy="408.4" r="1.2" fill="#000"/><circle cx="1129.7" cy="398.9" r="1.3" fill="#000"/><circle cx="1167.3" cy="398.9" r="1.3" fill="#000"/><line x1="1128.8" y1="418.0" x2="1148.5" y2="428.1" stroke="#000" stroke-width="0.9"/><line x1="1168.2" y1="418.0" x2="1148.5" y2="428.1" stroke="#000" stroke-width="0.9"/><line x1="1148.5" y1="428.1" x2="1127.8" y2="438.1" stroke="#000" stroke-width="0.9"/><line x1="1148.5" y1="428.1" x2="1169.2" y2="438.1" stroke="#000" stroke-width="0.9"/><circle cx="1148.5" cy="428.1" r="1.2" fill="#000"/><circle cx="1128.8" cy="418.0" r="1.3" fill="#000"/><circle cx="1168.2" cy="418.0" r="1.3" fill="#000"/><line x1="1127.8" y1="438.1" x2="1148.5" y2="449.1" stroke="#000" stroke-width="0.9"/><line x1="1169.2" y1="438.1" x2="1148.5" y2="449.1" stroke="#000" stroke-width="0.9"/><line x1="1148.5" y1="449.1" x2="1126.7" y2="460.1" stroke="#000" stroke-width="0.9"/><line x1="1148.5" y1="449.1" x2="1170.3" y2="460.1" stroke="#000" stroke-width="0.9"/><circle cx="1148.5" cy="449.1" r="1.2" fill="#000"/><circle cx="1127.8" cy="438.1" r="1.3" fill="#000"/><circle cx="1169.2" cy="438.1" r="1.3" fill="#000"/><line x1="1126.7" y1="460.1" x2="1148.5" y2="472.0" stroke="#000" stroke-width="0.9"/><line x1="1170.3" y1="460.1" x2="1148.5" y2="472.0" stroke="#000" stroke-width="0.9"/><line x1="1148.5" y1="472.0" x2="1125.6" y2="483.8" stroke="#000" stroke-width="0.9"/><line x1="1148.5" y1="472.0" x2="1171.4" y2="483.8" stroke="#000" stroke-width="0.9"/><circle cx="1148.5" cy="472.0" r="1.2" fill="#000"/><circle cx="1126.7" cy="460.1" r="1.3" fill="#000"/><circle cx="1170.3" cy="460.1" r="1.3" fill="#000"/><line x1="1125.6" y1="483.8" x2="1148.5" y2="500.4" stroke="#000" stroke-width="0.9"/><line x1="1171.4" y1="483.8" x2="1148.5" y2="500.4" stroke="#000" stroke-width="0.9"/><line x1="1148.5" y1="500.4" x2="1124.0" y2="517.0" stroke="#000" stroke-width="0.9"/><line x1="1148.5" y1="500.4" x2="1173.0" y2="517.0" stroke="#000" stroke-width="0.9"/><circle cx="1148.5" cy="500.4" r="1.2" fill="#000"/><circle cx="1125.6" cy="483.8" r="1.3" fill="#000"/><circle cx="1171.4" cy="483.8" r="1.3" fill="#000"/><line x1="1124.0" y1="517.0" x2="1178.2" y2="560.8" stroke="#000" stroke-width="1.0"/><line x1="1173.0" y1="517.0" x2="1118.8" y2="560.8" stroke="#000" stroke-width="1.0"/><circle cx="1148.5" cy="538.6" r="1.1" fill="#000"/><line x1="1121.4" y1="538.5" x2="1175.6" y2="538.5" stroke="#000" stroke-width="1"/><line x1="1122.7" y1="527.5" x2="1137.4" y2="527.5" stroke="#8a8a8a" stroke-width="1"/><line x1="1174.3" y1="527.5" x2="1159.6" y2="527.5" stroke="#8a8a8a" stroke-width="1"/><circle cx="1137.4" cy="527.8" r="1.2" fill="#000"/><circle cx="1159.6" cy="527.8" r="1.2" fill="#000"/><line x1="1137.4" y1="527.8" x2="1121.4" y2="538.6" stroke="#000" stroke-width="0.8"/><line x1="1159.6" y1="527.8" x2="1175.6" y2="538.6" stroke="#000" stroke-width="0.8"/><line x1="1120.1" y1="549.5" x2="1132.5" y2="549.5" stroke="#111" stroke-width="1"/><line x1="1176.9" y1="549.5" x2="1164.5" y2="549.5" stroke="#111" stroke-width="1"/><circle cx="1132.5" cy="549.7" r="1.2" fill="#000"/><circle cx="1164.5" cy="549.7" r="1.2" fill="#000"/><line x1="1132.5" y1="549.7" x2="1121.4" y2="538.6" stroke="#000" stroke-width="0.8"/><line x1="1164.5" y1="549.7" x2="1175.6" y2="538.6" stroke="#000" stroke-width="0.8"/><circle cx="1124.0" cy="517.0" r="1.1" fill="#000"/><circle cx="1173.0" cy="517.0" r="1.1" fill="#000"/><line x1="1118.8" y1="560.8" x2="1183.7" y2="607.4" stroke="#000" stroke-width="1.0"/><line x1="1178.2" y1="560.8" x2="1113.3" y2="607.4" stroke="#000" stroke-width="1.0"/><circle cx="1148.5" cy="581.4" r="1.1" fill="#000"/><line x1="1116.4" y1="581.5" x2="1180.6" y2="581.5" stroke="#8a8a8a" stroke-width="1"/><line x1="1117.6" y1="571.5" x2="1133.2" y2="571.5" stroke="#8a8a8a" stroke-width="1"/><line x1="1179.4" y1="571.5" x2="1163.8" y2="571.5" stroke="#8a8a8a" stroke-width="1"/><circle cx="1133.2" cy="571.1" r="1.2" fill="#000"/><circle cx="1163.8" cy="571.1" r="1.2" fill="#000"/><line x1="1133.2" y1="571.1" x2="1116.4" y2="581.4" stroke="#000" stroke-width="0.8"/><line x1="1163.8" y1="571.1" x2="1180.6" y2="581.4" stroke="#000" stroke-width="0.8"/><line x1="1114.8" y1="594.5" x2="1131.4" y2="594.5" stroke="#111" stroke-width="1"/><line x1="1182.2" y1="594.5" x2="1165.6" y2="594.5" stroke="#111" stroke-width="1"/><circle cx="1131.4" cy="594.4" r="1.2" fill="#000"/><circle cx="1165.6" cy="594.4" r="1.2" fill="#000"/><line x1="1131.4" y1="594.4" x2="1116.4" y2="581.4" stroke="#000" stroke-width="0.8"/><line x1="1165.6" y1="594.4" x2="1180.6" y2="581.4" stroke="#000" stroke-width="0.8"/><circle cx="1118.8" cy="560.8" r="1.1" fill="#000"/><circle cx="1178.2" cy="560.8" r="1.1" fill="#000"/><line x1="1113.3" y1="607.4" x2="1189.7" y2="658.0" stroke="#000" stroke-width="1.0"/><line x1="1183.7" y1="607.4" x2="1107.3" y2="658.0" stroke="#000" stroke-width="1.0"/><circle cx="1148.5" cy="632.7" r="1.1" fill="#000"/><line x1="1110.3" y1="632.5" x2="1186.7" y2="632.5" stroke="#8a8a8a" stroke-width="1"/><line x1="1111.8" y1="620.5" x2="1132.4" y2="620.5" stroke="#8a8a8a" stroke-width="1"/><line x1="1185.2" y1="620.5" x2="1164.6" y2="620.5" stroke="#8a8a8a" stroke-width="1"/><circle cx="1132.4" cy="620.0" r="1.2" fill="#000"/><circle cx="1164.6" cy="620.0" r="1.2" fill="#000"/><line x1="1132.4" y1="620.0" x2="1110.3" y2="632.7" stroke="#000" stroke-width="0.8"/><line x1="1164.6" y1="620.0" x2="1186.7" y2="632.7" stroke="#000" stroke-width="0.8"/><line x1="1108.8" y1="645.5" x2="1126.4" y2="645.5" stroke="#111" stroke-width="1"/><line x1="1188.2" y1="645.5" x2="1170.6" y2="645.5" stroke="#111" stroke-width="1"/><circle cx="1126.4" cy="645.4" r="1.2" fill="#000"/><circle cx="1170.6" cy="645.4" r="1.2" fill="#000"/><line x1="1126.4" y1="645.4" x2="1110.3" y2="632.7" stroke="#000" stroke-width="0.8"/><line x1="1170.6" y1="645.4" x2="1186.7" y2="632.7" stroke="#000" stroke-width="0.8"/><circle cx="1113.3" cy="607.4" r="1.1" fill="#000"/><circle cx="1183.7" cy="607.4" r="1.1" fill="#000"/><line x1="1107.3" y1="658.0" x2="1198.1" y2="728.8" stroke="#000" stroke-width="1.0"/><line x1="1189.7" y1="658.0" x2="1098.9" y2="728.8" stroke="#000" stroke-width="1.0"/><circle cx="1148.5" cy="693.0" r="1.1" fill="#000"/><line x1="1103.1" y1="693.5" x2="1193.9" y2="693.5" stroke="#000" stroke-width="1"/><line x1="1105.2" y1="675.5" x2="1129.7" y2="675.5" stroke="#8a8a8a" stroke-width="1"/><line x1="1191.8" y1="675.5" x2="1167.3" y2="675.5" stroke="#8a8a8a" stroke-width="1"/><circle cx="1129.7" cy="675.5" r="1.2" fill="#000"/><circle cx="1167.3" cy="675.5" r="1.2" fill="#000"/><line x1="1129.7" y1="675.5" x2="1103.1" y2="693.0" stroke="#000" stroke-width="0.8"/><line x1="1167.3" y1="675.5" x2="1193.9" y2="693.0" stroke="#000" stroke-width="0.8"/><line x1="1101.0" y1="710.5" x2="1121.9" y2="710.5" stroke="#111" stroke-width="1"/><line x1="1196.0" y1="710.5" x2="1175.1" y2="710.5" stroke="#111" stroke-width="1"/><circle cx="1121.9" cy="710.9" r="1.2" fill="#000"/><circle cx="1175.1" cy="710.9" r="1.2" fill="#000"/><line x1="1121.9" y1="710.9" x2="1103.1" y2="693.0" stroke="#000" stroke-width="0.8"/><line x1="1175.1" y1="710.9" x2="1193.9" y2="693.0" stroke="#000" stroke-width="0.8"/><circle cx="1107.3" cy="658.0" r="1.1" fill="#000"/><circle cx="1189.7" cy="658.0" r="1.1" fill="#000"/><circle cx="1098.9" cy="728.8" r="1.1" fill="#000"/><circle cx="1198.1" cy="728.8" r="1.1" fill="#000"/><polyline points="1137.7,257.2 1137.7,251.6 1141.0,241.3" fill="none" stroke="#000" stroke-width="1.0"/><polyline points="1160.7,257.2 1160.7,251.6 1157.5,241.3" fill="none" stroke="#000" stroke-width="1.0"/><line x1="1137.0" y1="257.5" x2="1161.0" y2="257.5" stroke="#000" stroke-width="1"/><line x1="1141.0" y1="241.3" x2="1160.7" y2="251.6" stroke="#000" stroke-width="0.8"/><line x1="1157.5" y1="241.3" x2="1137.7" y2="251.6" stroke="#000" stroke-width="0.8"/><line x1="1137.7" y1="251.6" x2="1148.5" y2="257.2" stroke="#000" stroke-width="0.8"/><line x1="1160.7" y1="251.6" x2="1148.5" y2="257.2" stroke="#000" stroke-width="0.8"/><line x1="1141.0" y1="241.5" x2="1157.5" y2="241.5" stroke="#999" stroke-width="1"/><line x1="1136.0" y1="251.5" x2="1162.0" y2="251.5" stroke="#999" stroke-width="1"/><circle cx="1148.5" cy="251.6" r="1.3" fill="#000"/><line x1="1137.7" y1="257.2" x2="1148.5" y2="262.7" stroke="#000" stroke-width="0.8"/><line x1="1160.7" y1="257.2" x2="1148.5" y2="262.7" stroke="#000" stroke-width="0.8"/><line x1="1133.5" y1="318.5" x2="1163.5" y2="318.5" stroke="#000" stroke-width="1"/><line x1="1135.3" y1="281.5" x2="1161.7" y2="281.5" stroke="#999" stroke-width="1"/><line x1="1132.3" y1="343.5" x2="1164.7" y2="343.5" stroke="#999" stroke-width="1"/><line x1="1124.0" y1="517.0" x2="1173.0" y2="517.0" stroke="#999" stroke-width="2"/><line x1="1099.0" y1="739.5" x2="1198.0" y2="739.5" stroke="#000" stroke-width="1"/><line x1="1099.5" y1="735.0" x2="1099.5" y2="743.0" stroke="#000" stroke-width="1"/><line x1="1198.5" y1="735.0" x2="1198.5" y2="743.0" stroke="#000" stroke-width="1"/><line x1="1066.0" y1="244.0" x2="1066.0" y2="729.0" stroke="#9a9a9a" stroke-width="2"/><line x1="1061.0" y1="244.5" x2="1071.0" y2="244.5" stroke="#000" stroke-width="1"/><line x1="1061.0" y1="257.5" x2="1071.0" y2="257.5" stroke="#000" stroke-width="1"/><line x1="1061.0" y1="519.5" x2="1071.0" y2="519.5" stroke="#000" stroke-width="1"/><line x1="1061.0" y1="729.5" x2="1071.0" y2="729.5" stroke="#000" stroke-width="1"/><line x1="1216.5" y1="244.0" x2="1216.5" y2="729.0" stroke="#000" stroke-width="1"/><line x1="1224.0" y1="244.0" x2="1224.0" y2="729.0" stroke="#b5b5b5" stroke-width="2"/><line x1="1212.0" y1="244.0" x2="1221.0" y2="244.0" stroke="#000" stroke-width="2"/><circle cx="1216.6" cy="244.0" r="1.4" fill="#000"/><line x1="1212.0" y1="257.0" x2="1221.0" y2="257.0" stroke="#000" stroke-width="2"/><circle cx="1216.6" cy="257.0" r="1.4" fill="#000"/><line x1="1212.0" y1="262.0" x2="1221.0" y2="262.0" stroke="#000" stroke-width="2"/><circle cx="1216.6" cy="262.0" r="1.4" fill="#000"/><line x1="1212.0" y1="275.0" x2="1221.0" y2="275.0" stroke="#000" stroke-width="2"/><circle cx="1216.6" cy="275.0" r="1.4" fill="#000"/><line x1="1212.0" y1="290.0" x2="1221.0" y2="290.0" stroke="#000" stroke-width="2"/><circle cx="1216.6" cy="290.0" r="1.4" fill="#000"/><line x1="1212.0" y1="296.0" x2="1221.0" y2="296.0" stroke="#000" stroke-width="2"/><circle cx="1216.6" cy="296.0" r="1.4" fill="#000"/><line x1="1212.0" y1="306.0" x2="1221.0" y2="306.0" stroke="#000" stroke-width="2"/><circle cx="1216.6" cy="306.0" r="1.4" fill="#000"/><line x1="1212.0" y1="318.0" x2="1221.0" y2="318.0" stroke="#000" stroke-width="2"/><circle cx="1216.6" cy="318.0" r="1.4" fill="#000"/><line x1="1212.0" y1="331.0" x2="1221.0" y2="331.0" stroke="#000" stroke-width="2"/><circle cx="1216.6" cy="331.0" r="1.4" fill="#000"/><line x1="1212.0" y1="343.0" x2="1221.0" y2="343.0" stroke="#000" stroke-width="2"/><circle cx="1216.6" cy="343.0" r="1.4" fill="#000"/><line x1="1212.0" y1="357.0" x2="1221.0" y2="357.0" stroke="#000" stroke-width="2"/><circle cx="1216.6" cy="357.0" r="1.4" fill="#000"/><line x1="1212.0" y1="372.0" x2="1221.0" y2="372.0" stroke="#000" stroke-width="2"/><circle cx="1216.6" cy="372.0" r="1.4" fill="#000"/><line x1="1212.0" y1="390.0" x2="1221.0" y2="390.0" stroke="#000" stroke-width="2"/><circle cx="1216.6" cy="390.0" r="1.4" fill="#000"/><line x1="1212.0" y1="408.0" x2="1221.0" y2="408.0" stroke="#000" stroke-width="2"/><circle cx="1216.6" cy="408.0" r="1.4" fill="#000"/><line x1="1212.0" y1="428.0" x2="1221.0" y2="428.0" stroke="#000" stroke-width="2"/><circle cx="1216.6" cy="428.0" r="1.4" fill="#000"/><line x1="1212.0" y1="448.0" x2="1221.0" y2="448.0" stroke="#000" stroke-width="2"/><circle cx="1216.6" cy="448.0" r="1.4" fill="#000"/><line x1="1212.0" y1="470.0" x2="1221.0" y2="470.0" stroke="#000" stroke-width="2"/><circle cx="1216.6" cy="470.0" r="1.4" fill="#000"/><line x1="1212.0" y1="495.0" x2="1221.0" y2="495.0" stroke="#000" stroke-width="2"/><circle cx="1216.6" cy="495.0" r="1.4" fill="#000"/><line x1="1212.0" y1="517.0" x2="1221.0" y2="517.0" stroke="#000" stroke-width="2"/><circle cx="1216.6" cy="517.0" r="1.4" fill="#000"/><line x1="1212.0" y1="538.0" x2="1221.0" y2="538.0" stroke="#000" stroke-width="2"/><circle cx="1216.6" cy="538.0" r="1.4" fill="#000"/><line x1="1212.0" y1="560.0" x2="1221.0" y2="560.0" stroke="#000" stroke-width="2"/><circle cx="1216.6" cy="560.0" r="1.4" fill="#000"/><line x1="1212.0" y1="581.0" x2="1221.0" y2="581.0" stroke="#000" stroke-width="2"/><circle cx="1216.6" cy="581.0" r="1.4" fill="#000"/><line x1="1212.0" y1="607.0" x2="1221.0" y2="607.0" stroke="#000" stroke-width="2"/><circle cx="1216.6" cy="607.0" r="1.4" fill="#000"/><line x1="1212.0" y1="632.0" x2="1221.0" y2="632.0" stroke="#000" stroke-width="2"/><circle cx="1216.6" cy="632.0" r="1.4" fill="#000"/><line x1="1212.0" y1="658.0" x2="1221.0" y2="658.0" stroke="#000" stroke-width="2"/><circle cx="1216.6" cy="658.0" r="1.4" fill="#000"/><line x1="1212.0" y1="693.0" x2="1221.0" y2="693.0" stroke="#000" stroke-width="2"/><circle cx="1216.6" cy="693.0" r="1.4" fill="#000"/><line x1="1212.0" y1="725.0" x2="1221.0" y2="725.0" stroke="#000" stroke-width="2"/><circle cx="1216.6" cy="725.0" r="1.4" fill="#000"/><line x1="1212.0" y1="257.0" x2="1228.0" y2="257.0" stroke="#000" stroke-width="2"/><circle cx="1224.0" cy="257.0" r="1.2" fill="#000"/><line x1="1212.0" y1="296.0" x2="1228.0" y2="296.0" stroke="#000" stroke-width="2"/><circle cx="1224.0" cy="296.0" r="1.2" fill="#000"/><line x1="1212.0" y1="306.0" x2="1228.0" y2="306.0" stroke="#000" stroke-width="2"/><circle cx="1224.0" cy="306.0" r="1.2" fill="#000"/><line x1="1212.0" y1="318.0" x2="1228.0" y2="318.0" stroke="#000" stroke-width="2"/><circle cx="1224.0" cy="318.0" r="1.2" fill="#000"/><line x1="1212.0" y1="331.0" x2="1228.0" y2="331.0" stroke="#000" stroke-width="2"/><circle cx="1224.0" cy="331.0" r="1.2" fill="#000"/><line x1="1212.0" y1="343.0" x2="1228.0" y2="343.0" stroke="#000" stroke-width="2"/><circle cx="1224.0" cy="343.0" r="1.2" fill="#000"/><line x1="1212.0" y1="517.0" x2="1228.0" y2="517.0" stroke="#000" stroke-width="2"/><circle cx="1224.0" cy="517.0" r="1.2" fill="#000"/><line x1="1212.0" y1="560.0" x2="1228.0" y2="560.0" stroke="#000" stroke-width="2"/><circle cx="1224.0" cy="560.0" r="1.2" fill="#000"/><line x1="1212.0" y1="581.0" x2="1228.0" y2="581.0" stroke="#000" stroke-width="2"/><circle cx="1224.0" cy="581.0" r="1.2" fill="#000"/><line x1="1212.0" y1="607.0" x2="1228.0" y2="607.0" stroke="#000" stroke-width="2"/><circle cx="1224.0" cy="607.0" r="1.2" fill="#000"/><line x1="1212.0" y1="693.0" x2="1228.0" y2="693.0" stroke="#000" stroke-width="2"/><circle cx="1224.0" cy="693.0" r="1.2" fill="#000"/><line x1="1212.0" y1="725.0" x2="1228.0" y2="725.0" stroke="#000" stroke-width="2"/><circle cx="1224.0" cy="725.0" r="1.2" fill="#000"/><line x1="1212.0" y1="729.0" x2="1228.0" y2="729.0" stroke="#000" stroke-width="2"/><circle cx="1224.0" cy="729.0" r="1.2" fill="#000"/><text x="1289.0" y="195.0" font-size="5.2" fill="#333" text-anchor="middle" font-family="Liberation Serif, serif" font-style="italic">Traverse 2  Vorne</text><line x1="1270.0" y1="196.5" x2="1308.0" y2="196.5" stroke="#111" stroke-width="1"/><line x1="1262.0" y1="217.5" x2="1325.0" y2="217.5" stroke="#444" stroke-width="1"/><line x1="1262.5" y1="213.2" x2="1262.5" y2="221.2" stroke="#000" stroke-width="1"/><line x1="1325.5" y1="213.2" x2="1325.5" y2="221.2" stroke="#000" stroke-width="1"/><line x1="1322.5" y1="213.2" x2="1322.5" y2="221.2" stroke="#000" stroke-width="1"/><line x1="1327.5" y1="213.2" x2="1327.5" y2="221.2" stroke="#000" stroke-width="1"/><line x1="1330.5" y1="226.5" x2="1330.5" y2="254.7" stroke="#333" stroke-width="1"/><line x1="1327.0" y1="226.5" x2="1334.0" y2="226.5" stroke="#000" stroke-width="1"/><line x1="1327.0" y1="254.5" x2="1334.0" y2="254.5" stroke="#000" stroke-width="1"/><polyline points="1252.8,254.7 1274.7,254.7 1327.4,226.5" fill="none" stroke="#000" stroke-width="1.3"/><polyline points="1252.8,254.7 1263.9,243.6 1327.4,226.5" fill="none" stroke="#000" stroke-width="1.2"/><line x1="1263.9" y1="243.6" x2="1274.7" y2="254.7" stroke="#000" stroke-width="1.0"/><line x1="1256.0" y1="251.0" x2="1263.9" y2="247.5" stroke="#000" stroke-width="0.9"/><line x1="1263.9" y1="247.5" x2="1272.0" y2="251.0" stroke="#000" stroke-width="0.9"/><line x1="1256.0" y1="251.5" x2="1272.0" y2="251.5" stroke="#000" stroke-width="1"/><circle cx="1252.8" cy="254.7" r="1.2" fill="#000"/><circle cx="1263.9" cy="243.6" r="1.2" fill="#000"/><circle cx="1274.7" cy="254.7" r="1.2" fill="#000"/><circle cx="1263.9" cy="247.5" r="1.2" fill="#000"/><circle cx="1263.9" cy="254.7" r="1.2" fill="#000"/><circle cx="1327.4" cy="226.5" r="1.2" fill="#000"/><line x1="1274.7" y1="254.7" x2="1269.3" y2="242.1" stroke="#000" stroke-width="0.9"/><line x1="1269.3" y1="242.1" x2="1282.2" y2="250.7" stroke="#000" stroke-width="0.9"/><circle cx="1269.3" cy="242.1" r="1.1" fill="#000"/><circle cx="1282.2" cy="250.7" r="1.1" fill="#000"/><line x1="1282.2" y1="250.7" x2="1278.4" y2="239.7" stroke="#000" stroke-width="0.9"/><line x1="1278.4" y1="239.7" x2="1289.8" y2="246.6" stroke="#000" stroke-width="0.9"/><circle cx="1278.4" cy="239.7" r="1.1" fill="#000"/><circle cx="1289.8" cy="246.6" r="1.1" fill="#000"/><line x1="1289.8" y1="246.6" x2="1287.5" y2="237.2" stroke="#000" stroke-width="0.9"/><line x1="1287.5" y1="237.2" x2="1297.3" y2="242.6" stroke="#000" stroke-width="0.9"/><circle cx="1287.5" cy="237.2" r="1.1" fill="#000"/><circle cx="1297.3" cy="242.6" r="1.1" fill="#000"/><line x1="1297.3" y1="242.6" x2="1296.6" y2="234.8" stroke="#000" stroke-width="0.9"/><line x1="1296.6" y1="234.8" x2="1304.8" y2="238.6" stroke="#000" stroke-width="0.9"/><circle cx="1296.6" cy="234.8" r="1.1" fill="#000"/><circle cx="1304.8" cy="238.6" r="1.1" fill="#000"/><line x1="1304.8" y1="238.6" x2="1305.6" y2="232.4" stroke="#000" stroke-width="0.9"/><line x1="1305.6" y1="232.4" x2="1312.3" y2="234.6" stroke="#000" stroke-width="0.9"/><circle cx="1305.6" cy="232.4" r="1.1" fill="#000"/><circle cx="1312.3" cy="234.6" r="1.1" fill="#000"/><line x1="1312.3" y1="234.6" x2="1314.7" y2="229.9" stroke="#000" stroke-width="0.9"/><line x1="1314.7" y1="229.9" x2="1319.9" y2="230.5" stroke="#000" stroke-width="0.9"/><circle cx="1314.7" cy="229.9" r="1.1" fill="#000"/><circle cx="1319.9" cy="230.5" r="1.1" fill="#000"/><line x1="1319.9" y1="230.5" x2="1323.8" y2="227.5" stroke="#000" stroke-width="0.9"/><line x1="1323.8" y1="227.5" x2="1327.4" y2="226.5" stroke="#000" stroke-width="0.9"/><circle cx="1323.8" cy="227.5" r="1.1" fill="#000"/><circle cx="1327.4" cy="226.5" r="1.1" fill="#000"/><line x1="1252.0" y1="273.5" x2="1327.0" y2="273.5" stroke="#555" stroke-width="1"/><line x1="1253.5" y1="269.5" x2="1253.5" y2="277.0" stroke="#000" stroke-width="1"/><circle cx="1253.0" cy="273.2" r="1.1" fill="#000"/><line x1="1274.5" y1="269.5" x2="1274.5" y2="277.0" stroke="#000" stroke-width="1"/><circle cx="1274.7" cy="273.2" r="1.1" fill="#000"/><line x1="1280.5" y1="269.5" x2="1280.5" y2="277.0" stroke="#000" stroke-width="1"/><circle cx="1280.0" cy="273.2" r="1.1" fill="#000"/><line x1="1287.5" y1="269.5" x2="1287.5" y2="277.0" stroke="#000" stroke-width="1"/><circle cx="1287.5" cy="273.2" r="1.1" fill="#000"/><line x1="1294.5" y1="269.5" x2="1294.5" y2="277.0" stroke="#000" stroke-width="1"/><circle cx="1294.0" cy="273.2" r="1.1" fill="#000"/><line x1="1300.5" y1="269.5" x2="1300.5" y2="277.0" stroke="#000" stroke-width="1"/><circle cx="1300.0" cy="273.2" r="1.1" fill="#000"/><line x1="1305.5" y1="269.5" x2="1305.5" y2="277.0" stroke="#000" stroke-width="1"/><circle cx="1305.7" cy="273.2" r="1.1" fill="#000"/><line x1="1310.5" y1="269.5" x2="1310.5" y2="277.0" stroke="#000" stroke-width="1"/><circle cx="1310.5" cy="273.2" r="1.1" fill="#000"/><line x1="1314.5" y1="269.5" x2="1314.5" y2="277.0" stroke="#000" stroke-width="1"/><circle cx="1314.5" cy="273.2" r="1.1" fill="#000"/><line x1="1318.5" y1="269.5" x2="1318.5" y2="277.0" stroke="#000" stroke-width="1"/><circle cx="1318.0" cy="273.2" r="1.1" fill="#000"/><line x1="1321.5" y1="269.5" x2="1321.5" y2="277.0" stroke="#000" stroke-width="1"/><circle cx="1321.0" cy="273.2" r="1.1" fill="#000"/><line x1="1323.5" y1="269.5" x2="1323.5" y2="277.0" stroke="#000" stroke-width="1"/><circle cx="1323.5" cy="273.2" r="1.1" fill="#000"/><line x1="1325.5" y1="269.5" x2="1325.5" y2="277.0" stroke="#000" stroke-width="1"/><circle cx="1325.5" cy="273.2" r="1.1" fill="#000"/><text x="1293.0" y="282.0" font-size="5.2" fill="#333" text-anchor="middle" font-family="Liberation Serif, serif" font-style="italic">Traverse 2  Unten</text><line x1="1274.0" y1="283.5" x2="1312.0" y2="283.5" stroke="#111" stroke-width="1"/><line x1="1253.0" y1="314.5" x2="1275.0" y2="314.5" stroke="#000" stroke-width="1"/><line x1="1253.0" y1="337.5" x2="1275.0" y2="337.5" stroke="#555" stroke-width="1"/><line x1="1253.5" y1="302.0" x2="1253.5" y2="348.8" stroke="#000" stroke-width="1"/><line x1="1275.5" y1="292.0" x2="1275.5" y2="348.8" stroke="#000" stroke-width="1"/><polygon points="1264.0,314.0 1275.0,325.5 1264.0,337.0 1253.0,325.5" fill="none" stroke="#000" stroke-width="0.9"/><line x1="1264.5" y1="314.0" x2="1264.5" y2="337.0" stroke="#333" stroke-width="1"/><circle cx="1264.0" cy="314.0" r="1.2" fill="#000"/><circle cx="1275.0" cy="325.5" r="1.2" fill="#000"/><circle cx="1264.0" cy="337.0" r="1.2" fill="#000"/><circle cx="1253.0" cy="325.5" r="1.2" fill="#000"/><circle cx="1253.0" cy="314.0" r="1.2" fill="#000"/><circle cx="1275.0" cy="314.0" r="1.2" fill="#000"/><circle cx="1253.0" cy="337.0" r="1.2" fill="#000"/><circle cx="1275.0" cy="337.0" r="1.2" fill="#000"/><line x1="1275.0" y1="314.0" x2="1336.0" y2="322.0" stroke="#000" stroke-width="1.2"/><line x1="1275.0" y1="337.0" x2="1336.0" y2="329.0" stroke="#000" stroke-width="1.2"/><line x1="1275.0" y1="314.0" x2="1284.0" y2="335.8" stroke="#000" stroke-width="0.9"/><line x1="1275.0" y1="337.0" x2="1284.0" y2="315.2" stroke="#000" stroke-width="0.9"/><circle cx="1279.5" cy="325.5" r="1.3" fill="#000"/><circle cx="1284.0" cy="315.2" r="1.1" fill="#000"/><circle cx="1284.0" cy="335.8" r="1.1" fill="#000"/><line x1="1283.5" y1="315.2" x2="1283.5" y2="335.8" stroke="#aaa" stroke-width="1"/><line x1="1284.0" y1="315.2" x2="1292.6" y2="334.7" stroke="#000" stroke-width="0.9"/><line x1="1284.0" y1="335.8" x2="1292.6" y2="316.3" stroke="#000" stroke-width="0.9"/><circle cx="1288.3" cy="325.5" r="1.3" fill="#000"/><circle cx="1292.6" cy="316.3" r="1.1" fill="#000"/><circle cx="1292.6" cy="334.7" r="1.1" fill="#000"/><line x1="1292.5" y1="316.3" x2="1292.5" y2="334.7" stroke="#aaa" stroke-width="1"/><line x1="1292.6" y1="316.3" x2="1300.7" y2="333.6" stroke="#000" stroke-width="0.9"/><line x1="1292.6" y1="334.7" x2="1300.7" y2="317.4" stroke="#000" stroke-width="0.9"/><circle cx="1296.6" cy="325.5" r="1.3" fill="#000"/><circle cx="1300.7" cy="317.4" r="1.1" fill="#000"/><circle cx="1300.7" cy="333.6" r="1.1" fill="#000"/><line x1="1300.5" y1="317.4" x2="1300.5" y2="333.6" stroke="#aaa" stroke-width="1"/><line x1="1300.7" y1="317.4" x2="1308.4" y2="332.6" stroke="#000" stroke-width="0.9"/><line x1="1300.7" y1="333.6" x2="1308.4" y2="318.4" stroke="#000" stroke-width="0.9"/><circle cx="1304.6" cy="325.5" r="1.3" fill="#000"/><circle cx="1308.4" cy="318.4" r="1.1" fill="#000"/><circle cx="1308.4" cy="332.6" r="1.1" fill="#000"/><line x1="1308.5" y1="318.4" x2="1308.5" y2="332.6" stroke="#aaa" stroke-width="1"/><line x1="1308.4" y1="318.4" x2="1315.6" y2="331.7" stroke="#000" stroke-width="0.9"/><line x1="1308.4" y1="332.6" x2="1315.6" y2="319.3" stroke="#000" stroke-width="0.9"/><circle cx="1312.0" cy="325.5" r="1.3" fill="#000"/><circle cx="1315.6" cy="319.3" r="1.1" fill="#000"/><circle cx="1315.6" cy="331.7" r="1.1" fill="#000"/><line x1="1315.5" y1="319.3" x2="1315.5" y2="331.7" stroke="#aaa" stroke-width="1"/><line x1="1315.6" y1="319.3" x2="1322.2" y2="330.8" stroke="#000" stroke-width="0.9"/><line x1="1315.6" y1="331.7" x2="1322.2" y2="320.2" stroke="#000" stroke-width="0.9"/><circle cx="1318.9" cy="325.5" r="1.3" fill="#000"/><circle cx="1322.2" cy="320.2" r="1.1" fill="#000"/><circle cx="1322.2" cy="330.8" r="1.1" fill="#000"/><line x1="1322.5" y1="320.2" x2="1322.5" y2="330.8" stroke="#aaa" stroke-width="1"/><line x1="1322.2" y1="320.2" x2="1328.0" y2="330.1" stroke="#000" stroke-width="0.9"/><line x1="1322.2" y1="330.8" x2="1328.0" y2="320.9" stroke="#000" stroke-width="0.9"/><circle cx="1325.1" cy="325.5" r="1.3" fill="#000"/><circle cx="1328.0" cy="320.9" r="1.1" fill="#000"/><circle cx="1328.0" cy="330.1" r="1.1" fill="#000"/><line x1="1327.5" y1="320.9" x2="1327.5" y2="330.1" stroke="#aaa" stroke-width="1"/><line x1="1328.0" y1="320.9" x2="1332.9" y2="329.4" stroke="#000" stroke-width="0.9"/><line x1="1328.0" y1="330.1" x2="1332.9" y2="321.6" stroke="#000" stroke-width="0.9"/><circle cx="1330.4" cy="325.5" r="1.3" fill="#000"/><circle cx="1332.9" cy="321.6" r="1.1" fill="#000"/><circle cx="1332.9" cy="329.4" r="1.1" fill="#000"/><line x1="1332.5" y1="321.6" x2="1332.5" y2="329.4" stroke="#aaa" stroke-width="1"/><line x1="1332.9" y1="321.6" x2="1336.0" y2="329.0" stroke="#000" stroke-width="0.9"/><line x1="1332.9" y1="329.4" x2="1336.0" y2="322.0" stroke="#000" stroke-width="0.9"/><circle cx="1334.4" cy="325.5" r="1.3" fill="#000"/><circle cx="1336.0" cy="322.0" r="1.1" fill="#000"/><circle cx="1336.0" cy="329.0" r="1.1" fill="#000"/><line x1="1336.5" y1="322.0" x2="1336.5" y2="329.0" stroke="#aaa" stroke-width="1"/><line x1="1340.5" y1="321.0" x2="1340.5" y2="330.0" stroke="#000" stroke-width="1"/><line x1="1336.0" y1="322.5" x2="1342.0" y2="322.5" stroke="#000" stroke-width="1"/><line x1="1336.0" y1="329.5" x2="1342.0" y2="329.5" stroke="#000" stroke-width="1"/><line x1="1273.0" y1="295.5" x2="1338.0" y2="295.5" stroke="#000" stroke-width="1"/><line x1="1275.5" y1="293.0" x2="1275.5" y2="304.0" stroke="#000" stroke-width="1"/><circle cx="1275.0" cy="295.0" r="1.2" fill="#000"/><line x1="1336.5" y1="293.0" x2="1336.5" y2="304.0" stroke="#000" stroke-width="1"/><circle cx="1336.0" cy="295.0" r="1.2" fill="#000"/><line x1="1251.0" y1="305.0" x2="1338.0" y2="305.0" stroke="#999" stroke-width="2"/><line x1="1253.5" y1="303.0" x2="1253.5" y2="313.5" stroke="#000" stroke-width="1"/><circle cx="1253.0" cy="305.0" r="1.2" fill="#000"/><line x1="1290.5" y1="303.0" x2="1290.5" y2="313.5" stroke="#000" stroke-width="1"/><circle cx="1290.0" cy="305.0" r="1.2" fill="#000"/><line x1="1318.5" y1="303.0" x2="1318.5" y2="313.5" stroke="#000" stroke-width="1"/><circle cx="1318.0" cy="305.0" r="1.2" fill="#000"/><line x1="1334.5" y1="303.0" x2="1334.5" y2="313.5" stroke="#000" stroke-width="1"/><circle cx="1334.0" cy="305.0" r="1.2" fill="#000"/><line x1="1251.0" y1="346.5" x2="1338.0" y2="346.5" stroke="#333" stroke-width="1"/><line x1="1281.5" y1="336.7" x2="1281.5" y2="348.8" stroke="#000" stroke-width="1"/><circle cx="1281.0" cy="346.8" r="1.2" fill="#000"/><line x1="1287.5" y1="335.9" x2="1287.5" y2="348.8" stroke="#000" stroke-width="1"/><circle cx="1287.0" cy="346.8" r="1.2" fill="#000"/><line x1="1293.5" y1="335.1" x2="1293.5" y2="348.8" stroke="#000" stroke-width="1"/><circle cx="1293.0" cy="346.8" r="1.2" fill="#000"/><line x1="1298.5" y1="334.5" x2="1298.5" y2="348.8" stroke="#000" stroke-width="1"/><circle cx="1298.0" cy="346.8" r="1.2" fill="#000"/><line x1="1303.5" y1="333.8" x2="1303.5" y2="348.8" stroke="#000" stroke-width="1"/><circle cx="1303.0" cy="346.8" r="1.2" fill="#000"/><line x1="1308.5" y1="333.2" x2="1308.5" y2="348.8" stroke="#000" stroke-width="1"/><circle cx="1308.0" cy="346.8" r="1.2" fill="#000"/><line x1="1312.5" y1="332.6" x2="1312.5" y2="348.8" stroke="#000" stroke-width="1"/><circle cx="1312.0" cy="346.8" r="1.2" fill="#000"/><line x1="1316.5" y1="332.1" x2="1316.5" y2="348.8" stroke="#000" stroke-width="1"/><circle cx="1316.0" cy="346.8" r="1.2" fill="#000"/><line x1="1320.5" y1="331.6" x2="1320.5" y2="348.8" stroke="#000" stroke-width="1"/><circle cx="1320.0" cy="346.8" r="1.2" fill="#000"/><line x1="1324.5" y1="331.1" x2="1324.5" y2="348.8" stroke="#000" stroke-width="1"/><circle cx="1324.0" cy="346.8" r="1.2" fill="#000"/><line x1="1328.5" y1="330.5" x2="1328.5" y2="348.8" stroke="#000" stroke-width="1"/><circle cx="1328.0" cy="346.8" r="1.2" fill="#000"/><line x1="1332.5" y1="330.0" x2="1332.5" y2="348.8" stroke="#000" stroke-width="1"/><circle cx="1332.0" cy="346.8" r="1.2" fill="#000"/><line x1="1335.5" y1="329.6" x2="1335.5" y2="348.8" stroke="#000" stroke-width="1"/><circle cx="1335.0" cy="346.8" r="1.2" fill="#000"/><circle cx="1253.0" cy="346.8" r="1.2" fill="#000"/><circle cx="1275.0" cy="346.8" r="1.2" fill="#000"/><text x="1300.0" y="364.0" font-size="5.2" fill="#333" text-anchor="middle" font-family="Liberation Serif, serif" font-style="italic">Traverse 4  Vorne</text><line x1="1280.0" y1="365.5" x2="1320.0" y2="365.5" stroke="#111" stroke-width="1"/><line x1="1254.3" y1="395.5" x2="1277.4" y2="395.5" stroke="#aaa" stroke-width="1"/><line x1="1254.3" y1="419.0" x2="1351.0" y2="419.0" stroke="#000" stroke-width="2"/><line x1="1254.5" y1="395.5" x2="1254.5" y2="419.4" stroke="#000" stroke-width="1"/><line x1="1277.5" y1="395.5" x2="1277.5" y2="419.4" stroke="#000" stroke-width="1"/><line x1="1254.3" y1="395.5" x2="1265.8" y2="401.5" stroke="#000" stroke-width="1.0"/><line x1="1265.8" y1="401.5" x2="1277.4" y2="407.4" stroke="#000" stroke-width="1.0"/><line x1="1277.4" y1="395.5" x2="1265.8" y2="401.5" stroke="#000" stroke-width="1.0"/><line x1="1265.8" y1="401.5" x2="1254.3" y2="407.4" stroke="#000" stroke-width="1.0"/><circle cx="1265.8" cy="401.5" r="1.4" fill="#000"/><line x1="1254.3" y1="407.4" x2="1265.8" y2="413.4" stroke="#000" stroke-width="1.0"/><line x1="1265.8" y1="413.4" x2="1277.4" y2="419.4" stroke="#000" stroke-width="1.0"/><line x1="1277.4" y1="407.4" x2="1265.8" y2="413.4" stroke="#000" stroke-width="1.0"/><line x1="1265.8" y1="413.4" x2="1254.3" y2="419.4" stroke="#000" stroke-width="1.0"/><circle cx="1265.8" cy="413.4" r="1.4" fill="#000"/><line x1="1265.5" y1="395.5" x2="1265.5" y2="401.5" stroke="#000" stroke-width="1"/><line x1="1265.5" y1="413.4" x2="1265.5" y2="419.4" stroke="#000" stroke-width="1"/><circle cx="1254.3" cy="395.5" r="1.3" fill="#000"/><circle cx="1277.4" cy="395.5" r="1.3" fill="#000"/><circle cx="1254.3" cy="407.4" r="1.3" fill="#000"/><circle cx="1277.4" cy="407.4" r="1.3" fill="#000"/><circle cx="1254.3" cy="419.4" r="1.3" fill="#000"/><circle cx="1277.4" cy="419.4" r="1.3" fill="#000"/><line x1="1277.4" y1="395.5" x2="1351.0" y2="412.0" stroke="#000" stroke-width="1.1"/><line x1="1277.4" y1="395.5" x2="1290.1" y2="408.3" stroke="#000" stroke-width="0.95"/><circle cx="1290.1" cy="408.3" r="1.3" fill="#000"/><line x1="1290.1" y1="408.3" x2="1301.5" y2="419.4" stroke="#000" stroke-width="0.95"/><circle cx="1301.5" cy="419.4" r="1.3" fill="#000"/><line x1="1301.5" y1="419.4" x2="1316.4" y2="404.2" stroke="#000" stroke-width="0.95"/><circle cx="1316.4" cy="404.2" r="1.3" fill="#000"/><line x1="1316.4" y1="404.2" x2="1328.2" y2="419.4" stroke="#000" stroke-width="0.95"/><circle cx="1328.2" cy="419.4" r="1.3" fill="#000"/><line x1="1328.2" y1="419.4" x2="1336.5" y2="408.7" stroke="#000" stroke-width="0.95"/><circle cx="1336.5" cy="408.7" r="1.3" fill="#000"/><line x1="1336.5" y1="408.7" x2="1342.4" y2="419.4" stroke="#000" stroke-width="0.95"/><circle cx="1342.4" cy="419.4" r="1.3" fill="#000"/><line x1="1342.4" y1="419.4" x2="1347.6" y2="411.2" stroke="#000" stroke-width="0.95"/><circle cx="1347.6" cy="411.2" r="1.3" fill="#000"/><line x1="1347.6" y1="411.2" x2="1351.0" y2="419.4" stroke="#000" stroke-width="0.95"/><circle cx="1351.0" cy="419.4" r="1.3" fill="#000"/><line x1="1301.5" y1="400.9" x2="1301.5" y2="419.4" stroke="#000" stroke-width="1"/><circle cx="1301.5" cy="400.9" r="1.2" fill="#000"/><line x1="1314.0" y1="403.6" x2="1314.0" y2="419.4" stroke="#aaa" stroke-width="2"/><circle cx="1313.7" cy="403.6" r="1.2" fill="#000"/><line x1="1316.5" y1="404.2" x2="1316.5" y2="419.4" stroke="#000" stroke-width="1"/><circle cx="1316.4" cy="404.2" r="1.2" fill="#000"/><line x1="1328.0" y1="406.9" x2="1328.0" y2="419.4" stroke="#aaa" stroke-width="2"/><circle cx="1328.2" cy="406.9" r="1.2" fill="#000"/><line x1="1336.5" y1="408.7" x2="1336.5" y2="419.4" stroke="#000" stroke-width="1"/><circle cx="1336.5" cy="408.7" r="1.2" fill="#000"/><line x1="1347.5" y1="411.2" x2="1347.5" y2="419.4" stroke="#000" stroke-width="1"/><circle cx="1347.6" cy="411.2" r="1.2" fill="#000"/><line x1="1277.4" y1="419.4" x2="1290.1" y2="408.3" stroke="#000" stroke-width="0.9"/><polygon points="1303.7,400.4 1303.7,406.9 1310.2,403.7" fill="#000" stroke="#000" stroke-width="0.4"/><line x1="1310.5" y1="400.4" x2="1310.5" y2="406.9" stroke="#000" stroke-width="1"/><polygon points="1303.7,420.2 1303.7,426.8 1310.2,423.5" fill="#000" stroke="#000" stroke-width="0.4"/><line x1="1310.5" y1="420.2" x2="1310.5" y2="426.8" stroke="#000" stroke-width="1"/><polygon points="1328.7,406.1 1328.7,412.6 1335.2,409.3" fill="#000" stroke="#000" stroke-width="0.4"/><line x1="1335.5" y1="406.1" x2="1335.5" y2="412.6" stroke="#000" stroke-width="1"/><polygon points="1328.7,420.2 1328.7,426.8 1335.2,423.5" fill="#000" stroke="#000" stroke-width="0.4"/><line x1="1335.5" y1="420.2" x2="1335.5" y2="426.8" stroke="#000" stroke-width="1"/><polygon points="1336.2,407.7 1336.2,414.2 1342.7,411.0" fill="#000" stroke="#000" stroke-width="0.4"/><line x1="1342.5" y1="407.7" x2="1342.5" y2="414.2" stroke="#000" stroke-width="1"/><polygon points="1336.2,420.2 1336.2,426.8 1342.7,423.5" fill="#000" stroke="#000" stroke-width="0.4"/><line x1="1342.5" y1="420.2" x2="1342.5" y2="426.8" stroke="#000" stroke-width="1"/><line x1="1275.0" y1="386.5" x2="1352.0" y2="386.5" stroke="#000" stroke-width="1"/><line x1="1277.5" y1="383.4" x2="1277.5" y2="390.4" stroke="#000" stroke-width="1"/><circle cx="1277.0" cy="386.4" r="1.1" fill="#000"/><line x1="1350.5" y1="383.4" x2="1350.5" y2="390.4" stroke="#000" stroke-width="1"/><circle cx="1350.0" cy="386.4" r="1.1" fill="#000"/><line x1="1252.3" y1="438.0" x2="1353.0" y2="438.0" stroke="#aaa" stroke-width="2"/><line x1="1254.5" y1="434.2" x2="1254.5" y2="442.2" stroke="#000" stroke-width="1"/><line x1="1252.3" y1="438.5" x2="1256.3" y2="438.5" stroke="#000" stroke-width="1"/><line x1="1278.5" y1="434.2" x2="1278.5" y2="442.2" stroke="#000" stroke-width="1"/><line x1="1276.5" y1="438.5" x2="1280.5" y2="438.5" stroke="#000" stroke-width="1"/><line x1="1290.5" y1="434.2" x2="1290.5" y2="442.2" stroke="#000" stroke-width="1"/><line x1="1288.0" y1="438.5" x2="1292.0" y2="438.5" stroke="#000" stroke-width="1"/><line x1="1301.5" y1="434.2" x2="1301.5" y2="442.2" stroke="#000" stroke-width="1"/><line x1="1299.5" y1="438.5" x2="1303.5" y2="438.5" stroke="#000" stroke-width="1"/><line x1="1316.5" y1="434.2" x2="1316.5" y2="442.2" stroke="#000" stroke-width="1"/><line x1="1314.4" y1="438.5" x2="1318.4" y2="438.5" stroke="#000" stroke-width="1"/><line x1="1328.5" y1="434.2" x2="1328.5" y2="442.2" stroke="#000" stroke-width="1"/><line x1="1326.2" y1="438.5" x2="1330.2" y2="438.5" stroke="#000" stroke-width="1"/><line x1="1336.5" y1="434.2" x2="1336.5" y2="442.2" stroke="#000" stroke-width="1"/><line x1="1334.5" y1="438.5" x2="1338.5" y2="438.5" stroke="#000" stroke-width="1"/><line x1="1342.5" y1="434.2" x2="1342.5" y2="442.2" stroke="#000" stroke-width="1"/><line x1="1340.4" y1="438.5" x2="1344.4" y2="438.5" stroke="#000" stroke-width="1"/><line x1="1346.5" y1="434.2" x2="1346.5" y2="442.2" stroke="#000" stroke-width="1"/><line x1="1344.0" y1="438.5" x2="1348.0" y2="438.5" stroke="#000" stroke-width="1"/><line x1="1349.5" y1="434.2" x2="1349.5" y2="442.2" stroke="#000" stroke-width="1"/><line x1="1347.8" y1="438.5" x2="1351.8" y2="438.5" stroke="#000" stroke-width="1"/><text x="1390.0" y="365.0" font-size="5.2" fill="#333" text-anchor="middle" font-family="Liberation Serif, serif" font-style="italic">Schnitt E-E</text><line x1="1378.0" y1="366.5" x2="1402.0" y2="366.5" stroke="#111" stroke-width="1"/><text x="1423.0" y="365.0" font-size="5.2" fill="#333" text-anchor="middle" font-family="Liberation Serif, serif" font-style="italic">Schnitt F-F</text><line x1="1412.0" y1="366.5" x2="1434.0" y2="366.5" stroke="#111" stroke-width="1"/><text x="1452.0" y="365.0" font-size="5.2" fill="#333" text-anchor="middle" font-family="Liberation Serif, serif" font-style="italic">Schnitt G-G</text><line x1="1440.0" y1="366.5" x2="1464.0" y2="366.5" stroke="#111" stroke-width="1"/><line x1="1385.0" y1="396.0" x2="1398.6" y2="409.0" stroke="#000" stroke-width="1.0"/><line x1="1397.6" y1="396.0" x2="1384.0" y2="409.0" stroke="#000" stroke-width="1.0"/><line x1="1385.0" y1="396.0" x2="1384.0" y2="409.0" stroke="#333" stroke-width="1"/><line x1="1397.6" y1="396.0" x2="1398.6" y2="409.0" stroke="#333" stroke-width="1"/><line x1="1385.0" y1="396.5" x2="1397.6" y2="396.5" stroke="#999" stroke-width="1"/><circle cx="1385.0" cy="396.0" r="1.0" fill="#600"/><circle cx="1397.6" cy="396.0" r="1.0" fill="#600"/><circle cx="1384.0" cy="409.0" r="1.0" fill="#600"/><circle cx="1398.6" cy="409.0" r="1.0" fill="#600"/><line x1="1419.5" y1="394.5" x2="1427.5" y2="394.5" stroke="#999" stroke-width="1"/><line x1="1419.5" y1="394.5" x2="1418.5" y2="401.0" stroke="#000" stroke-width="1.2"/><line x1="1427.5" y1="394.5" x2="1428.5" y2="401.0" stroke="#000" stroke-width="1.2"/><line x1="1418.5" y1="401.5" x2="1428.5" y2="401.5" stroke="#777" stroke-width="1"/><line x1="1419.5" y1="394.5" x2="1428.5" y2="401.0" stroke="#000" stroke-width="1.1"/><line x1="1427.5" y1="394.5" x2="1418.5" y2="401.0" stroke="#000" stroke-width="1.1"/><circle cx="1419.5" cy="394.5" r="1.1" fill="#300"/><circle cx="1427.5" cy="394.5" r="1.1" fill="#300"/><circle cx="1418.5" cy="401.0" r="1.1" fill="#300"/><circle cx="1428.5" cy="401.0" r="1.1" fill="#300"/><line x1="1447.0" y1="398.0" x2="1457.0" y2="398.0" stroke="#bbb" stroke-width="2"/><line x1="1449.0" y1="395.5" x2="1455.0" y2="399.0" stroke="#000" stroke-width="1.3"/><line x1="1455.0" y1="395.5" x2="1449.0" y2="399.0" stroke="#000" stroke-width="1.3"/><line x1="1446.0" y1="399.5" x2="1458.0" y2="399.5" stroke="#200" stroke-width="1"/><circle cx="1446.5" cy="399.0" r="1.2" fill="#400"/><circle cx="1457.5" cy="399.0" r="1.2" fill="#400"/><circle cx="1452.0" cy="397.0" r="1.2" fill="#000"/><text x="1301.0" y="446.0" font-size="5.2" fill="#333" text-anchor="middle" font-family="Liberation Serif, serif" font-style="italic">Traverse 4  Unten</text><line x1="1281.0" y1="447.5" x2="1321.0" y2="447.5" stroke="#111" stroke-width="1"/><line x1="1254.3" y1="478.5" x2="1278.5" y2="478.5" stroke="#000" stroke-width="1"/><line x1="1254.3" y1="502.5" x2="1278.5" y2="502.5" stroke="#555" stroke-width="1"/><line x1="1254.5" y1="465.7" x2="1254.5" y2="513.4" stroke="#000" stroke-width="1"/><line x1="1278.5" y1="456.4" x2="1278.5" y2="513.4" stroke="#000" stroke-width="1"/><polygon points="1266.4,478.2 1278.5,490.3 1266.4,502.4 1254.3,490.3" fill="none" stroke="#000" stroke-width="0.9"/><line x1="1266.5" y1="478.2" x2="1266.5" y2="502.4" stroke="#333" stroke-width="1"/><circle cx="1266.4" cy="478.2" r="1.2" fill="#000"/><circle cx="1278.5" cy="490.3" r="1.2" fill="#000"/><circle cx="1266.4" cy="502.4" r="1.2" fill="#000"/><circle cx="1254.3" cy="490.3" r="1.2" fill="#000"/><circle cx="1254.3" cy="478.2" r="1.2" fill="#000"/><circle cx="1278.5" cy="478.2" r="1.2" fill="#000"/><circle cx="1254.3" cy="502.4" r="1.2" fill="#000"/><circle cx="1278.5" cy="502.4" r="1.2" fill="#000"/><line x1="1278.5" y1="478.2" x2="1350.0" y2="486.1" stroke="#000" stroke-width="1.2"/><line x1="1278.5" y1="502.4" x2="1350.0" y2="494.5" stroke="#000" stroke-width="1.2"/><line x1="1278.5" y1="478.2" x2="1288.0" y2="501.4" stroke="#000" stroke-width="0.9"/><line x1="1278.5" y1="502.4" x2="1288.0" y2="479.2" stroke="#000" stroke-width="0.9"/><circle cx="1283.2" cy="490.3" r="1.3" fill="#000"/><circle cx="1288.0" cy="479.2" r="1.1" fill="#000"/><circle cx="1288.0" cy="501.4" r="1.1" fill="#000"/><line x1="1287.5" y1="479.2" x2="1287.5" y2="501.4" stroke="#aaa" stroke-width="1"/><line x1="1288.0" y1="479.2" x2="1297.1" y2="500.3" stroke="#000" stroke-width="0.9"/><line x1="1288.0" y1="501.4" x2="1297.1" y2="480.3" stroke="#000" stroke-width="0.9"/><circle cx="1292.5" cy="490.3" r="1.3" fill="#000"/><circle cx="1297.1" cy="480.3" r="1.1" fill="#000"/><circle cx="1297.1" cy="500.3" r="1.1" fill="#000"/><line x1="1297.5" y1="480.3" x2="1297.5" y2="500.3" stroke="#aaa" stroke-width="1"/><line x1="1297.1" y1="480.3" x2="1305.8" y2="499.4" stroke="#000" stroke-width="0.9"/><line x1="1297.1" y1="500.3" x2="1305.8" y2="481.2" stroke="#000" stroke-width="0.9"/><circle cx="1301.5" cy="490.3" r="1.3" fill="#000"/><circle cx="1305.8" cy="481.2" r="1.1" fill="#000"/><circle cx="1305.8" cy="499.4" r="1.1" fill="#000"/><line x1="1305.5" y1="481.2" x2="1305.5" y2="499.4" stroke="#aaa" stroke-width="1"/><line x1="1305.8" y1="481.2" x2="1314.1" y2="498.5" stroke="#000" stroke-width="0.9"/><line x1="1305.8" y1="499.4" x2="1314.1" y2="482.1" stroke="#000" stroke-width="0.9"/><circle cx="1310.0" cy="490.3" r="1.3" fill="#000"/><circle cx="1314.1" cy="482.1" r="1.1" fill="#000"/><circle cx="1314.1" cy="498.5" r="1.1" fill="#000"/><line x1="1314.5" y1="482.1" x2="1314.5" y2="498.5" stroke="#aaa" stroke-width="1"/><line x1="1314.1" y1="482.1" x2="1322.0" y2="497.6" stroke="#000" stroke-width="0.9"/><line x1="1314.1" y1="498.5" x2="1322.0" y2="483.0" stroke="#000" stroke-width="0.9"/><circle cx="1318.0" cy="490.3" r="1.3" fill="#000"/><circle cx="1322.0" cy="483.0" r="1.1" fill="#000"/><circle cx="1322.0" cy="497.6" r="1.1" fill="#000"/><line x1="1321.5" y1="483.0" x2="1321.5" y2="497.6" stroke="#aaa" stroke-width="1"/><line x1="1322.0" y1="483.0" x2="1329.2" y2="496.8" stroke="#000" stroke-width="0.9"/><line x1="1322.0" y1="497.6" x2="1329.2" y2="483.8" stroke="#000" stroke-width="0.9"/><circle cx="1325.6" cy="490.3" r="1.3" fill="#000"/><circle cx="1329.2" cy="483.8" r="1.1" fill="#000"/><circle cx="1329.2" cy="496.8" r="1.1" fill="#000"/><line x1="1329.5" y1="483.8" x2="1329.5" y2="496.8" stroke="#aaa" stroke-width="1"/><line x1="1329.2" y1="483.8" x2="1335.9" y2="496.1" stroke="#000" stroke-width="0.9"/><line x1="1329.2" y1="496.8" x2="1335.9" y2="484.5" stroke="#000" stroke-width="0.9"/><circle cx="1332.6" cy="490.3" r="1.3" fill="#000"/><circle cx="1335.9" cy="484.5" r="1.1" fill="#000"/><circle cx="1335.9" cy="496.1" r="1.1" fill="#000"/><line x1="1335.5" y1="484.5" x2="1335.5" y2="496.1" stroke="#aaa" stroke-width="1"/><line x1="1335.9" y1="484.5" x2="1341.9" y2="495.4" stroke="#000" stroke-width="0.9"/><line x1="1335.9" y1="496.1" x2="1341.9" y2="485.2" stroke="#000" stroke-width="0.9"/><circle cx="1338.9" cy="490.3" r="1.3" fill="#000"/><circle cx="1341.9" cy="485.2" r="1.1" fill="#000"/><circle cx="1341.9" cy="495.4" r="1.1" fill="#000"/><line x1="1341.5" y1="485.2" x2="1341.5" y2="495.4" stroke="#aaa" stroke-width="1"/><line x1="1341.9" y1="485.2" x2="1346.8" y2="494.9" stroke="#000" stroke-width="0.9"/><line x1="1341.9" y1="495.4" x2="1346.8" y2="485.7" stroke="#000" stroke-width="0.9"/><circle cx="1344.3" cy="490.3" r="1.3" fill="#000"/><circle cx="1346.8" cy="485.7" r="1.1" fill="#000"/><circle cx="1346.8" cy="494.9" r="1.1" fill="#000"/><line x1="1346.5" y1="485.7" x2="1346.5" y2="494.9" stroke="#aaa" stroke-width="1"/><line x1="1346.8" y1="485.7" x2="1350.0" y2="494.5" stroke="#000" stroke-width="0.9"/><line x1="1346.8" y1="494.9" x2="1350.0" y2="486.1" stroke="#000" stroke-width="0.9"/><circle cx="1348.4" cy="490.3" r="1.3" fill="#000"/><circle cx="1350.0" cy="486.1" r="1.1" fill="#000"/><circle cx="1350.0" cy="494.5" r="1.1" fill="#000"/><line x1="1350.5" y1="486.1" x2="1350.5" y2="494.5" stroke="#aaa" stroke-width="1"/><line x1="1354.5" y1="485.1" x2="1354.5" y2="495.5" stroke="#000" stroke-width="1"/><line x1="1350.0" y1="486.5" x2="1356.0" y2="486.5" stroke="#000" stroke-width="1"/><line x1="1350.0" y1="494.5" x2="1356.0" y2="494.5" stroke="#000" stroke-width="1"/><line x1="1276.0" y1="459.5" x2="1352.0" y2="459.5" stroke="#000" stroke-width="1"/><line x1="1350.5" y1="457.4" x2="1350.5" y2="468.4" stroke="#000" stroke-width="1"/><circle cx="1350.0" cy="459.4" r="1.2" fill="#000"/><line x1="1252.3" y1="469.0" x2="1352.0" y2="469.0" stroke="#aaa" stroke-width="2"/><line x1="1292.5" y1="466.7" x2="1292.5" y2="477.7" stroke="#000" stroke-width="1"/><circle cx="1292.0" cy="468.7" r="1.2" fill="#000"/><line x1="1329.5" y1="466.7" x2="1329.5" y2="477.7" stroke="#000" stroke-width="1"/><circle cx="1329.7" cy="468.7" r="1.2" fill="#000"/><line x1="1342.5" y1="466.7" x2="1342.5" y2="477.7" stroke="#000" stroke-width="1"/><circle cx="1342.4" cy="468.7" r="1.2" fill="#000"/><line x1="1252.3" y1="511.5" x2="1352.0" y2="511.5" stroke="#333" stroke-width="1"/><line x1="1285.5" y1="502.1" x2="1285.5" y2="513.4" stroke="#000" stroke-width="1"/><circle cx="1285.7" cy="511.4" r="1.2" fill="#000"/><line x1="1292.5" y1="501.4" x2="1292.5" y2="513.4" stroke="#000" stroke-width="1"/><circle cx="1292.0" cy="511.4" r="1.2" fill="#000"/><line x1="1298.5" y1="500.7" x2="1298.5" y2="513.4" stroke="#000" stroke-width="1"/><circle cx="1298.0" cy="511.4" r="1.2" fill="#000"/><line x1="1303.5" y1="500.1" x2="1303.5" y2="513.4" stroke="#000" stroke-width="1"/><circle cx="1303.5" cy="511.4" r="1.2" fill="#000"/><line x1="1308.5" y1="499.6" x2="1308.5" y2="513.4" stroke="#000" stroke-width="1"/><circle cx="1308.4" cy="511.4" r="1.2" fill="#000"/><line x1="1313.5" y1="499.1" x2="1313.5" y2="513.4" stroke="#000" stroke-width="1"/><circle cx="1313.0" cy="511.4" r="1.2" fill="#000"/><line x1="1318.5" y1="498.5" x2="1318.5" y2="513.4" stroke="#000" stroke-width="1"/><circle cx="1318.0" cy="511.4" r="1.2" fill="#000"/><line x1="1322.5" y1="498.1" x2="1322.5" y2="513.4" stroke="#000" stroke-width="1"/><circle cx="1322.0" cy="511.4" r="1.2" fill="#000"/><line x1="1326.5" y1="497.6" x2="1326.5" y2="513.4" stroke="#000" stroke-width="1"/><circle cx="1326.3" cy="511.4" r="1.2" fill="#000"/><line x1="1329.5" y1="497.2" x2="1329.5" y2="513.4" stroke="#000" stroke-width="1"/><circle cx="1329.7" cy="511.4" r="1.2" fill="#000"/><line x1="1336.5" y1="496.5" x2="1336.5" y2="513.4" stroke="#000" stroke-width="1"/><circle cx="1336.4" cy="511.4" r="1.2" fill="#000"/><line x1="1342.5" y1="495.8" x2="1342.5" y2="513.4" stroke="#000" stroke-width="1"/><circle cx="1342.4" cy="511.4" r="1.2" fill="#000"/><line x1="1346.5" y1="495.4" x2="1346.5" y2="513.4" stroke="#000" stroke-width="1"/><circle cx="1346.0" cy="511.4" r="1.2" fill="#000"/><line x1="1350.5" y1="495.0" x2="1350.5" y2="513.4" stroke="#000" stroke-width="1"/><circle cx="1350.0" cy="511.4" r="1.2" fill="#000"/><circle cx="1254.3" cy="511.4" r="1.2" fill="#000"/><circle cx="1278.5" cy="511.4" r="1.2" fill="#000"/><text x="1315.0" y="529.0" font-size="5.2" fill="#333" text-anchor="middle" font-family="Liberation Serif, serif" font-style="italic">Traverse 6  Vorne</text><line x1="1295.0" y1="530.5" x2="1335.0" y2="530.5" stroke="#111" stroke-width="1"/><line x1="1255.5" y1="561.5" x2="1285.6" y2="561.5" stroke="#000" stroke-width="1"/><line x1="1255.5" y1="586.0" x2="1376.0" y2="586.0" stroke="#aaa" stroke-width="2"/><line x1="1255.5" y1="561.1" x2="1255.5" y2="586.1" stroke="#000" stroke-width="1"/><line x1="1285.5" y1="561.1" x2="1285.5" y2="586.1" stroke="#000" stroke-width="1"/><line x1="1255.5" y1="561.1" x2="1270.5" y2="567.4" stroke="#000" stroke-width="1.0"/><line x1="1270.5" y1="567.4" x2="1285.6" y2="573.6" stroke="#000" stroke-width="1.0"/><line x1="1285.6" y1="561.1" x2="1270.5" y2="567.4" stroke="#000" stroke-width="1.0"/><line x1="1270.5" y1="567.4" x2="1255.5" y2="573.6" stroke="#000" stroke-width="1.0"/><circle cx="1270.5" cy="567.4" r="1.4" fill="#000"/><line x1="1255.5" y1="573.6" x2="1270.5" y2="579.9" stroke="#000" stroke-width="1.0"/><line x1="1270.5" y1="579.9" x2="1285.6" y2="586.1" stroke="#000" stroke-width="1.0"/><line x1="1285.6" y1="573.6" x2="1270.5" y2="579.9" stroke="#000" stroke-width="1.0"/><line x1="1270.5" y1="579.9" x2="1255.5" y2="586.1" stroke="#000" stroke-width="1.0"/><circle cx="1270.5" cy="579.9" r="1.4" fill="#000"/><line x1="1270.5" y1="561.1" x2="1270.5" y2="567.4" stroke="#000" stroke-width="1"/><line x1="1270.5" y1="579.9" x2="1270.5" y2="586.1" stroke="#000" stroke-width="1"/><circle cx="1255.5" cy="561.1" r="1.3" fill="#000"/><circle cx="1285.6" cy="561.1" r="1.3" fill="#000"/><circle cx="1255.5" cy="573.6" r="1.3" fill="#000"/><circle cx="1285.6" cy="573.6" r="1.3" fill="#000"/><circle cx="1255.5" cy="586.1" r="1.3" fill="#000"/><circle cx="1285.6" cy="586.1" r="1.3" fill="#000"/><line x1="1285.6" y1="561.1" x2="1376.0" y2="583.0" stroke="#000" stroke-width="1.1"/><line x1="1285.6" y1="561.1" x2="1299.0" y2="574.5" stroke="#000" stroke-width="0.95"/><circle cx="1299.0" cy="574.5" r="1.3" fill="#000"/><line x1="1299.0" y1="574.5" x2="1312.2" y2="586.1" stroke="#000" stroke-width="0.95"/><circle cx="1312.2" cy="586.1" r="1.3" fill="#000"/><line x1="1312.5" y1="586.1" x2="1312.5" y2="567.5" stroke="#000" stroke-width="1"/><circle cx="1312.2" cy="567.5" r="1.3" fill="#000"/><line x1="1312.2" y1="567.5" x2="1330.5" y2="586.1" stroke="#000" stroke-width="0.95"/><circle cx="1330.5" cy="586.1" r="1.3" fill="#000"/><line x1="1330.5" y1="586.1" x2="1345.8" y2="575.7" stroke="#000" stroke-width="0.95"/><circle cx="1345.8" cy="575.7" r="1.3" fill="#000"/><line x1="1345.8" y1="575.7" x2="1357.5" y2="586.1" stroke="#000" stroke-width="0.95"/><circle cx="1357.5" cy="586.1" r="1.3" fill="#000"/><line x1="1357.5" y1="586.1" x2="1371.6" y2="581.9" stroke="#000" stroke-width="0.95"/><circle cx="1371.6" cy="581.9" r="1.3" fill="#000"/><line x1="1371.6" y1="581.9" x2="1376.0" y2="586.1" stroke="#000" stroke-width="0.95"/><circle cx="1376.0" cy="586.1" r="1.3" fill="#000"/><line x1="1312.0" y1="567.5" x2="1312.0" y2="586.1" stroke="#aaa" stroke-width="2"/><circle cx="1312.2" cy="567.5" r="1.2" fill="#000"/><line x1="1330.5" y1="572.0" x2="1330.5" y2="586.1" stroke="#000" stroke-width="1"/><circle cx="1330.5" cy="572.0" r="1.2" fill="#000"/><line x1="1346.0" y1="575.7" x2="1346.0" y2="586.1" stroke="#aaa" stroke-width="2"/><circle cx="1345.8" cy="575.7" r="1.2" fill="#000"/><line x1="1357.5" y1="578.5" x2="1357.5" y2="586.1" stroke="#000" stroke-width="1"/><circle cx="1357.5" cy="578.5" r="1.2" fill="#000"/><line x1="1371.5" y1="581.9" x2="1371.5" y2="586.1" stroke="#000" stroke-width="1"/><circle cx="1371.6" cy="581.9" r="1.2" fill="#000"/><line x1="1285.6" y1="586.1" x2="1299.0" y2="574.5" stroke="#000" stroke-width="0.9"/><polygon points="1299.2,563.5 1299.2,570.0 1305.7,566.8" fill="#000" stroke="#000" stroke-width="0.4"/><line x1="1305.5" y1="563.5" x2="1305.5" y2="570.0" stroke="#000" stroke-width="1"/><polygon points="1299.2,586.8 1299.2,593.2 1305.7,590.0" fill="#000" stroke="#000" stroke-width="0.4"/><line x1="1305.5" y1="586.8" x2="1305.5" y2="593.2" stroke="#000" stroke-width="1"/><polygon points="1317.2,567.9 1317.2,574.4 1323.7,571.2" fill="#000" stroke="#000" stroke-width="0.4"/><line x1="1323.5" y1="567.9" x2="1323.5" y2="574.4" stroke="#000" stroke-width="1"/><polygon points="1317.2,586.8 1317.2,593.2 1323.7,590.0" fill="#000" stroke="#000" stroke-width="0.4"/><line x1="1323.5" y1="586.8" x2="1323.5" y2="593.2" stroke="#000" stroke-width="1"/><polygon points="1332.9,571.7 1332.9,578.2 1339.4,575.0" fill="#000" stroke="#000" stroke-width="0.4"/><line x1="1339.5" y1="571.7" x2="1339.5" y2="578.2" stroke="#000" stroke-width="1"/><polygon points="1332.9,586.8 1332.9,593.2 1339.4,590.0" fill="#000" stroke="#000" stroke-width="0.4"/><line x1="1339.5" y1="586.8" x2="1339.5" y2="593.2" stroke="#000" stroke-width="1"/><polygon points="1360.2,578.3 1360.2,584.8 1366.7,581.6" fill="#000" stroke="#000" stroke-width="0.4"/><line x1="1366.5" y1="578.3" x2="1366.5" y2="584.8" stroke="#000" stroke-width="1"/><polygon points="1360.2,586.8 1360.2,593.2 1366.7,590.0" fill="#000" stroke="#000" stroke-width="0.4"/><line x1="1366.5" y1="586.8" x2="1366.5" y2="593.2" stroke="#000" stroke-width="1"/><line x1="1283.0" y1="552.0" x2="1376.0" y2="552.0" stroke="#aaa" stroke-width="2"/><line x1="1285.5" y1="548.7" x2="1285.5" y2="555.7" stroke="#000" stroke-width="1"/><circle cx="1285.0" cy="551.7" r="1.1" fill="#000"/><line x1="1374.5" y1="548.7" x2="1374.5" y2="555.7" stroke="#000" stroke-width="1"/><circle cx="1374.0" cy="551.7" r="1.1" fill="#000"/><line x1="1253.5" y1="605.0" x2="1378.0" y2="605.0" stroke="#aaa" stroke-width="2"/><line x1="1255.5" y1="600.8" x2="1255.5" y2="608.8" stroke="#000" stroke-width="1"/><line x1="1253.5" y1="604.5" x2="1257.5" y2="604.5" stroke="#000" stroke-width="1"/><line x1="1285.5" y1="600.8" x2="1285.5" y2="608.8" stroke="#000" stroke-width="1"/><line x1="1283.6" y1="604.5" x2="1287.6" y2="604.5" stroke="#000" stroke-width="1"/><line x1="1299.5" y1="600.8" x2="1299.5" y2="608.8" stroke="#000" stroke-width="1"/><line x1="1297.0" y1="604.5" x2="1301.0" y2="604.5" stroke="#000" stroke-width="1"/><line x1="1312.5" y1="600.8" x2="1312.5" y2="608.8" stroke="#000" stroke-width="1"/><line x1="1310.2" y1="604.5" x2="1314.2" y2="604.5" stroke="#000" stroke-width="1"/><line x1="1330.5" y1="600.8" x2="1330.5" y2="608.8" stroke="#000" stroke-width="1"/><line x1="1328.5" y1="604.5" x2="1332.5" y2="604.5" stroke="#000" stroke-width="1"/><line x1="1345.5" y1="600.8" x2="1345.5" y2="608.8" stroke="#000" stroke-width="1"/><line x1="1343.8" y1="604.5" x2="1347.8" y2="604.5" stroke="#000" stroke-width="1"/><line x1="1357.5" y1="600.8" x2="1357.5" y2="608.8" stroke="#000" stroke-width="1"/><line x1="1355.5" y1="604.5" x2="1359.5" y2="604.5" stroke="#000" stroke-width="1"/><line x1="1367.5" y1="600.8" x2="1367.5" y2="608.8" stroke="#000" stroke-width="1"/><line x1="1365.0" y1="604.5" x2="1369.0" y2="604.5" stroke="#000" stroke-width="1"/><line x1="1371.5" y1="600.8" x2="1371.5" y2="608.8" stroke="#000" stroke-width="1"/><line x1="1369.0" y1="604.5" x2="1373.0" y2="604.5" stroke="#000" stroke-width="1"/><line x1="1374.5" y1="600.8" x2="1374.5" y2="608.8" stroke="#000" stroke-width="1"/><line x1="1372.6" y1="604.5" x2="1376.6" y2="604.5" stroke="#000" stroke-width="1"/><text x="1422.0" y="529.0" font-size="5.2" fill="#333" text-anchor="middle" font-family="Liberation Serif, serif" font-style="italic">Schnitt H-H</text><line x1="1410.0" y1="530.5" x2="1434.0" y2="530.5" stroke="#111" stroke-width="1"/><text x="1463.0" y="529.0" font-size="5.2" fill="#333" text-anchor="middle" font-family="Liberation Serif, serif" font-style="italic">Schnitt I-I</text><line x1="1452.0" y1="530.5" x2="1474.0" y2="530.5" stroke="#111" stroke-width="1"/><text x="1503.0" y="529.0" font-size="5.2" fill="#333" text-anchor="middle" font-family="Liberation Serif, serif" font-style="italic">Schnitt J-J</text><line x1="1491.0" y1="530.5" x2="1515.0" y2="530.5" stroke="#111" stroke-width="1"/><text x="1534.0" y="529.0" font-size="5.2" fill="#333" text-anchor="middle" font-family="Liberation Serif, serif" font-style="italic">Schnitt K-K</text><line x1="1522.0" y1="530.5" x2="1546.0" y2="530.5" stroke="#111" stroke-width="1"/><polyline points="1411.5,561.0 1410.0,579.0" fill="none" stroke="#000" stroke-width="1.2"/><polyline points="1432.6,561.0 1433.6,579.0" fill="none" stroke="#000" stroke-width="1.2"/><line x1="1411.5" y1="561.0" x2="1433.6" y2="579.0" stroke="#000" stroke-width="1.2"/><line x1="1432.6" y1="561.0" x2="1410.0" y2="579.0" stroke="#000" stroke-width="1.2"/><line x1="1411.5" y1="561.5" x2="1432.6" y2="561.5" stroke="#999" stroke-width="1"/><rect x="1456.5" y="560.5" width="18.0" height="14.0" fill="none" stroke="#000" stroke-width="1"/><line x1="1456.6" y1="560.7" x2="1474.0" y2="574.8" stroke="#000" stroke-width="1.2"/><line x1="1474.0" y1="560.7" x2="1456.6" y2="574.8" stroke="#000" stroke-width="1.2"/><polyline points="1496.0,560.6 1510.0,570.5" fill="none" stroke="#000" stroke-width="1.2"/><polyline points="1510.0,560.6 1496.0,570.5" fill="none" stroke="#000" stroke-width="1.2"/><line x1="1496.0" y1="560.5" x2="1510.0" y2="560.5" stroke="#555" stroke-width="1" stroke-dasharray="1,1"/><line x1="1496.0" y1="560.6" x2="1497.0" y2="570.5" stroke="#000" stroke-width="1"/><line x1="1510.0" y1="560.6" x2="1509.0" y2="570.5" stroke="#000" stroke-width="1"/><line x1="1529.0" y1="564.0" x2="1540.0" y2="564.0" stroke="#000" stroke-width="2"/><line x1="1531.5" y1="559.0" x2="1531.5" y2="563.0" stroke="#000" stroke-width="1"/><line x1="1538.5" y1="559.0" x2="1538.5" y2="563.0" stroke="#000" stroke-width="1"/><text x="1315.0" y="613.0" font-size="5.2" fill="#333" text-anchor="middle" font-family="Liberation Serif, serif" font-style="italic">Traverse 6  Unten</text><line x1="1295.0" y1="614.5" x2="1335.0" y2="614.5" stroke="#111" stroke-width="1"/><line x1="1255.5" y1="646.5" x2="1285.8" y2="646.5" stroke="#000" stroke-width="1"/><line x1="1255.5" y1="676.5" x2="1285.8" y2="676.5" stroke="#555" stroke-width="1"/><line x1="1255.5" y1="633.5" x2="1255.5" y2="688.5" stroke="#000" stroke-width="1"/><line x1="1285.5" y1="623.8" x2="1285.5" y2="688.5" stroke="#000" stroke-width="1"/><polygon points="1270.7,646.1 1285.8,661.5 1270.7,676.9 1255.5,661.5" fill="none" stroke="#000" stroke-width="0.9"/><line x1="1270.5" y1="646.1" x2="1270.5" y2="676.9" stroke="#333" stroke-width="1"/><circle cx="1270.7" cy="646.1" r="1.2" fill="#000"/><circle cx="1285.8" cy="661.5" r="1.2" fill="#000"/><circle cx="1270.7" cy="676.9" r="1.2" fill="#000"/><circle cx="1255.5" cy="661.5" r="1.2" fill="#000"/><circle cx="1255.5" cy="646.1" r="1.2" fill="#000"/><circle cx="1285.8" cy="646.1" r="1.2" fill="#000"/><circle cx="1255.5" cy="676.9" r="1.2" fill="#000"/><circle cx="1285.8" cy="676.9" r="1.2" fill="#000"/><line x1="1285.8" y1="646.1" x2="1374.6" y2="657.5" stroke="#000" stroke-width="1.2"/><line x1="1285.8" y1="676.9" x2="1374.6" y2="665.5" stroke="#000" stroke-width="1.2"/><line x1="1285.8" y1="646.1" x2="1295.6" y2="675.6" stroke="#000" stroke-width="0.9"/><line x1="1285.8" y1="676.9" x2="1295.6" y2="647.4" stroke="#000" stroke-width="0.9"/><circle cx="1290.7" cy="661.5" r="1.3" fill="#000"/><circle cx="1295.6" cy="647.4" r="1.1" fill="#000"/><circle cx="1295.6" cy="675.6" r="1.1" fill="#000"/><line x1="1295.5" y1="647.4" x2="1295.5" y2="675.6" stroke="#aaa" stroke-width="1"/><line x1="1295.6" y1="647.4" x2="1305.2" y2="674.4" stroke="#000" stroke-width="0.9"/><line x1="1295.6" y1="675.6" x2="1305.2" y2="648.6" stroke="#000" stroke-width="0.9"/><circle cx="1300.4" cy="661.5" r="1.3" fill="#000"/><circle cx="1305.2" cy="648.6" r="1.1" fill="#000"/><circle cx="1305.2" cy="674.4" r="1.1" fill="#000"/><line x1="1305.5" y1="648.6" x2="1305.5" y2="674.4" stroke="#aaa" stroke-width="1"/><line x1="1305.2" y1="648.6" x2="1314.4" y2="673.2" stroke="#000" stroke-width="0.9"/><line x1="1305.2" y1="674.4" x2="1314.4" y2="649.8" stroke="#000" stroke-width="0.9"/><circle cx="1309.8" cy="661.5" r="1.3" fill="#000"/><circle cx="1314.4" cy="649.8" r="1.1" fill="#000"/><circle cx="1314.4" cy="673.2" r="1.1" fill="#000"/><line x1="1314.5" y1="649.8" x2="1314.5" y2="673.2" stroke="#aaa" stroke-width="1"/><line x1="1314.4" y1="649.8" x2="1323.2" y2="672.1" stroke="#000" stroke-width="0.9"/><line x1="1314.4" y1="673.2" x2="1323.2" y2="650.9" stroke="#000" stroke-width="0.9"/><circle cx="1318.8" cy="661.5" r="1.3" fill="#000"/><circle cx="1323.2" cy="650.9" r="1.1" fill="#000"/><circle cx="1323.2" cy="672.1" r="1.1" fill="#000"/><line x1="1323.5" y1="650.9" x2="1323.5" y2="672.1" stroke="#aaa" stroke-width="1"/><line x1="1323.2" y1="650.9" x2="1331.7" y2="671.0" stroke="#000" stroke-width="0.9"/><line x1="1323.2" y1="672.1" x2="1331.7" y2="652.0" stroke="#000" stroke-width="0.9"/><circle cx="1327.5" cy="661.5" r="1.3" fill="#000"/><circle cx="1331.7" cy="652.0" r="1.1" fill="#000"/><circle cx="1331.7" cy="671.0" r="1.1" fill="#000"/><line x1="1331.5" y1="652.0" x2="1331.5" y2="671.0" stroke="#aaa" stroke-width="1"/><line x1="1331.7" y1="652.0" x2="1339.8" y2="670.0" stroke="#000" stroke-width="0.9"/><line x1="1331.7" y1="671.0" x2="1339.8" y2="653.0" stroke="#000" stroke-width="0.9"/><circle cx="1335.7" cy="661.5" r="1.3" fill="#000"/><circle cx="1339.8" cy="653.0" r="1.1" fill="#000"/><circle cx="1339.8" cy="670.0" r="1.1" fill="#000"/><line x1="1339.5" y1="653.0" x2="1339.5" y2="670.0" stroke="#aaa" stroke-width="1"/><line x1="1339.8" y1="653.0" x2="1347.4" y2="669.0" stroke="#000" stroke-width="0.9"/><line x1="1339.8" y1="670.0" x2="1347.4" y2="654.0" stroke="#000" stroke-width="0.9"/><circle cx="1343.6" cy="661.5" r="1.3" fill="#000"/><circle cx="1347.4" cy="654.0" r="1.1" fill="#000"/><circle cx="1347.4" cy="669.0" r="1.1" fill="#000"/><line x1="1347.5" y1="654.0" x2="1347.5" y2="669.0" stroke="#aaa" stroke-width="1"/><line x1="1347.4" y1="654.0" x2="1354.4" y2="668.1" stroke="#000" stroke-width="0.9"/><line x1="1347.4" y1="669.0" x2="1354.4" y2="654.9" stroke="#000" stroke-width="0.9"/><circle cx="1350.9" cy="661.5" r="1.3" fill="#000"/><circle cx="1354.4" cy="654.9" r="1.1" fill="#000"/><circle cx="1354.4" cy="668.1" r="1.1" fill="#000"/><line x1="1354.5" y1="654.9" x2="1354.5" y2="668.1" stroke="#aaa" stroke-width="1"/><line x1="1354.4" y1="654.9" x2="1360.9" y2="667.3" stroke="#000" stroke-width="0.9"/><line x1="1354.4" y1="668.1" x2="1360.9" y2="655.7" stroke="#000" stroke-width="0.9"/><circle cx="1357.7" cy="661.5" r="1.3" fill="#000"/><circle cx="1360.9" cy="655.7" r="1.1" fill="#000"/><circle cx="1360.9" cy="667.3" r="1.1" fill="#000"/><line x1="1360.5" y1="655.7" x2="1360.5" y2="667.3" stroke="#aaa" stroke-width="1"/><line x1="1360.9" y1="655.7" x2="1366.7" y2="666.5" stroke="#000" stroke-width="0.9"/><line x1="1360.9" y1="667.3" x2="1366.7" y2="656.5" stroke="#000" stroke-width="0.9"/><circle cx="1363.8" cy="661.5" r="1.3" fill="#000"/><circle cx="1366.7" cy="656.5" r="1.1" fill="#000"/><circle cx="1366.7" cy="666.5" r="1.1" fill="#000"/><line x1="1366.5" y1="656.5" x2="1366.5" y2="666.5" stroke="#aaa" stroke-width="1"/><line x1="1366.7" y1="656.5" x2="1371.5" y2="665.9" stroke="#000" stroke-width="0.9"/><line x1="1366.7" y1="666.5" x2="1371.5" y2="657.1" stroke="#000" stroke-width="0.9"/><circle cx="1369.1" cy="661.5" r="1.3" fill="#000"/><circle cx="1371.5" cy="657.1" r="1.1" fill="#000"/><circle cx="1371.5" cy="665.9" r="1.1" fill="#000"/><line x1="1371.5" y1="657.1" x2="1371.5" y2="665.9" stroke="#aaa" stroke-width="1"/><line x1="1371.5" y1="657.1" x2="1374.6" y2="665.5" stroke="#000" stroke-width="0.9"/><line x1="1371.5" y1="665.9" x2="1374.6" y2="657.5" stroke="#000" stroke-width="0.9"/><circle cx="1373.0" cy="661.5" r="1.3" fill="#000"/><circle cx="1374.6" cy="657.5" r="1.1" fill="#000"/><circle cx="1374.6" cy="665.5" r="1.1" fill="#000"/><line x1="1374.5" y1="657.5" x2="1374.5" y2="665.5" stroke="#aaa" stroke-width="1"/><line x1="1378.5" y1="656.5" x2="1378.5" y2="666.5" stroke="#000" stroke-width="1"/><line x1="1374.6" y1="657.5" x2="1380.6" y2="657.5" stroke="#000" stroke-width="1"/><line x1="1374.6" y1="665.5" x2="1380.6" y2="665.5" stroke="#000" stroke-width="1"/><line x1="1284.0" y1="627.0" x2="1376.0" y2="627.0" stroke="#aaa" stroke-width="2"/><line x1="1321.5" y1="624.8" x2="1321.5" y2="635.8" stroke="#000" stroke-width="1"/><circle cx="1321.7" cy="626.8" r="1.2" fill="#000"/><line x1="1374.5" y1="624.8" x2="1374.5" y2="635.8" stroke="#000" stroke-width="1"/><circle cx="1374.6" cy="626.8" r="1.2" fill="#000"/><line x1="1253.5" y1="636.5" x2="1376.6" y2="636.5" stroke="#000" stroke-width="1"/><line x1="1309.5" y1="634.5" x2="1309.5" y2="645.6" stroke="#000" stroke-width="1"/><circle cx="1309.6" cy="636.5" r="1.2" fill="#000"/><line x1="1319.5" y1="634.5" x2="1319.5" y2="645.6" stroke="#000" stroke-width="1"/><circle cx="1319.0" cy="636.5" r="1.2" fill="#000"/><line x1="1326.5" y1="634.5" x2="1326.5" y2="645.6" stroke="#000" stroke-width="1"/><circle cx="1326.5" cy="636.5" r="1.2" fill="#000"/><line x1="1334.5" y1="634.5" x2="1334.5" y2="645.6" stroke="#000" stroke-width="1"/><circle cx="1334.4" cy="636.5" r="1.2" fill="#000"/><line x1="1345.5" y1="634.5" x2="1345.5" y2="645.6" stroke="#000" stroke-width="1"/><circle cx="1345.0" cy="636.5" r="1.2" fill="#000"/><line x1="1370.5" y1="634.5" x2="1370.5" y2="645.6" stroke="#000" stroke-width="1"/><circle cx="1370.5" cy="636.5" r="1.2" fill="#000"/><line x1="1374.5" y1="634.5" x2="1374.5" y2="645.6" stroke="#000" stroke-width="1"/><circle cx="1374.6" cy="636.5" r="1.2" fill="#000"/><line x1="1253.5" y1="686.5" x2="1376.6" y2="686.5" stroke="#333" stroke-width="1"/><line x1="1292.5" y1="676.6" x2="1292.5" y2="688.5" stroke="#000" stroke-width="1"/><circle cx="1292.0" cy="686.5" r="1.2" fill="#000"/><line x1="1298.5" y1="675.8" x2="1298.5" y2="688.5" stroke="#000" stroke-width="1"/><circle cx="1298.0" cy="686.5" r="1.2" fill="#000"/><line x1="1304.5" y1="675.1" x2="1304.5" y2="688.5" stroke="#000" stroke-width="1"/><circle cx="1304.0" cy="686.5" r="1.2" fill="#000"/><line x1="1309.5" y1="674.3" x2="1309.5" y2="688.5" stroke="#000" stroke-width="1"/><circle cx="1309.6" cy="686.5" r="1.2" fill="#000"/><line x1="1314.5" y1="673.7" x2="1314.5" y2="688.5" stroke="#000" stroke-width="1"/><circle cx="1314.5" cy="686.5" r="1.2" fill="#000"/><line x1="1319.5" y1="673.1" x2="1319.5" y2="688.5" stroke="#000" stroke-width="1"/><circle cx="1319.0" cy="686.5" r="1.2" fill="#000"/><line x1="1323.5" y1="672.6" x2="1323.5" y2="688.5" stroke="#000" stroke-width="1"/><circle cx="1323.0" cy="686.5" r="1.2" fill="#000"/><line x1="1326.5" y1="672.2" x2="1326.5" y2="688.5" stroke="#000" stroke-width="1"/><circle cx="1326.5" cy="686.5" r="1.2" fill="#000"/><line x1="1330.5" y1="671.7" x2="1330.5" y2="688.5" stroke="#000" stroke-width="1"/><circle cx="1330.4" cy="686.5" r="1.2" fill="#000"/><line x1="1334.5" y1="671.2" x2="1334.5" y2="688.5" stroke="#000" stroke-width="1"/><circle cx="1334.4" cy="686.5" r="1.2" fill="#000"/><line x1="1340.5" y1="670.4" x2="1340.5" y2="688.5" stroke="#000" stroke-width="1"/><circle cx="1340.0" cy="686.5" r="1.2" fill="#000"/><line x1="1345.5" y1="669.8" x2="1345.5" y2="688.5" stroke="#000" stroke-width="1"/><circle cx="1345.0" cy="686.5" r="1.2" fill="#000"/><line x1="1354.5" y1="668.6" x2="1354.5" y2="688.5" stroke="#000" stroke-width="1"/><circle cx="1354.0" cy="686.5" r="1.2" fill="#000"/><line x1="1361.5" y1="667.7" x2="1361.5" y2="688.5" stroke="#000" stroke-width="1"/><circle cx="1361.5" cy="686.5" r="1.2" fill="#000"/><line x1="1367.5" y1="667.0" x2="1367.5" y2="688.5" stroke="#000" stroke-width="1"/><circle cx="1367.0" cy="686.5" r="1.2" fill="#000"/><line x1="1370.5" y1="666.5" x2="1370.5" y2="688.5" stroke="#000" stroke-width="1"/><circle cx="1370.5" cy="686.5" r="1.2" fill="#000"/><line x1="1374.5" y1="666.0" x2="1374.5" y2="688.5" stroke="#000" stroke-width="1"/><circle cx="1374.6" cy="686.5" r="1.2" fill="#000"/><circle cx="1255.5" cy="686.5" r="1.2" fill="#000"/><circle cx="1285.8" cy="686.5" r="1.2" fill="#000"/><text x="805.0" y="771.0" font-size="5.2" fill="#333" text-anchor="middle" font-family="Liberation Serif, serif" font-style="italic">Schnitt A-A</text><line x1="793.0" y1="772.5" x2="817.0" y2="772.5" stroke="#111" stroke-width="1"/><text x="919.0" y="771.0" font-size="5.2" fill="#333" text-anchor="middle" font-family="Liberation Serif, serif" font-style="italic">Schnitt B-B</text><line x1="907.0" y1="772.5" x2="931.0" y2="772.5" stroke="#111" stroke-width="1"/><text x="1044.0" y="772.0" font-size="5.2" fill="#333" text-anchor="middle" font-family="Liberation Serif, serif" font-style="italic">Schnitt C-C</text><line x1="1032.0" y1="773.5" x2="1056.0" y2="773.5" stroke="#111" stroke-width="1"/><text x="1195.0" y="772.0" font-size="5.2" fill="#333" text-anchor="middle" font-family="Liberation Serif, serif" font-style="italic">Schnitt D-D</text><line x1="1183.0" y1="773.5" x2="1207.0" y2="773.5" stroke="#111" stroke-width="1"/><rect x="791.5" y="785.5" width="28.0" height="28.0" fill="none" stroke="#000" stroke-width="1"/><polygon points="805.6,785.0 819.5,799.0 805.6,813.0 791.7,799.0" fill="none" stroke="#000" stroke-width="1.0"/><line x1="805.5" y1="785.0" x2="805.5" y2="813.0" stroke="#555" stroke-width="1" stroke-dasharray="1,1"/><circle cx="791.7" cy="785.0" r="1.1" fill="#000"/><circle cx="819.5" cy="785.0" r="1.1" fill="#000"/><circle cx="791.7" cy="813.0" r="1.1" fill="#000"/><circle cx="819.5" cy="813.0" r="1.1" fill="#000"/><circle cx="805.6" cy="785.0" r="1.1" fill="#000"/><circle cx="805.6" cy="813.0" r="1.1" fill="#000"/><circle cx="791.7" cy="799.0" r="1.1" fill="#000"/><circle cx="819.5" cy="799.0" r="1.1" fill="#000"/><rect x="898.5" y="785.5" width="43.0" height="43.0" fill="none" stroke="#000" stroke-width="1"/><polygon points="919.6,785.9 941.3,807.3 919.6,828.8 898.0,807.3" fill="none" stroke="#000" stroke-width="1.0"/><line x1="919.5" y1="785.9" x2="919.5" y2="828.8" stroke="#555" stroke-width="1" stroke-dasharray="1,1"/><circle cx="898.0" cy="785.9" r="1.1" fill="#000"/><circle cx="941.3" cy="785.9" r="1.1" fill="#000"/><circle cx="898.0" cy="828.8" r="1.1" fill="#000"/><circle cx="941.3" cy="828.8" r="1.1" fill="#000"/><circle cx="919.6" cy="785.9" r="1.1" fill="#000"/><circle cx="919.6" cy="828.8" r="1.1" fill="#000"/><circle cx="898.0" cy="807.3" r="1.1" fill="#000"/><circle cx="941.3" cy="807.3" r="1.1" fill="#000"/><line x1="898.0" y1="786.0" x2="941.3" y2="786.0" stroke="#999" stroke-width="2"/><line x1="941.0" y1="785.9" x2="941.0" y2="828.8" stroke="#999" stroke-width="2"/><rect x="1020.5" y="786.5" width="48.0" height="48.0" fill="none" stroke="#000" stroke-width="1"/><polygon points="1044.5,786.2 1056.8,798.2 1068.8,810.4 1056.8,822.5 1044.5,834.5 1032.3,822.5 1020.3,810.4 1032.3,798.2" fill="none" stroke="#000" stroke-width="1.0"/><line x1="1032.5" y1="786.2" x2="1032.5" y2="798.2" stroke="#000" stroke-width="1"/><line x1="1020.3" y1="798.5" x2="1032.3" y2="798.5" stroke="#000" stroke-width="1"/><line x1="1020.3" y1="798.2" x2="1032.3" y2="786.2" stroke="#000" stroke-width="0.9"/><line x1="1056.5" y1="786.2" x2="1056.5" y2="798.2" stroke="#000" stroke-width="1"/><line x1="1068.8" y1="798.5" x2="1056.8" y2="798.5" stroke="#000" stroke-width="1"/><line x1="1068.8" y1="798.2" x2="1056.8" y2="786.2" stroke="#000" stroke-width="0.9"/><line x1="1032.5" y1="834.5" x2="1032.5" y2="822.5" stroke="#000" stroke-width="1"/><line x1="1020.3" y1="822.5" x2="1032.3" y2="822.5" stroke="#000" stroke-width="1"/><line x1="1020.3" y1="822.5" x2="1032.3" y2="834.5" stroke="#000" stroke-width="0.9"/><line x1="1056.5" y1="834.5" x2="1056.5" y2="822.5" stroke="#000" stroke-width="1"/><line x1="1068.8" y1="822.5" x2="1056.8" y2="822.5" stroke="#000" stroke-width="1"/><line x1="1068.8" y1="822.5" x2="1056.8" y2="834.5" stroke="#000" stroke-width="0.9"/><circle cx="1020.3" cy="786.2" r="1.0" fill="#000"/><circle cx="1068.8" cy="786.2" r="1.0" fill="#000"/><circle cx="1020.3" cy="834.5" r="1.0" fill="#000"/><circle cx="1068.8" cy="834.5" r="1.0" fill="#000"/><circle cx="1044.5" cy="786.2" r="1.0" fill="#000"/><circle cx="1044.5" cy="834.5" r="1.0" fill="#000"/><circle cx="1020.3" cy="810.4" r="1.0" fill="#000"/><circle cx="1068.8" cy="810.4" r="1.0" fill="#000"/><line x1="1032.5" y1="798.3" x2="1032.5" y2="822.4" stroke="#999" stroke-width="1"/><line x1="1056.5" y1="798.3" x2="1056.5" y2="822.4" stroke="#999" stroke-width="1"/><rect x="1150.5" y="788.5" width="90.0" height="90.0" fill="none" stroke="#000" stroke-width="1"/><polygon points="1195.2,788.3 1217.6,810.7 1240.0,833.1 1217.6,855.6 1195.2,878.0 1172.7,855.6 1150.3,833.1 1172.7,810.7" fill="none" stroke="#000" stroke-width="1.0"/><line x1="1172.5" y1="788.3" x2="1172.5" y2="810.7" stroke="#000" stroke-width="1"/><line x1="1150.3" y1="810.5" x2="1172.7" y2="810.5" stroke="#000" stroke-width="1"/><line x1="1150.3" y1="810.7" x2="1172.7" y2="788.3" stroke="#000" stroke-width="0.9"/><line x1="1217.5" y1="788.3" x2="1217.5" y2="810.7" stroke="#000" stroke-width="1"/><line x1="1240.0" y1="810.5" x2="1217.6" y2="810.5" stroke="#000" stroke-width="1"/><line x1="1240.0" y1="810.7" x2="1217.6" y2="788.3" stroke="#000" stroke-width="0.9"/><line x1="1172.5" y1="878.0" x2="1172.5" y2="855.6" stroke="#000" stroke-width="1"/><line x1="1150.3" y1="855.5" x2="1172.7" y2="855.5" stroke="#000" stroke-width="1"/><line x1="1150.3" y1="855.6" x2="1172.7" y2="878.0" stroke="#000" stroke-width="0.9"/><line x1="1217.5" y1="878.0" x2="1217.5" y2="855.6" stroke="#000" stroke-width="1"/><line x1="1240.0" y1="855.5" x2="1217.6" y2="855.5" stroke="#000" stroke-width="1"/><line x1="1240.0" y1="855.6" x2="1217.6" y2="878.0" stroke="#000" stroke-width="0.9"/><circle cx="1150.3" cy="788.3" r="1.0" fill="#000"/><circle cx="1240.0" cy="788.3" r="1.0" fill="#000"/><circle cx="1150.3" cy="878.0" r="1.0" fill="#000"/><circle cx="1240.0" cy="878.0" r="1.0" fill="#000"/><circle cx="1195.2" cy="788.3" r="1.0" fill="#000"/><circle cx="1195.2" cy="878.0" r="1.0" fill="#000"/><circle cx="1150.3" cy="833.1" r="1.0" fill="#000"/><circle cx="1240.0" cy="833.1" r="1.0" fill="#000"/><line x1="1150.3" y1="878.0" x2="1240.0" y2="878.0" stroke="#999" stroke-width="2"/><line x1="1240.0" y1="788.3" x2="1240.0" y2="878.0" stroke="#999" stroke-width="2"/><line x1="1172.5" y1="810.7" x2="1172.5" y2="855.6" stroke="#333" stroke-width="1" stroke-dasharray="1,1"/><line x1="1217.5" y1="810.7" x2="1217.5" y2="855.6" stroke="#222" stroke-width="1"/><line x1="1694.5" y1="607.0" x2="1694.5" y2="864.0" stroke="#555" stroke-width="1" stroke-dasharray="1,1.5"/><line x1="1694.7" y1="607.5" x2="1806.0" y2="607.5" stroke="#ccc" stroke-width="1"/><line x1="1694.7" y1="616.5" x2="1797.8" y2="616.5" stroke="#000" stroke-width="1"/><circle cx="1694.7" cy="616.6" r="1.2" fill="#000"/><circle cx="1722.6" cy="616.6" r="1.2" fill="#000"/><circle cx="1759.7" cy="616.6" r="1.2" fill="#000"/><line x1="1722.5" y1="607.0" x2="1722.5" y2="864.0" stroke="#000" stroke-width="1"/><line x1="1759.5" y1="607.0" x2="1759.5" y2="864.0" stroke="#222" stroke-width="1"/><text x="1708.0" y="611.5" font-size="3.2" fill="#888" text-anchor="middle" >Bezeichnung</text><text x="1741.0" y="611.5" font-size="3.2" fill="#888" text-anchor="middle" >Profil</text><text x="1780.0" y="611.5" font-size="3.2" fill="#888" text-anchor="middle" >Material</text><line x1="1696.0" y1="621.5" x2="1699.0" y2="621.5" stroke="#999" stroke-width="1"/><line x1="1724.0" y1="622.0" x2="1734.0" y2="622.0" stroke="#a8a8a8" stroke-width="2"/><line x1="1762.0" y1="622.0" x2="1768.0" y2="622.0" stroke="#a0a0a0" stroke-width="2"/><circle cx="1722.6" cy="621.6" r="1.1" fill="#000"/><circle cx="1759.7" cy="621.6" r="1.2" fill="#000"/><line x1="1696.0" y1="626.5" x2="1699.0" y2="626.5" stroke="#999" stroke-width="1"/><line x1="1724.0" y1="626.0" x2="1734.0" y2="626.0" stroke="#a8a8a8" stroke-width="2"/><line x1="1762.0" y1="626.0" x2="1768.0" y2="626.0" stroke="#a0a0a0" stroke-width="2"/><circle cx="1722.6" cy="626.3" r="1.1" fill="#000"/><circle cx="1759.7" cy="626.3" r="1.2" fill="#000"/><line x1="1696.0" y1="630.5" x2="1699.0" y2="630.5" stroke="#999" stroke-width="1"/><line x1="1724.0" y1="631.0" x2="1734.0" y2="631.0" stroke="#a8a8a8" stroke-width="2"/><line x1="1762.0" y1="631.0" x2="1768.0" y2="631.0" stroke="#a0a0a0" stroke-width="2"/><circle cx="1722.6" cy="630.9" r="1.1" fill="#000"/><circle cx="1759.7" cy="630.9" r="1.2" fill="#000"/><line x1="1696.0" y1="635.5" x2="1699.0" y2="635.5" stroke="#999" stroke-width="1"/><line x1="1724.0" y1="636.0" x2="1734.0" y2="636.0" stroke="#a8a8a8" stroke-width="2"/><line x1="1762.0" y1="636.0" x2="1768.0" y2="636.0" stroke="#a0a0a0" stroke-width="2"/><circle cx="1722.6" cy="635.6" r="1.1" fill="#000"/><circle cx="1759.7" cy="635.6" r="1.2" fill="#000"/><line x1="1696.0" y1="640.5" x2="1699.0" y2="640.5" stroke="#999" stroke-width="1"/><line x1="1724.0" y1="640.0" x2="1734.0" y2="640.0" stroke="#a8a8a8" stroke-width="2"/><line x1="1762.0" y1="640.0" x2="1768.0" y2="640.0" stroke="#a0a0a0" stroke-width="2"/><circle cx="1722.6" cy="640.2" r="1.1" fill="#000"/><circle cx="1759.7" cy="640.2" r="1.2" fill="#000"/><line x1="1696.0" y1="644.5" x2="1699.0" y2="644.5" stroke="#999" stroke-width="1"/><line x1="1724.0" y1="645.0" x2="1734.0" y2="645.0" stroke="#a8a8a8" stroke-width="2"/><line x1="1762.0" y1="645.0" x2="1768.0" y2="645.0" stroke="#a0a0a0" stroke-width="2"/><circle cx="1722.6" cy="644.9" r="1.1" fill="#000"/><circle cx="1759.7" cy="644.9" r="1.2" fill="#000"/><line x1="1696.0" y1="649.5" x2="1699.0" y2="649.5" stroke="#999" stroke-width="1"/><line x1="1724.0" y1="650.0" x2="1734.0" y2="650.0" stroke="#a8a8a8" stroke-width="2"/><line x1="1762.0" y1="650.0" x2="1768.0" y2="650.0" stroke="#a0a0a0" stroke-width="2"/><circle cx="1722.6" cy="649.6" r="1.1" fill="#000"/><circle cx="1759.7" cy="649.6" r="1.2" fill="#000"/><line x1="1696.0" y1="654.5" x2="1699.0" y2="654.5" stroke="#999" stroke-width="1"/><line x1="1724.0" y1="654.0" x2="1734.0" y2="654.0" stroke="#a8a8a8" stroke-width="2"/><line x1="1762.0" y1="654.0" x2="1768.0" y2="654.0" stroke="#a0a0a0" stroke-width="2"/><circle cx="1722.6" cy="654.2" r="1.1" fill="#000"/><circle cx="1759.7" cy="654.2" r="1.2" fill="#000"/><line x1="1696.0" y1="658.5" x2="1699.0" y2="658.5" stroke="#999" stroke-width="1"/><line x1="1724.0" y1="659.0" x2="1734.0" y2="659.0" stroke="#a8a8a8" stroke-width="2"/><line x1="1762.0" y1="659.0" x2="1768.0" y2="659.0" stroke="#a0a0a0" stroke-width="2"/><circle cx="1722.6" cy="658.9" r="1.1" fill="#000"/><circle cx="1759.7" cy="658.9" r="1.2" fill="#000"/><line x1="1696.0" y1="663.5" x2="1699.0" y2="663.5" stroke="#999" stroke-width="1"/><line x1="1724.0" y1="664.0" x2="1734.0" y2="664.0" stroke="#a8a8a8" stroke-width="2"/><line x1="1762.0" y1="664.0" x2="1768.0" y2="664.0" stroke="#a0a0a0" stroke-width="2"/><circle cx="1722.6" cy="663.5" r="1.1" fill="#000"/><circle cx="1759.7" cy="663.5" r="1.2" fill="#000"/><line x1="1696.0" y1="668.5" x2="1699.0" y2="668.5" stroke="#999" stroke-width="1"/><line x1="1724.0" y1="668.0" x2="1734.0" y2="668.0" stroke="#a8a8a8" stroke-width="2"/><line x1="1762.0" y1="668.0" x2="1768.0" y2="668.0" stroke="#a0a0a0" stroke-width="2"/><circle cx="1722.6" cy="668.2" r="1.1" fill="#000"/><circle cx="1759.7" cy="668.2" r="1.2" fill="#000"/><line x1="1696.0" y1="672.5" x2="1699.0" y2="672.5" stroke="#999" stroke-width="1"/><line x1="1724.0" y1="673.0" x2="1734.0" y2="673.0" stroke="#a8a8a8" stroke-width="2"/><line x1="1762.0" y1="673.0" x2="1768.0" y2="673.0" stroke="#a0a0a0" stroke-width="2"/><circle cx="1722.6" cy="672.9" r="1.1" fill="#000"/><circle cx="1759.7" cy="672.9" r="1.2" fill="#000"/><line x1="1696.0" y1="677.5" x2="1699.0" y2="677.5" stroke="#999" stroke-width="1"/><line x1="1724.0" y1="678.0" x2="1734.0" y2="678.0" stroke="#a8a8a8" stroke-width="2"/><line x1="1762.0" y1="678.0" x2="1768.0" y2="678.0" stroke="#a0a0a0" stroke-width="2"/><circle cx="1722.6" cy="677.5" r="1.1" fill="#000"/><circle cx="1759.7" cy="677.5" r="1.2" fill="#000"/><line x1="1696.0" y1="682.5" x2="1699.0" y2="682.5" stroke="#999" stroke-width="1"/><line x1="1724.0" y1="682.0" x2="1734.0" y2="682.0" stroke="#a8a8a8" stroke-width="2"/><line x1="1762.0" y1="682.0" x2="1768.0" y2="682.0" stroke="#a0a0a0" stroke-width="2"/><circle cx="1722.6" cy="682.2" r="1.1" fill="#000"/><circle cx="1759.7" cy="682.2" r="1.2" fill="#000"/><line x1="1696.0" y1="686.5" x2="1699.0" y2="686.5" stroke="#999" stroke-width="1"/><line x1="1724.0" y1="687.0" x2="1734.0" y2="687.0" stroke="#a8a8a8" stroke-width="2"/><line x1="1762.0" y1="687.0" x2="1768.0" y2="687.0" stroke="#a0a0a0" stroke-width="2"/><circle cx="1722.6" cy="686.8" r="1.1" fill="#000"/><circle cx="1759.7" cy="686.8" r="1.2" fill="#000"/><line x1="1696.0" y1="691.5" x2="1699.0" y2="691.5" stroke="#999" stroke-width="1"/><line x1="1724.0" y1="691.0" x2="1734.0" y2="691.0" stroke="#a8a8a8" stroke-width="2"/><line x1="1762.0" y1="691.0" x2="1768.0" y2="691.0" stroke="#a0a0a0" stroke-width="2"/><circle cx="1722.6" cy="691.5" r="1.1" fill="#000"/><circle cx="1759.7" cy="691.5" r="1.2" fill="#000"/><line x1="1696.0" y1="696.5" x2="1699.0" y2="696.5" stroke="#999" stroke-width="1"/><line x1="1724.0" y1="696.0" x2="1734.0" y2="696.0" stroke="#a8a8a8" stroke-width="2"/><line x1="1762.0" y1="696.0" x2="1768.0" y2="696.0" stroke="#a0a0a0" stroke-width="2"/><circle cx="1722.6" cy="696.2" r="1.1" fill="#000"/><circle cx="1759.7" cy="696.2" r="1.2" fill="#000"/><line x1="1696.0" y1="700.5" x2="1699.0" y2="700.5" stroke="#999" stroke-width="1"/><line x1="1724.0" y1="701.0" x2="1734.0" y2="701.0" stroke="#a8a8a8" stroke-width="2"/><line x1="1762.0" y1="701.0" x2="1768.0" y2="701.0" stroke="#a0a0a0" stroke-width="2"/><circle cx="1722.6" cy="700.8" r="1.1" fill="#000"/><circle cx="1759.7" cy="700.8" r="1.2" fill="#000"/><line x1="1696.0" y1="705.5" x2="1699.0" y2="705.5" stroke="#999" stroke-width="1"/><line x1="1724.0" y1="705.0" x2="1734.0" y2="705.0" stroke="#a8a8a8" stroke-width="2"/><line x1="1762.0" y1="705.0" x2="1768.0" y2="705.0" stroke="#a0a0a0" stroke-width="2"/><circle cx="1722.6" cy="705.5" r="1.1" fill="#000"/><circle cx="1759.7" cy="705.5" r="1.2" fill="#000"/><line x1="1696.0" y1="710.5" x2="1699.0" y2="710.5" stroke="#999" stroke-width="1"/><line x1="1724.0" y1="710.0" x2="1734.0" y2="710.0" stroke="#a8a8a8" stroke-width="2"/><line x1="1762.0" y1="710.0" x2="1768.0" y2="710.0" stroke="#a0a0a0" stroke-width="2"/><circle cx="1722.6" cy="710.1" r="1.1" fill="#000"/><circle cx="1759.7" cy="710.1" r="1.2" fill="#000"/><line x1="1696.0" y1="714.5" x2="1699.0" y2="714.5" stroke="#999" stroke-width="1"/><line x1="1724.0" y1="715.0" x2="1734.0" y2="715.0" stroke="#a8a8a8" stroke-width="2"/><line x1="1762.0" y1="715.0" x2="1768.0" y2="715.0" stroke="#a0a0a0" stroke-width="2"/><circle cx="1722.6" cy="714.8" r="1.1" fill="#000"/><circle cx="1759.7" cy="714.8" r="1.2" fill="#000"/><line x1="1696.0" y1="719.5" x2="1699.0" y2="719.5" stroke="#999" stroke-width="1"/><line x1="1724.0" y1="719.0" x2="1734.0" y2="719.0" stroke="#a8a8a8" stroke-width="2"/><line x1="1762.0" y1="719.0" x2="1768.0" y2="719.0" stroke="#a0a0a0" stroke-width="2"/><circle cx="1722.6" cy="719.5" r="1.1" fill="#000"/><circle cx="1759.7" cy="719.5" r="1.2" fill="#000"/><line x1="1696.0" y1="724.5" x2="1699.0" y2="724.5" stroke="#999" stroke-width="1"/><line x1="1724.0" y1="724.0" x2="1734.0" y2="724.0" stroke="#a8a8a8" stroke-width="2"/><line x1="1762.0" y1="724.0" x2="1768.0" y2="724.0" stroke="#a0a0a0" stroke-width="2"/><circle cx="1722.6" cy="724.1" r="1.1" fill="#000"/><circle cx="1759.7" cy="724.1" r="1.2" fill="#000"/><line x1="1696.0" y1="728.5" x2="1699.0" y2="728.5" stroke="#999" stroke-width="1"/><line x1="1724.0" y1="729.0" x2="1734.0" y2="729.0" stroke="#a8a8a8" stroke-width="2"/><line x1="1762.0" y1="729.0" x2="1768.0" y2="729.0" stroke="#a0a0a0" stroke-width="2"/><circle cx="1722.6" cy="728.8" r="1.1" fill="#000"/><circle cx="1759.7" cy="728.8" r="1.2" fill="#000"/><line x1="1696.0" y1="733.5" x2="1699.0" y2="733.5" stroke="#999" stroke-width="1"/><line x1="1724.0" y1="733.0" x2="1734.0" y2="733.0" stroke="#a8a8a8" stroke-width="2"/><line x1="1762.0" y1="733.0" x2="1768.0" y2="733.0" stroke="#a0a0a0" stroke-width="2"/><circle cx="1722.6" cy="733.4" r="1.1" fill="#000"/><circle cx="1759.7" cy="733.4" r="1.2" fill="#000"/><line x1="1696.0" y1="738.5" x2="1699.0" y2="738.5" stroke="#999" stroke-width="1"/><line x1="1724.0" y1="738.0" x2="1734.0" y2="738.0" stroke="#a8a8a8" stroke-width="2"/><line x1="1762.0" y1="738.0" x2="1768.0" y2="738.0" stroke="#a0a0a0" stroke-width="2"/><circle cx="1722.6" cy="738.1" r="1.1" fill="#000"/><circle cx="1759.7" cy="738.1" r="1.2" fill="#000"/><line x1="1696.0" y1="742.5" x2="1699.0" y2="742.5" stroke="#999" stroke-width="1"/><line x1="1724.0" y1="743.0" x2="1734.0" y2="743.0" stroke="#a8a8a8" stroke-width="2"/><line x1="1762.0" y1="743.0" x2="1768.0" y2="743.0" stroke="#a0a0a0" stroke-width="2"/><circle cx="1722.6" cy="742.8" r="1.1" fill="#000"/><circle cx="1759.7" cy="742.8" r="1.2" fill="#000"/><line x1="1696.0" y1="747.5" x2="1699.0" y2="747.5" stroke="#999" stroke-width="1"/><line x1="1724.0" y1="747.0" x2="1734.0" y2="747.0" stroke="#a8a8a8" stroke-width="2"/><line x1="1762.0" y1="747.0" x2="1768.0" y2="747.0" stroke="#a0a0a0" stroke-width="2"/><circle cx="1722.6" cy="747.4" r="1.1" fill="#000"/><circle cx="1759.7" cy="747.4" r="1.2" fill="#000"/><line x1="1696.0" y1="752.5" x2="1699.0" y2="752.5" stroke="#999" stroke-width="1"/><line x1="1724.0" y1="752.0" x2="1734.0" y2="752.0" stroke="#a8a8a8" stroke-width="2"/><line x1="1762.0" y1="752.0" x2="1768.0" y2="752.0" stroke="#a0a0a0" stroke-width="2"/><circle cx="1722.6" cy="752.1" r="1.1" fill="#000"/><circle cx="1759.7" cy="752.1" r="1.2" fill="#000"/><line x1="1696.0" y1="756.5" x2="1699.0" y2="756.5" stroke="#999" stroke-width="1"/><line x1="1724.0" y1="757.0" x2="1734.0" y2="757.0" stroke="#a8a8a8" stroke-width="2"/><line x1="1762.0" y1="757.0" x2="1768.0" y2="757.0" stroke="#a0a0a0" stroke-width="2"/><circle cx="1722.6" cy="756.7" r="1.1" fill="#000"/><circle cx="1759.7" cy="756.7" r="1.2" fill="#000"/><line x1="1696.0" y1="761.5" x2="1699.0" y2="761.5" stroke="#999" stroke-width="1"/><line x1="1724.0" y1="761.0" x2="1734.0" y2="761.0" stroke="#a8a8a8" stroke-width="2"/><line x1="1762.0" y1="761.0" x2="1768.0" y2="761.0" stroke="#a0a0a0" stroke-width="2"/><circle cx="1722.6" cy="761.4" r="1.1" fill="#000"/><circle cx="1759.7" cy="761.4" r="1.2" fill="#000"/><line x1="1696.0" y1="766.5" x2="1699.0" y2="766.5" stroke="#999" stroke-width="1"/><line x1="1724.0" y1="766.0" x2="1734.0" y2="766.0" stroke="#a8a8a8" stroke-width="2"/><line x1="1762.0" y1="766.0" x2="1768.0" y2="766.0" stroke="#a0a0a0" stroke-width="2"/><circle cx="1722.6" cy="766.1" r="1.1" fill="#000"/><circle cx="1759.7" cy="766.1" r="1.2" fill="#000"/><line x1="1696.0" y1="770.5" x2="1699.0" y2="770.5" stroke="#999" stroke-width="1"/><line x1="1724.0" y1="771.0" x2="1734.0" y2="771.0" stroke="#a8a8a8" stroke-width="2"/><line x1="1762.0" y1="771.0" x2="1768.0" y2="771.0" stroke="#a0a0a0" stroke-width="2"/><circle cx="1722.6" cy="770.7" r="1.1" fill="#000"/><circle cx="1759.7" cy="770.7" r="1.2" fill="#000"/><line x1="1696.0" y1="775.5" x2="1699.0" y2="775.5" stroke="#999" stroke-width="1"/><line x1="1724.0" y1="775.0" x2="1734.0" y2="775.0" stroke="#a8a8a8" stroke-width="2"/><line x1="1762.0" y1="775.0" x2="1768.0" y2="775.0" stroke="#a0a0a0" stroke-width="2"/><circle cx="1722.6" cy="775.4" r="1.1" fill="#000"/><circle cx="1759.7" cy="775.4" r="1.2" fill="#000"/><line x1="1696.0" y1="780.5" x2="1699.0" y2="780.5" stroke="#999" stroke-width="1"/><line x1="1724.0" y1="780.0" x2="1734.0" y2="780.0" stroke="#a8a8a8" stroke-width="2"/><line x1="1762.0" y1="780.0" x2="1768.0" y2="780.0" stroke="#a0a0a0" stroke-width="2"/><circle cx="1722.6" cy="780.0" r="1.1" fill="#000"/><circle cx="1759.7" cy="780.0" r="1.2" fill="#000"/><line x1="1696.0" y1="784.5" x2="1699.0" y2="784.5" stroke="#999" stroke-width="1"/><line x1="1724.0" y1="785.0" x2="1734.0" y2="785.0" stroke="#a8a8a8" stroke-width="2"/><line x1="1762.0" y1="785.0" x2="1768.0" y2="785.0" stroke="#a0a0a0" stroke-width="2"/><circle cx="1722.6" cy="784.7" r="1.1" fill="#000"/><circle cx="1759.7" cy="784.7" r="1.2" fill="#000"/><line x1="1696.0" y1="789.5" x2="1699.0" y2="789.5" stroke="#999" stroke-width="1"/><line x1="1724.0" y1="789.0" x2="1734.0" y2="789.0" stroke="#a8a8a8" stroke-width="2"/><line x1="1762.0" y1="789.0" x2="1768.0" y2="789.0" stroke="#a0a0a0" stroke-width="2"/><circle cx="1722.6" cy="789.4" r="1.1" fill="#000"/><circle cx="1759.7" cy="789.4" r="1.2" fill="#000"/><line x1="1696.0" y1="794.5" x2="1699.0" y2="794.5" stroke="#999" stroke-width="1"/><line x1="1724.0" y1="794.0" x2="1734.0" y2="794.0" stroke="#a8a8a8" stroke-width="2"/><line x1="1762.0" y1="794.0" x2="1768.0" y2="794.0" stroke="#a0a0a0" stroke-width="2"/><circle cx="1722.6" cy="794.0" r="1.1" fill="#000"/><circle cx="1759.7" cy="794.0" r="1.2" fill="#000"/><line x1="1696.0" y1="798.5" x2="1699.0" y2="798.5" stroke="#999" stroke-width="1"/><line x1="1724.0" y1="799.0" x2="1734.0" y2="799.0" stroke="#a8a8a8" stroke-width="2"/><line x1="1762.0" y1="799.0" x2="1768.0" y2="799.0" stroke="#a0a0a0" stroke-width="2"/><circle cx="1722.6" cy="798.7" r="1.1" fill="#000"/><circle cx="1759.7" cy="798.7" r="1.2" fill="#000"/><line x1="1696.0" y1="803.5" x2="1699.0" y2="803.5" stroke="#999" stroke-width="1"/><line x1="1724.0" y1="803.0" x2="1734.0" y2="803.0" stroke="#a8a8a8" stroke-width="2"/><line x1="1762.0" y1="803.0" x2="1768.0" y2="803.0" stroke="#a0a0a0" stroke-width="2"/><circle cx="1722.6" cy="803.3" r="1.1" fill="#000"/><circle cx="1759.7" cy="803.3" r="1.2" fill="#000"/><line x1="1696.0" y1="807.5" x2="1699.0" y2="807.5" stroke="#999" stroke-width="1"/><line x1="1724.0" y1="808.0" x2="1734.0" y2="808.0" stroke="#a8a8a8" stroke-width="2"/><line x1="1762.0" y1="808.0" x2="1768.0" y2="808.0" stroke="#a0a0a0" stroke-width="2"/><circle cx="1722.6" cy="808.0" r="1.1" fill="#000"/><circle cx="1759.7" cy="808.0" r="1.2" fill="#000"/><line x1="1696.0" y1="812.5" x2="1699.0" y2="812.5" stroke="#999" stroke-width="1"/><line x1="1724.0" y1="813.0" x2="1734.0" y2="813.0" stroke="#a8a8a8" stroke-width="2"/><line x1="1762.0" y1="813.0" x2="1768.0" y2="813.0" stroke="#a0a0a0" stroke-width="2"/><circle cx="1722.6" cy="812.7" r="1.1" fill="#000"/><circle cx="1759.7" cy="812.7" r="1.2" fill="#000"/><line x1="1696.0" y1="817.5" x2="1699.0" y2="817.5" stroke="#999" stroke-width="1"/><line x1="1724.0" y1="817.0" x2="1734.0" y2="817.0" stroke="#a8a8a8" stroke-width="2"/><line x1="1762.0" y1="817.0" x2="1768.0" y2="817.0" stroke="#a0a0a0" stroke-width="2"/><circle cx="1722.6" cy="817.3" r="1.1" fill="#000"/><circle cx="1759.7" cy="817.3" r="1.2" fill="#000"/><line x1="1696.0" y1="821.5" x2="1699.0" y2="821.5" stroke="#999" stroke-width="1"/><line x1="1724.0" y1="822.0" x2="1734.0" y2="822.0" stroke="#a8a8a8" stroke-width="2"/><line x1="1762.0" y1="822.0" x2="1768.0" y2="822.0" stroke="#a0a0a0" stroke-width="2"/><circle cx="1722.6" cy="822.0" r="1.1" fill="#000"/><circle cx="1759.7" cy="822.0" r="1.2" fill="#000"/><line x1="1696.0" y1="826.5" x2="1699.0" y2="826.5" stroke="#999" stroke-width="1"/><line x1="1724.0" y1="827.0" x2="1734.0" y2="827.0" stroke="#a8a8a8" stroke-width="2"/><line x1="1762.0" y1="827.0" x2="1768.0" y2="827.0" stroke="#a0a0a0" stroke-width="2"/><circle cx="1722.6" cy="826.6" r="1.1" fill="#000"/><circle cx="1759.7" cy="826.6" r="1.2" fill="#000"/><line x1="1696.0" y1="831.5" x2="1699.0" y2="831.5" stroke="#999" stroke-width="1"/><line x1="1724.0" y1="831.0" x2="1734.0" y2="831.0" stroke="#a8a8a8" stroke-width="2"/><line x1="1762.0" y1="831.0" x2="1768.0" y2="831.0" stroke="#a0a0a0" stroke-width="2"/><circle cx="1722.6" cy="831.3" r="1.1" fill="#000"/><circle cx="1759.7" cy="831.3" r="1.2" fill="#000"/><line x1="1696.0" y1="835.5" x2="1699.0" y2="835.5" stroke="#999" stroke-width="1"/><line x1="1724.0" y1="836.0" x2="1734.0" y2="836.0" stroke="#a8a8a8" stroke-width="2"/><line x1="1762.0" y1="836.0" x2="1768.0" y2="836.0" stroke="#a0a0a0" stroke-width="2"/><circle cx="1722.6" cy="836.0" r="1.1" fill="#000"/><circle cx="1759.7" cy="836.0" r="1.2" fill="#000"/><line x1="1696.0" y1="840.5" x2="1699.0" y2="840.5" stroke="#999" stroke-width="1"/><line x1="1724.0" y1="841.0" x2="1734.0" y2="841.0" stroke="#a8a8a8" stroke-width="2"/><line x1="1762.0" y1="841.0" x2="1768.0" y2="841.0" stroke="#a0a0a0" stroke-width="2"/><circle cx="1722.6" cy="840.6" r="1.1" fill="#000"/><circle cx="1759.7" cy="840.6" r="1.2" fill="#000"/><line x1="1696.0" y1="845.5" x2="1699.0" y2="845.5" stroke="#999" stroke-width="1"/><line x1="1724.0" y1="845.0" x2="1734.0" y2="845.0" stroke="#a8a8a8" stroke-width="2"/><line x1="1762.0" y1="845.0" x2="1768.0" y2="845.0" stroke="#a0a0a0" stroke-width="2"/><circle cx="1722.6" cy="845.3" r="1.1" fill="#000"/><circle cx="1759.7" cy="845.3" r="1.2" fill="#000"/><line x1="1696.0" y1="849.5" x2="1699.0" y2="849.5" stroke="#999" stroke-width="1"/><line x1="1724.0" y1="850.0" x2="1734.0" y2="850.0" stroke="#a8a8a8" stroke-width="2"/><line x1="1762.0" y1="850.0" x2="1768.0" y2="850.0" stroke="#a0a0a0" stroke-width="2"/><circle cx="1722.6" cy="849.9" r="1.1" fill="#000"/><circle cx="1759.7" cy="849.9" r="1.2" fill="#000"/><line x1="1696.0" y1="854.5" x2="1699.0" y2="854.5" stroke="#999" stroke-width="1"/><line x1="1724.0" y1="855.0" x2="1734.0" y2="855.0" stroke="#a8a8a8" stroke-width="2"/><line x1="1762.0" y1="855.0" x2="1768.0" y2="855.0" stroke="#a0a0a0" stroke-width="2"/><circle cx="1722.6" cy="854.6" r="1.1" fill="#000"/><circle cx="1759.7" cy="854.6" r="1.2" fill="#000"/><line x1="1696.0" y1="859.5" x2="1699.0" y2="859.5" stroke="#999" stroke-width="1"/><line x1="1724.0" y1="859.0" x2="1734.0" y2="859.0" stroke="#a8a8a8" stroke-width="2"/><line x1="1762.0" y1="859.0" x2="1768.0" y2="859.0" stroke="#a0a0a0" stroke-width="2"/><circle cx="1722.6" cy="859.3" r="1.1" fill="#000"/><circle cx="1759.7" cy="859.3" r="1.2" fill="#000"/><line x1="1694.0" y1="864.5" x2="1806.0" y2="864.5" stroke="#ddd" stroke-width="1"/><line x1="1638.4" y1="869.5" x2="1806.2" y2="869.5" stroke="#444" stroke-width="1"/><line x1="1638.5" y1="869.9" x2="1638.5" y2="924.8" stroke="#000" stroke-width="1"/><line x1="1694.5" y1="869.9" x2="1694.5" y2="924.8" stroke="#000" stroke-width="1"/><line x1="1731.5" y1="869.9" x2="1731.5" y2="924.8" stroke="#555" stroke-width="1"/><line x1="1638.4" y1="887.0" x2="1806.0" y2="887.0" stroke="#999" stroke-width="2"/><line x1="1638.4" y1="891.5" x2="1694.6" y2="891.5" stroke="#111" stroke-width="1"/><line x1="1638.4" y1="895.5" x2="1694.6" y2="895.5" stroke="#111" stroke-width="1"/><line x1="1638.4" y1="899.5" x2="1731.8" y2="899.5" stroke="#000" stroke-width="1"/><line x1="1638.4" y1="903.5" x2="1694.6" y2="903.5" stroke="#111" stroke-width="1"/><line x1="1638.4" y1="908.0" x2="1806.0" y2="908.0" stroke="#999" stroke-width="2"/><line x1="1638.4" y1="912.5" x2="1694.6" y2="912.5" stroke="#111" stroke-width="1"/><line x1="1638.4" y1="916.5" x2="1694.6" y2="916.5" stroke="#111" stroke-width="1"/><line x1="1638.4" y1="920.5" x2="1806.0" y2="920.5" stroke="#000" stroke-width="1"/><line x1="1638.4" y1="924.5" x2="1806.0" y2="924.5" stroke="#000" stroke-width="1"/><line x1="1647.5" y1="886.8" x2="1647.5" y2="924.8" stroke="#333" stroke-width="1"/><line x1="1671.5" y1="886.8" x2="1671.5" y2="924.8" stroke="#333" stroke-width="1"/><line x1="1685.5" y1="886.8" x2="1685.5" y2="924.8" stroke="#333" stroke-width="1"/><line x1="1703.5" y1="886.8" x2="1703.5" y2="908.1" stroke="#333" stroke-width="1"/><line x1="1717.5" y1="886.8" x2="1717.5" y2="908.1" stroke="#333" stroke-width="1"/><line x1="1731.8" y1="875.5" x2="1806.0" y2="875.5" stroke="#222" stroke-width="1"/><line x1="1783.5" y1="870.0" x2="1783.5" y2="875.3" stroke="#000" stroke-width="1"/><line x1="1792.5" y1="908.0" x2="1792.5" y2="920.4" stroke="#000" stroke-width="1"/><line x1="1769.5" y1="920.4" x2="1769.5" y2="924.8" stroke="#000" stroke-width="1"/><text x="1746.0" y="874.3" font-size="5" fill="#6a6aff" text-anchor="start" >NKT150</text><text x="1793.0" y="874.3" font-size="5" fill="#6a6aff" text-anchor="start" >AD</text><text x="1746.0" y="882.5" font-size="5.2" fill="#6a6aff" text-anchor="start" >Zeichnung_10102025</text><text x="1707.0" y="893.5" font-size="3.5" fill="#9a9aff" text-anchor="start" >0.003</text><text x="1710.0" y="912.5" font-size="3.2" fill="#9a9aff" text-anchor="start" >1:400</text></svg>
</body></html>
